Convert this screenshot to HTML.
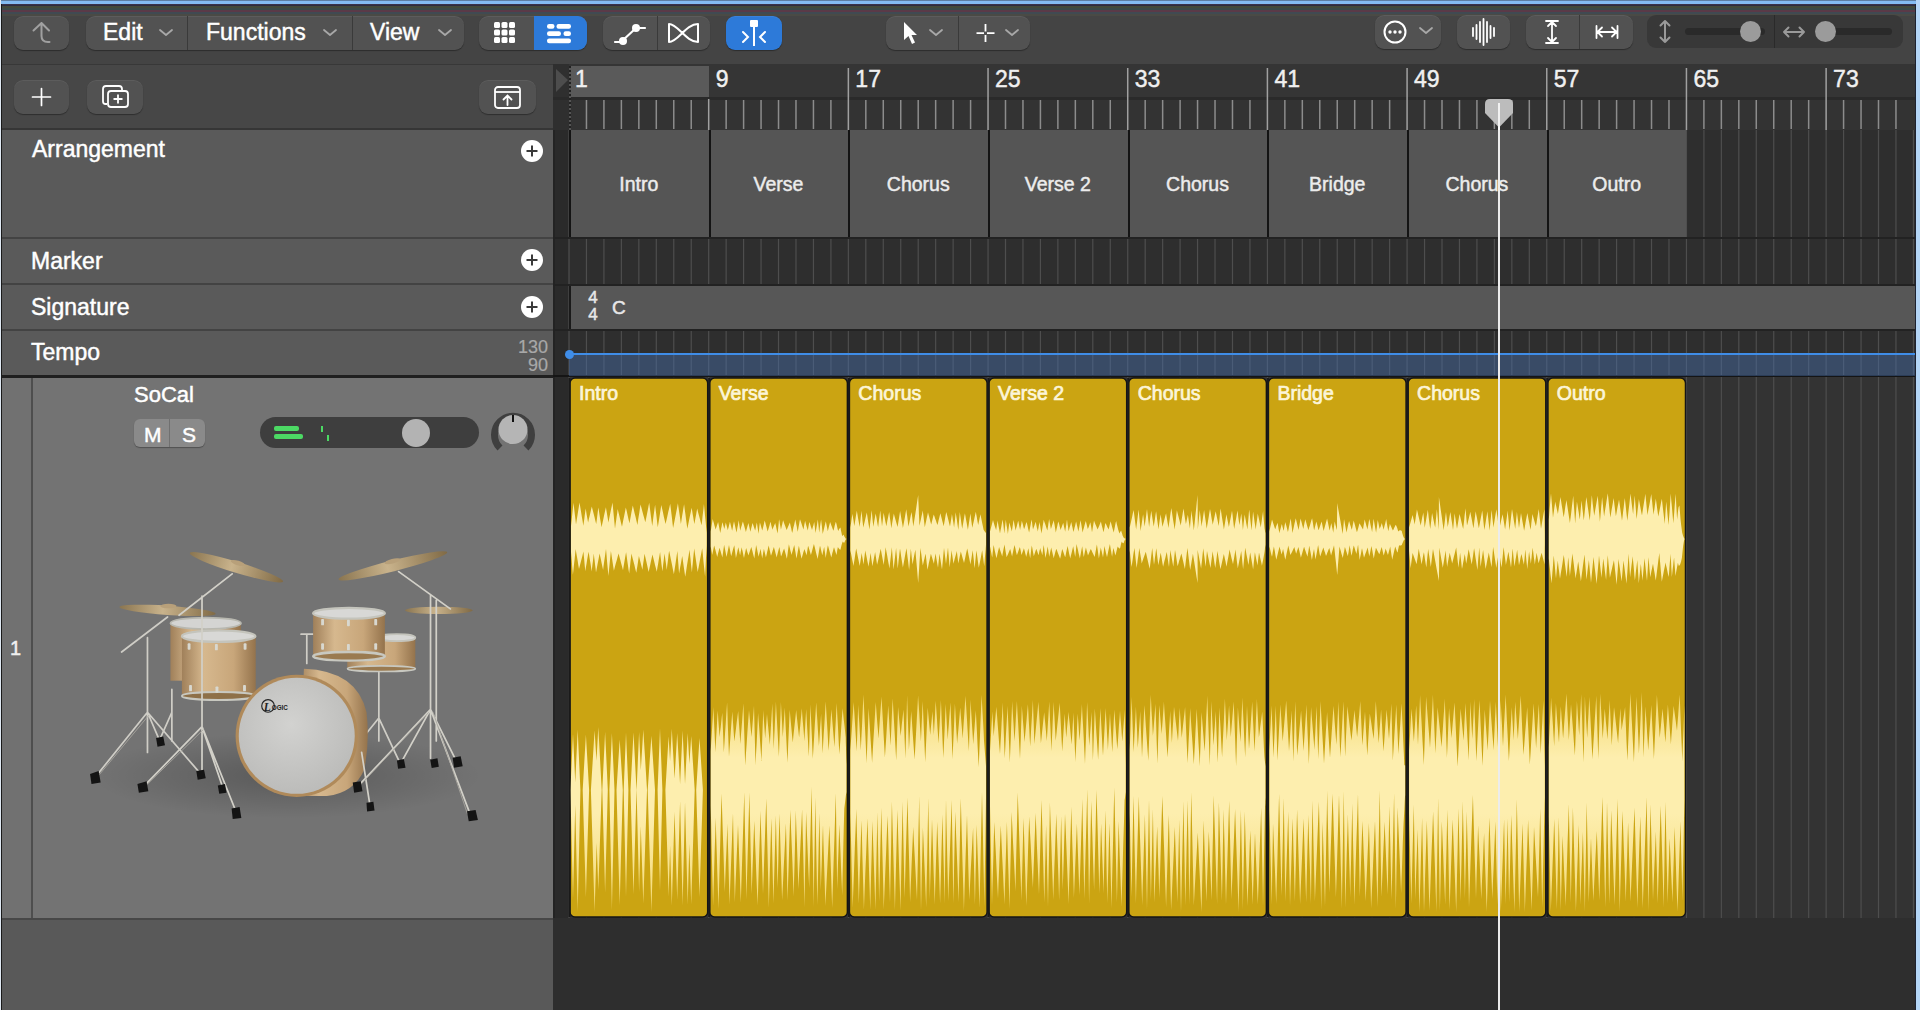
<!DOCTYPE html><html><head><meta charset="utf-8"><style>
*{margin:0;padding:0;box-sizing:border-box}
html,body{width:1920px;height:1010px;overflow:hidden;background:#2e2e2e;font-family:"Liberation Sans", sans-serif;}
.a{position:absolute}
.btn{position:absolute;background:#4d4d4d;border-radius:9px;box-shadow:0 1px 1px rgba(0,0,0,.35), inset 0 1px 0 rgba(255,255,255,.06)}
.t{position:absolute;white-space:pre;color:#fff;line-height:1;-webkit-text-stroke:0.45px currentColor}
</style></head><body><div class="a" style="left:0;top:0;width:1920px;height:4px;background:#84bcf2"></div>
<div class="a" style="left:0;top:0;width:1920px;height:1px;background:#5d7fa3"></div>
<div class="a" style="left:0;top:4px;width:1920px;height:60px;background:#444444"></div>
<div class="a" style="left:0;top:4px;width:1920px;height:1px;background:#3a3448"></div>
<div class="a" style="left:0;top:5px;width:1920px;height:1px;background:#2e2c40"></div>
<div class="a" style="left:0;top:6px;width:1920px;height:2px;background:#434a3a"></div>
<div class="a" style="left:0;top:8px;width:1920px;height:2px;background:#3a4a48"></div>
<div class="a" style="left:0;top:10px;width:1920px;height:2px;background:#5a3a48"></div>
<div class="a" style="left:0;top:12px;width:1920px;height:2px;background:#404a52"></div>
<div class="a" style="left:0;top:14px;width:1920px;height:2px;background:#4a4a45"></div>
<div class="a" style="left:0;top:64px;width:553px;height:66px;background:#474747"></div>
<div class="a" style="left:0;top:64px;width:553px;height:1px;background:#383838"></div>
<div class="a" style="left:0;top:128px;width:553px;height:2px;background:#363636"></div>
<div class="btn" style="left:14px;top:16px;width:55px;height:34px;background:#525252;border-radius:9px"></div>
<svg class="a" style="left:28px;top:18px" width="30" height="30"><path d="M5.5 12.5 L13.5 5 L21 12.5 M13.5 5 L13.5 18 Q13.5 24 20 24 L21.5 24" fill="none" stroke="#a0a0a0" stroke-width="2" stroke-linecap="round" stroke-linejoin="round"/></svg>
<div class="btn" style="left:86px;top:16px;width:378px;height:34px;background:#525252;border-radius:9px"></div>
<div class="a" style="left:187px;top:16px;width:1px;height:34px;background:#3a3a3a"></div>
<div class="a" style="left:352px;top:16px;width:1px;height:34px;background:#3a3a3a"></div>
<div class="t" style="left:103px;top:20.5px;font-size:23px;color:#fff;font-weight:normal;">Edit</div>
<svg class="a" style="left:159px;top:28px" width="14" height="10"><polyline points="1,2 7,7 13,2" fill="none" stroke="#a8a8a8" stroke-width="1.8" stroke-linecap="round" stroke-linejoin="round"/></svg>
<div class="t" style="left:206px;top:20.5px;font-size:23px;color:#fff;font-weight:normal;">Functions</div>
<svg class="a" style="left:323px;top:28px" width="14" height="10"><polyline points="1,2 7,7 13,2" fill="none" stroke="#a8a8a8" stroke-width="1.8" stroke-linecap="round" stroke-linejoin="round"/></svg>
<div class="t" style="left:370px;top:20.5px;font-size:23px;color:#fff;font-weight:normal;">View</div>
<svg class="a" style="left:438px;top:28px" width="14" height="10"><polyline points="1,2 7,7 13,2" fill="none" stroke="#a8a8a8" stroke-width="1.8" stroke-linecap="round" stroke-linejoin="round"/></svg>
<div class="btn" style="left:479px;top:16px;width:108px;height:34px;background:#525252;border-radius:9px"></div>
<div class="a" style="left:534px;top:16px;width:53px;height:34px;background:#2d7ad9;border-radius:0 9px 9px 0"></div>
<svg class="a" style="left:494px;top:22px" width="22" height="22"><rect x="0.0" y="0.0" width="6" height="6" rx="1.5" fill="#fff"/><rect x="7.5" y="0.0" width="6" height="6" rx="1.5" fill="#fff"/><rect x="15.0" y="0.0" width="6" height="6" rx="1.5" fill="#fff"/><rect x="0.0" y="7.5" width="6" height="6" rx="1.5" fill="#fff"/><rect x="7.5" y="7.5" width="6" height="6" rx="1.5" fill="#fff"/><rect x="15.0" y="7.5" width="6" height="6" rx="1.5" fill="#fff"/><rect x="0.0" y="15.0" width="6" height="6" rx="1.5" fill="#fff"/><rect x="7.5" y="15.0" width="6" height="6" rx="1.5" fill="#fff"/><rect x="15.0" y="15.0" width="6" height="6" rx="1.5" fill="#fff"/></svg>
<svg class="a" style="left:547px;top:24px" width="26" height="20"><rect x="0" y="0" width="7.5" height="4.8" rx="2.2" fill="#fff"/><rect x="9.5" y="0" width="14.5" height="4.8" rx="2.2" fill="#fff"/><rect x="0" y="7.2" width="14" height="4.8" rx="2.2" fill="#fff"/><rect x="16.5" y="7.2" width="7.5" height="4.8" rx="2.2" fill="#fff"/><rect x="0" y="14.4" width="24" height="4.8" rx="2.2" fill="#fff"/></svg>
<div class="btn" style="left:603px;top:16px;width:107px;height:34px;background:#525252;border-radius:9px"></div>
<div class="a" style="left:657px;top:16px;width:1px;height:34px;background:#3a3a3a"></div>
<svg class="a" style="left:612px;top:20px" width="36" height="28"><path d="M3 22 L9 22 L24 8 L33 8" fill="none" stroke="#fff" stroke-width="2.2" stroke-linecap="round"/><circle cx="11" cy="21" r="4" fill="#fff"/><circle cx="24" cy="8" r="4" fill="#fff"/></svg>
<svg class="a" style="left:666px;top:21px" width="36" height="26"><path d="M3 3 L3 21 C 12 21 20 3 32 3 L32 21 C 20 21 12 3 3 3 Z" fill="none" stroke="#fff" stroke-width="2" stroke-linejoin="round"/></svg>
<div class="btn" style="left:726px;top:16px;width:56px;height:34px;background:#2d7ad9;border-radius:9px"></div>
<svg class="a" style="left:738px;top:18px" width="32" height="30"><path d="M16 8 L16 28" stroke="#fff" stroke-width="2"/><rect x="12" y="2" width="8" height="7" rx="1" fill="#fff"/><path d="M5 14 L10 19 L5 24 M27 14 L22 19 L27 24" fill="none" stroke="#fff" stroke-width="2" stroke-linecap="round"/></svg>
<div class="btn" style="left:886px;top:16px;width:144px;height:34px;background:#525252;border-radius:9px"></div>
<div class="a" style="left:958px;top:16px;width:1px;height:34px;background:#3a3a3a"></div>
<svg class="a" style="left:900px;top:20px" width="22" height="26"><path d="M4 2 L4 20 L8.5 16 L12 24 L15 22.5 L11.5 15 L17 15 Z" fill="#fff"/></svg>
<svg class="a" style="left:929px;top:28px" width="14" height="10"><polyline points="1,2 7,7 13,2" fill="none" stroke="#a8a8a8" stroke-width="1.8" stroke-linecap="round" stroke-linejoin="round"/></svg>
<svg class="a" style="left:972px;top:20px" width="26" height="26"><path d="M13.5 4 L13.5 11.5 M13.5 15 L13.5 22 M4.5 13.2 L12 13.2 M15 13.2 L22.5 13.2" stroke="#fff" stroke-width="1.8"/></svg>
<svg class="a" style="left:1005px;top:28px" width="14" height="10"><polyline points="1,2 7,7 13,2" fill="none" stroke="#a8a8a8" stroke-width="1.8" stroke-linecap="round" stroke-linejoin="round"/></svg>
<div class="btn" style="left:1375px;top:14.5px;width:66px;height:34.0px;background:#525252;border-radius:9px"></div>
<svg class="a" style="left:1381px;top:17.5px" width="28" height="28"><circle cx="14" cy="14" r="10.5" fill="none" stroke="#fff" stroke-width="2"/><circle cx="9" cy="14" r="1.7" fill="#fff"/><circle cx="14" cy="14" r="1.7" fill="#fff"/><circle cx="19" cy="14" r="1.7" fill="#fff"/></svg>
<svg class="a" style="left:1419px;top:26px" width="14" height="10"><polyline points="1,2 7,7 13,2" fill="none" stroke="#a8a8a8" stroke-width="1.8" stroke-linecap="round" stroke-linejoin="round"/></svg>
<div class="btn" style="left:1457px;top:14.5px;width:53px;height:34.0px;background:#525252;border-radius:9px"></div>
<svg class="a" style="left:1471px;top:17.5px" width="28" height="28"><line x1="2" y1="10.0" x2="2" y2="18.0" stroke="#fff" stroke-width="1.8" stroke-linecap="round"/><line x1="5.5" y1="7.0" x2="5.5" y2="21.0" stroke="#fff" stroke-width="1.8" stroke-linecap="round"/><line x1="9" y1="4.0" x2="9" y2="24.0" stroke="#fff" stroke-width="1.8" stroke-linecap="round"/><line x1="12.5" y1="1.0" x2="12.5" y2="27.0" stroke="#fff" stroke-width="1.8" stroke-linecap="round"/><line x1="16" y1="4.0" x2="16" y2="24.0" stroke="#fff" stroke-width="1.8" stroke-linecap="round"/><line x1="19.5" y1="8.0" x2="19.5" y2="20.0" stroke="#fff" stroke-width="1.8" stroke-linecap="round"/><line x1="23" y1="10.0" x2="23" y2="18.0" stroke="#fff" stroke-width="1.8" stroke-linecap="round"/></svg>
<div class="btn" style="left:1526px;top:14.5px;width:107px;height:34.0px;background:#525252;border-radius:9px"></div>
<div class="a" style="left:1579px;top:14.5px;width:1px;height:34.0px;background:#3a3a3a"></div>
<svg class="a" style="left:1541px;top:18px" width="22" height="28"><path d="M5 3 L17 3 M5 25 L17 25 M11 4 L11 24 M7 8 L11 4 L15 8 M7 20 L11 24 L15 20" fill="none" stroke="#fff" stroke-width="1.8" stroke-linecap="round" stroke-linejoin="round"/></svg>
<svg class="a" style="left:1594px;top:20.5px" width="26" height="22"><path d="M2.5 5 L2.5 17 M23.5 5 L23.5 17 M3.5 11 L22.5 11 M8 6.5 L3.5 11 L8 15.5 M18 6.5 L22.5 11 L18 15.5" fill="none" stroke="#fff" stroke-width="1.8" stroke-linecap="round" stroke-linejoin="round"/></svg>
<div class="a" style="left:1647px;top:15px;width:256px;height:33px;background:#383838;border-radius:9px"></div>
<div class="a" style="left:1774px;top:15px;width:1px;height:33px;background:#2a2a2a"></div>
<svg class="a" style="left:1655px;top:18px" width="20" height="28"><path d="M10 3 L10 24 M5.5 7.5 L10 3 L14.5 7.5 M5.5 19.5 L10 24 L14.5 19.5" fill="none" stroke="#9a9a9a" stroke-width="2" stroke-linecap="round" stroke-linejoin="round"/></svg>
<div class="a" style="left:1685px;top:28px;width:80px;height:7px;background:#2a2a2a;border-radius:4px"></div>
<div class="a" style="left:1740px;top:21px;width:21px;height:21px;background:#9b9b9b;border-radius:50%"></div>
<svg class="a" style="left:1781px;top:20.5px" width="26" height="22"><path d="M3 11 L23 11 M7.5 6.5 L3 11 L7.5 15.5 M18.5 6.5 L23 11 L18.5 15.5" fill="none" stroke="#9a9a9a" stroke-width="2" stroke-linecap="round" stroke-linejoin="round"/></svg>
<div class="a" style="left:1816px;top:28px;width:76px;height:7px;background:#2a2a2a;border-radius:4px"></div>
<div class="a" style="left:1815px;top:21px;width:21px;height:21px;background:#9b9b9b;border-radius:50%"></div>
<div class="btn" style="left:14px;top:80px;width:55px;height:34px;background:#525252;border-radius:9px"></div>
<svg class="a" style="left:29px;top:84px" width="26" height="26"><path d="M12.5 4.5 L12.5 21.5 M3.5 13 L21.5 13" stroke="#fff" stroke-width="1.7" stroke-linecap="round"/></svg>
<div class="btn" style="left:87px;top:80px;width:56px;height:34px;background:#525252;border-radius:9px"></div>
<svg class="a" style="left:101px;top:84px" width="30" height="26"><path d="M6 20 L4.5 20 Q2 20 2 17.5 L2 5 Q2 2 5 2 L18 2 Q21 2 21 5 L21 6" fill="none" stroke="#fff" stroke-width="1.8"/><rect x="7" y="7" width="20" height="16" rx="3" fill="none" stroke="#fff" stroke-width="1.8"/><path d="M17 10.5 L17 19.5 M12.5 15 L21.5 15" stroke="#fff" stroke-width="1.8"/></svg>
<div class="btn" style="left:479px;top:80px;width:57px;height:34px;background:#525252;border-radius:9px"></div>
<svg class="a" style="left:493px;top:85px" width="30" height="26"><rect x="2" y="2" width="25" height="21" rx="3" fill="none" stroke="#fff" stroke-width="1.8"/><path d="M2 7 L27 7" stroke="#fff" stroke-width="1.8"/><path d="M14.5 20 L14.5 11 M10.5 14.5 L14.5 10.5 L18.5 14.5" fill="none" stroke="#fff" stroke-width="1.8" stroke-linecap="round"/></svg>
<div class="a" style="left:553px;top:64px;width:1362px;height:66px;background:#353535"></div>
<div class="a" style="left:553px;top:64px;width:16px;height:66px;background:#2f2f2f"></div>
<div class="a" style="left:569px;top:66px;width:139.7px;height:31px;background:#5a5a5a"></div>
<div class="a" style="left:553px;top:97px;width:1362px;height:3px;background:#2a2a2a"></div>
<div class="a" style="left:569px;top:100px;width:1346px;height:30px;background:#333333"></div>
<svg class="a" style="left:555px;top:66px" width="14" height="28"><path d="M1 3 L13 14 L1 26 Z" fill="#4d4d4d"/></svg>
<div class="a" style="left:569px;top:66px;width:2px;height:64px;background:repeating-linear-gradient(#222 0 2px,#555 2px 4px)"></div>
<svg class="a" style="left:0;top:0" width="1920" height="140"><rect x="585.71" y="100" width="1.5" height="29" fill="#8c8c8c"/><rect x="603.17" y="100" width="1.5" height="29" fill="#8c8c8c"/><rect x="620.63" y="100" width="1.5" height="29" fill="#8c8c8c"/><rect x="638.09" y="100" width="1.5" height="29" fill="#8c8c8c"/><rect x="655.55" y="100" width="1.5" height="29" fill="#8c8c8c"/><rect x="673.01" y="100" width="1.5" height="29" fill="#8c8c8c"/><rect x="690.47" y="100" width="1.5" height="29" fill="#8c8c8c"/><rect x="707.93" y="99" width="1.5" height="31" fill="#a0a0a0"/><rect x="725.39" y="100" width="1.5" height="29" fill="#8c8c8c"/><rect x="742.85" y="100" width="1.5" height="29" fill="#8c8c8c"/><rect x="760.31" y="100" width="1.5" height="29" fill="#8c8c8c"/><rect x="777.77" y="100" width="1.5" height="29" fill="#8c8c8c"/><rect x="795.23" y="100" width="1.5" height="29" fill="#8c8c8c"/><rect x="812.69" y="100" width="1.5" height="29" fill="#8c8c8c"/><rect x="830.15" y="100" width="1.5" height="29" fill="#8c8c8c"/><rect x="847.61" y="68" width="1.5" height="62" fill="#a0a0a0"/><rect x="865.07" y="100" width="1.5" height="29" fill="#8c8c8c"/><rect x="882.53" y="100" width="1.5" height="29" fill="#8c8c8c"/><rect x="899.99" y="100" width="1.5" height="29" fill="#8c8c8c"/><rect x="917.45" y="100" width="1.5" height="29" fill="#8c8c8c"/><rect x="934.91" y="100" width="1.5" height="29" fill="#8c8c8c"/><rect x="952.37" y="100" width="1.5" height="29" fill="#8c8c8c"/><rect x="969.83" y="100" width="1.5" height="29" fill="#8c8c8c"/><rect x="987.29" y="68" width="1.5" height="62" fill="#a0a0a0"/><rect x="1004.75" y="100" width="1.5" height="29" fill="#8c8c8c"/><rect x="1022.21" y="100" width="1.5" height="29" fill="#8c8c8c"/><rect x="1039.67" y="100" width="1.5" height="29" fill="#8c8c8c"/><rect x="1057.13" y="100" width="1.5" height="29" fill="#8c8c8c"/><rect x="1074.59" y="100" width="1.5" height="29" fill="#8c8c8c"/><rect x="1092.05" y="100" width="1.5" height="29" fill="#8c8c8c"/><rect x="1109.51" y="100" width="1.5" height="29" fill="#8c8c8c"/><rect x="1126.97" y="68" width="1.5" height="62" fill="#a0a0a0"/><rect x="1144.43" y="100" width="1.5" height="29" fill="#8c8c8c"/><rect x="1161.89" y="100" width="1.5" height="29" fill="#8c8c8c"/><rect x="1179.35" y="100" width="1.5" height="29" fill="#8c8c8c"/><rect x="1196.81" y="100" width="1.5" height="29" fill="#8c8c8c"/><rect x="1214.27" y="100" width="1.5" height="29" fill="#8c8c8c"/><rect x="1231.73" y="100" width="1.5" height="29" fill="#8c8c8c"/><rect x="1249.19" y="100" width="1.5" height="29" fill="#8c8c8c"/><rect x="1266.65" y="68" width="1.5" height="62" fill="#a0a0a0"/><rect x="1284.11" y="100" width="1.5" height="29" fill="#8c8c8c"/><rect x="1301.57" y="100" width="1.5" height="29" fill="#8c8c8c"/><rect x="1319.03" y="100" width="1.5" height="29" fill="#8c8c8c"/><rect x="1336.49" y="100" width="1.5" height="29" fill="#8c8c8c"/><rect x="1353.95" y="100" width="1.5" height="29" fill="#8c8c8c"/><rect x="1371.41" y="100" width="1.5" height="29" fill="#8c8c8c"/><rect x="1388.87" y="100" width="1.5" height="29" fill="#8c8c8c"/><rect x="1406.33" y="68" width="1.5" height="62" fill="#a0a0a0"/><rect x="1423.79" y="100" width="1.5" height="29" fill="#8c8c8c"/><rect x="1441.25" y="100" width="1.5" height="29" fill="#8c8c8c"/><rect x="1458.71" y="100" width="1.5" height="29" fill="#8c8c8c"/><rect x="1476.17" y="100" width="1.5" height="29" fill="#8c8c8c"/><rect x="1493.63" y="100" width="1.5" height="29" fill="#8c8c8c"/><rect x="1511.09" y="100" width="1.5" height="29" fill="#8c8c8c"/><rect x="1528.55" y="100" width="1.5" height="29" fill="#8c8c8c"/><rect x="1546.01" y="68" width="1.5" height="62" fill="#a0a0a0"/><rect x="1563.47" y="100" width="1.5" height="29" fill="#8c8c8c"/><rect x="1580.93" y="100" width="1.5" height="29" fill="#8c8c8c"/><rect x="1598.39" y="100" width="1.5" height="29" fill="#8c8c8c"/><rect x="1615.85" y="100" width="1.5" height="29" fill="#8c8c8c"/><rect x="1633.31" y="100" width="1.5" height="29" fill="#8c8c8c"/><rect x="1650.77" y="100" width="1.5" height="29" fill="#8c8c8c"/><rect x="1668.23" y="100" width="1.5" height="29" fill="#8c8c8c"/><rect x="1685.69" y="68" width="1.5" height="62" fill="#a0a0a0"/><rect x="1703.15" y="100" width="1.5" height="29" fill="#8c8c8c"/><rect x="1720.61" y="100" width="1.5" height="29" fill="#8c8c8c"/><rect x="1738.07" y="100" width="1.5" height="29" fill="#8c8c8c"/><rect x="1755.53" y="100" width="1.5" height="29" fill="#8c8c8c"/><rect x="1772.99" y="100" width="1.5" height="29" fill="#8c8c8c"/><rect x="1790.45" y="100" width="1.5" height="29" fill="#8c8c8c"/><rect x="1807.91" y="100" width="1.5" height="29" fill="#8c8c8c"/><rect x="1825.37" y="68" width="1.5" height="62" fill="#a0a0a0"/><rect x="1842.83" y="100" width="1.5" height="29" fill="#8c8c8c"/><rect x="1860.29" y="100" width="1.5" height="29" fill="#8c8c8c"/><rect x="1877.75" y="100" width="1.5" height="29" fill="#8c8c8c"/><rect x="1895.21" y="100" width="1.5" height="29" fill="#8c8c8c"/></svg>
<div class="t" style="left:575px;top:67.5px;font-size:23px;color:#f0f0f0;font-weight:normal;">1</div>
<div class="t" style="left:715.6800000000001px;top:67.5px;font-size:23px;color:#f0f0f0;font-weight:normal;">9</div>
<div class="t" style="left:855.36px;top:67.5px;font-size:23px;color:#f0f0f0;font-weight:normal;">17</div>
<div class="t" style="left:995.04px;top:67.5px;font-size:23px;color:#f0f0f0;font-weight:normal;">25</div>
<div class="t" style="left:1134.72px;top:67.5px;font-size:23px;color:#f0f0f0;font-weight:normal;">33</div>
<div class="t" style="left:1274.4px;top:67.5px;font-size:23px;color:#f0f0f0;font-weight:normal;">41</div>
<div class="t" style="left:1414.08px;top:67.5px;font-size:23px;color:#f0f0f0;font-weight:normal;">49</div>
<div class="t" style="left:1553.76px;top:67.5px;font-size:23px;color:#f0f0f0;font-weight:normal;">57</div>
<div class="t" style="left:1693.44px;top:67.5px;font-size:23px;color:#f0f0f0;font-weight:normal;">65</div>
<div class="t" style="left:1833.1200000000001px;top:67.5px;font-size:23px;color:#f0f0f0;font-weight:normal;">73</div>
<div class="a" style="left:0;top:130px;width:553px;height:247px;background:#5a5a5a"></div>
<div class="a" style="left:0;top:237px;width:553px;height:2px;background:#434343"></div>
<div class="a" style="left:0;top:283px;width:553px;height:2px;background:#434343"></div>
<div class="a" style="left:0;top:329px;width:553px;height:2px;background:#434343"></div>
<div class="a" style="left:0;top:375px;width:553px;height:3px;background:#1f1f1f"></div>
<div class="t" style="left:32px;top:138.0px;font-size:23px;color:#fff;font-weight:normal;">Arrangement</div>
<div class="t" style="left:31px;top:249.5px;font-size:23px;color:#fff;font-weight:normal;">Marker</div>
<div class="t" style="left:31px;top:295.5px;font-size:23px;color:#fff;font-weight:normal;">Signature</div>
<div class="t" style="left:31px;top:341.0px;font-size:23px;color:#fff;font-weight:normal;">Tempo</div>
<svg class="a" style="left:520px;top:139px" width="24" height="24"><circle cx="12" cy="12" r="11" fill="#fff"/><path d="M12 6.5 L12 17.5 M6.5 12 L17.5 12" stroke="#3a3a3a" stroke-width="2"/></svg>
<svg class="a" style="left:520px;top:248px" width="24" height="24"><circle cx="12" cy="12" r="11" fill="#fff"/><path d="M12 6.5 L12 17.5 M6.5 12 L17.5 12" stroke="#3a3a3a" stroke-width="2"/></svg>
<svg class="a" style="left:520px;top:295px" width="24" height="24"><circle cx="12" cy="12" r="11" fill="#fff"/><path d="M12 6.5 L12 17.5 M6.5 12 L17.5 12" stroke="#3a3a3a" stroke-width="2"/></svg>
<div class="t" style="left:500px;top:337.5px;width:48px;text-align:right;font-size:18px;color:#a8a8a8;line-height:18px;-webkit-text-stroke:0.2px #a8a8a8">130<br>90</div>
<div class="a" style="left:553px;top:130px;width:1362px;height:788px;background:#2e2e2e"></div>
<div class="a" style="left:569px;top:377px;width:1346px;height:541px;background:#333333"></div>
<div class="a" style="left:553px;top:130px;width:16px;height:788px;background:#2a2a2a"></div>
<div class="a" style="left:553px;top:130px;width:2px;height:880px;background:#232323"></div>
<svg class="a" style="left:0;top:0" width="1920" height="1010"><rect x="568.40" y="130" width="1.2" height="788" fill="#4e4e4e"/><rect x="585.86" y="130" width="1.2" height="788" fill="#4e4e4e"/><rect x="603.32" y="130" width="1.2" height="788" fill="#4e4e4e"/><rect x="620.78" y="130" width="1.2" height="788" fill="#4e4e4e"/><rect x="638.24" y="130" width="1.2" height="788" fill="#4e4e4e"/><rect x="655.70" y="130" width="1.2" height="788" fill="#4e4e4e"/><rect x="673.16" y="130" width="1.2" height="788" fill="#4e4e4e"/><rect x="690.62" y="130" width="1.2" height="788" fill="#4e4e4e"/><rect x="708.08" y="130" width="1.2" height="788" fill="#4e4e4e"/><rect x="725.54" y="130" width="1.2" height="788" fill="#4e4e4e"/><rect x="743.00" y="130" width="1.2" height="788" fill="#4e4e4e"/><rect x="760.46" y="130" width="1.2" height="788" fill="#4e4e4e"/><rect x="777.92" y="130" width="1.2" height="788" fill="#4e4e4e"/><rect x="795.38" y="130" width="1.2" height="788" fill="#4e4e4e"/><rect x="812.84" y="130" width="1.2" height="788" fill="#4e4e4e"/><rect x="830.30" y="130" width="1.2" height="788" fill="#4e4e4e"/><rect x="847.76" y="130" width="1.2" height="788" fill="#4e4e4e"/><rect x="865.22" y="130" width="1.2" height="788" fill="#4e4e4e"/><rect x="882.68" y="130" width="1.2" height="788" fill="#4e4e4e"/><rect x="900.14" y="130" width="1.2" height="788" fill="#4e4e4e"/><rect x="917.60" y="130" width="1.2" height="788" fill="#4e4e4e"/><rect x="935.06" y="130" width="1.2" height="788" fill="#4e4e4e"/><rect x="952.52" y="130" width="1.2" height="788" fill="#4e4e4e"/><rect x="969.98" y="130" width="1.2" height="788" fill="#4e4e4e"/><rect x="987.44" y="130" width="1.2" height="788" fill="#4e4e4e"/><rect x="1004.90" y="130" width="1.2" height="788" fill="#4e4e4e"/><rect x="1022.36" y="130" width="1.2" height="788" fill="#4e4e4e"/><rect x="1039.82" y="130" width="1.2" height="788" fill="#4e4e4e"/><rect x="1057.28" y="130" width="1.2" height="788" fill="#4e4e4e"/><rect x="1074.74" y="130" width="1.2" height="788" fill="#4e4e4e"/><rect x="1092.20" y="130" width="1.2" height="788" fill="#4e4e4e"/><rect x="1109.66" y="130" width="1.2" height="788" fill="#4e4e4e"/><rect x="1127.12" y="130" width="1.2" height="788" fill="#4e4e4e"/><rect x="1144.58" y="130" width="1.2" height="788" fill="#4e4e4e"/><rect x="1162.04" y="130" width="1.2" height="788" fill="#4e4e4e"/><rect x="1179.50" y="130" width="1.2" height="788" fill="#4e4e4e"/><rect x="1196.96" y="130" width="1.2" height="788" fill="#4e4e4e"/><rect x="1214.42" y="130" width="1.2" height="788" fill="#4e4e4e"/><rect x="1231.88" y="130" width="1.2" height="788" fill="#4e4e4e"/><rect x="1249.34" y="130" width="1.2" height="788" fill="#4e4e4e"/><rect x="1266.80" y="130" width="1.2" height="788" fill="#4e4e4e"/><rect x="1284.26" y="130" width="1.2" height="788" fill="#4e4e4e"/><rect x="1301.72" y="130" width="1.2" height="788" fill="#4e4e4e"/><rect x="1319.18" y="130" width="1.2" height="788" fill="#4e4e4e"/><rect x="1336.64" y="130" width="1.2" height="788" fill="#4e4e4e"/><rect x="1354.10" y="130" width="1.2" height="788" fill="#4e4e4e"/><rect x="1371.56" y="130" width="1.2" height="788" fill="#4e4e4e"/><rect x="1389.02" y="130" width="1.2" height="788" fill="#4e4e4e"/><rect x="1406.48" y="130" width="1.2" height="788" fill="#4e4e4e"/><rect x="1423.94" y="130" width="1.2" height="788" fill="#4e4e4e"/><rect x="1441.40" y="130" width="1.2" height="788" fill="#4e4e4e"/><rect x="1458.86" y="130" width="1.2" height="788" fill="#4e4e4e"/><rect x="1476.32" y="130" width="1.2" height="788" fill="#4e4e4e"/><rect x="1493.78" y="130" width="1.2" height="788" fill="#4e4e4e"/><rect x="1511.24" y="130" width="1.2" height="788" fill="#4e4e4e"/><rect x="1528.70" y="130" width="1.2" height="788" fill="#4e4e4e"/><rect x="1546.16" y="130" width="1.2" height="788" fill="#4e4e4e"/><rect x="1563.62" y="130" width="1.2" height="788" fill="#4e4e4e"/><rect x="1581.08" y="130" width="1.2" height="788" fill="#4e4e4e"/><rect x="1598.54" y="130" width="1.2" height="788" fill="#4e4e4e"/><rect x="1616.00" y="130" width="1.2" height="788" fill="#4e4e4e"/><rect x="1633.46" y="130" width="1.2" height="788" fill="#4e4e4e"/><rect x="1650.92" y="130" width="1.2" height="788" fill="#4e4e4e"/><rect x="1668.38" y="130" width="1.2" height="788" fill="#4e4e4e"/><rect x="1685.84" y="130" width="1.2" height="788" fill="#4e4e4e"/><rect x="1703.30" y="130" width="1.2" height="788" fill="#4e4e4e"/><rect x="1720.76" y="130" width="1.2" height="788" fill="#4e4e4e"/><rect x="1738.22" y="130" width="1.2" height="788" fill="#4e4e4e"/><rect x="1755.68" y="130" width="1.2" height="788" fill="#4e4e4e"/><rect x="1773.14" y="130" width="1.2" height="788" fill="#4e4e4e"/><rect x="1790.60" y="130" width="1.2" height="788" fill="#4e4e4e"/><rect x="1808.06" y="130" width="1.2" height="788" fill="#4e4e4e"/><rect x="1825.52" y="130" width="1.2" height="788" fill="#4e4e4e"/><rect x="1842.98" y="130" width="1.2" height="788" fill="#4e4e4e"/><rect x="1860.44" y="130" width="1.2" height="788" fill="#4e4e4e"/><rect x="1877.90" y="130" width="1.2" height="788" fill="#4e4e4e"/><rect x="1895.36" y="130" width="1.2" height="788" fill="#4e4e4e"/><rect x="1912.82" y="130" width="1.2" height="788" fill="#4e4e4e"/></svg>
<div class="a" style="left:569.0px;top:130px;width:139.7px;height:107px;background:#555555;border-left:2px solid #141414"></div>
<div class="t" style="left:569.0px;top:175.4px;width:139.7px;text-align:center;font-size:19.5px;color:#ececec">Intro</div>
<div class="a" style="left:708.7px;top:130px;width:139.7px;height:107px;background:#555555;border-left:2px solid #141414"></div>
<div class="t" style="left:708.7px;top:175.4px;width:139.7px;text-align:center;font-size:19.5px;color:#ececec">Verse</div>
<div class="a" style="left:848.4px;top:130px;width:139.7px;height:107px;background:#555555;border-left:2px solid #141414"></div>
<div class="t" style="left:848.4px;top:175.4px;width:139.7px;text-align:center;font-size:19.5px;color:#ececec">Chorus</div>
<div class="a" style="left:988.0px;top:130px;width:139.7px;height:107px;background:#555555;border-left:2px solid #141414"></div>
<div class="t" style="left:988.0px;top:175.4px;width:139.7px;text-align:center;font-size:19.5px;color:#ececec">Verse 2</div>
<div class="a" style="left:1127.7px;top:130px;width:139.7px;height:107px;background:#555555;border-left:2px solid #141414"></div>
<div class="t" style="left:1127.7px;top:175.4px;width:139.7px;text-align:center;font-size:19.5px;color:#ececec">Chorus</div>
<div class="a" style="left:1267.4px;top:130px;width:139.7px;height:107px;background:#555555;border-left:2px solid #141414"></div>
<div class="t" style="left:1267.4px;top:175.4px;width:139.7px;text-align:center;font-size:19.5px;color:#ececec">Bridge</div>
<div class="a" style="left:1407.1px;top:130px;width:139.7px;height:107px;background:#555555;border-left:2px solid #141414"></div>
<div class="t" style="left:1407.1px;top:175.4px;width:139.7px;text-align:center;font-size:19.5px;color:#ececec">Chorus</div>
<div class="a" style="left:1546.8px;top:130px;width:139.7px;height:107px;background:#555555;border-left:2px solid #141414"></div>
<div class="t" style="left:1546.8px;top:175.4px;width:139.7px;text-align:center;font-size:19.5px;color:#ececec">Outro</div>
<div class="a" style="left:569px;top:286px;width:1346px;height:44px;background:#575757;border-left:2px solid #1a1a1a"></div>
<div class="a" style="left:553px;top:237px;width:1362px;height:2px;background:#222"></div>
<div class="a" style="left:553px;top:284px;width:1362px;height:2px;background:#222"></div>
<div class="a" style="left:553px;top:329px;width:1362px;height:2px;background:#222"></div>
<div class="a" style="left:553px;top:375px;width:1362px;height:2px;background:#151515"></div>
<div class="t" style="left:586px;top:289px;font-size:17px;color:#e8e8e8;line-height:17px;width:14px;text-align:center">4<br>4</div>
<div class="t" style="left:612px;top:297.9px;font-size:19px;color:#e8e8e8;font-weight:normal;">C</div>
<div class="a" style="left:569px;top:355px;width:1346px;height:21px;background:rgba(70,110,170,.45)"></div>
<div class="a" style="left:569px;top:353px;width:1346px;height:2px;background:#3f8de8"></div>
<div class="a" style="left:565px;top:350px;width:9px;height:9px;border-radius:50%;background:#3f8de8"></div>
<div class="a" style="left:0;top:378px;width:553px;height:541px;background:#737373"></div>
<div class="a" style="left:0;top:378px;width:32px;height:541px;background:#717171"></div>
<div class="a" style="left:31px;top:378px;width:1.5px;height:541px;background:#4e4e4e"></div>
<div class="a" style="left:0;top:918px;width:553px;height:2px;background:#474747"></div>
<div class="a" style="left:0;top:920px;width:553px;height:90px;background:#595959"></div>
<div class="t" style="left:10px;top:638.1px;font-size:20px;color:#f0f0f0;font-weight:normal;">1</div>
<div class="t" style="left:134px;top:384.4px;font-size:22px;color:#fff;font-weight:normal;">SoCal</div>
<div class="a" style="left:134px;top:419px;width:71px;height:28px;background:#8a8a8a;border-radius:6px;box-shadow:0 1px 1px rgba(0,0,0,.3)"></div>
<div class="a" style="left:169px;top:419px;width:1px;height:28px;background:#707070"></div>
<div class="t" style="left:144px;top:424.2px;font-size:21px;color:#fff;font-weight:normal;">M</div>
<div class="t" style="left:182px;top:424.2px;font-size:21px;color:#fff;font-weight:normal;">S</div>
<div class="a" style="left:260px;top:417px;width:219px;height:31px;background:#3e3e3e;border-radius:16px"></div>
<div class="a" style="left:274px;top:426px;width:25px;height:5px;background:#4cd964;border-radius:2px"></div>
<div class="a" style="left:274px;top:434px;width:29px;height:5px;background:#4cd964;border-radius:2px"></div>
<div class="a" style="left:321px;top:426px;width:1.5px;height:6px;background:#4cd964"></div>
<div class="a" style="left:327px;top:435px;width:1.5px;height:6px;background:#4cd964"></div>
<div class="a" style="left:402px;top:418.5px;width:28px;height:28px;background:#b3b3b3;border-radius:50%"></div>
<svg class="a" style="left:487px;top:404px" width="52" height="52"><path d="M 13 44 A 18.5 18.5 0 1 1 39 44" fill="none" stroke="#3f3f3f" stroke-width="7"/><circle cx="26" cy="25.5" r="14.5" fill="#b5b5b5"/><rect x="25" y="11" width="2" height="7" fill="#111"/></svg>

<svg class="a" style="left:80px;top:540px" width="420" height="290" viewBox="0 0 1463 1010">
 <defs>
  <radialGradient id="shd" cx="50%" cy="50%" r="50%"><stop offset="0" stop-color="#000" stop-opacity=".22"/><stop offset=".6" stop-color="#000" stop-opacity=".09"/><stop offset="1" stop-color="#000" stop-opacity="0"/></radialGradient>
  <linearGradient id="wood" x1="0" x2="1"><stop offset="0" stop-color="#a0805a"/><stop offset=".3" stop-color="#d6b88e"/><stop offset=".7" stop-color="#c8a67a"/><stop offset="1" stop-color="#94734c"/></linearGradient>
  <linearGradient id="cym" x1="0" x2="1"><stop offset="0" stop-color="#8a7550"/><stop offset=".45" stop-color="#c9b38c"/><stop offset="1" stop-color="#806a45"/></linearGradient>
  <radialGradient id="head" cx="45%" cy="40%" r="60%"><stop offset="0" stop-color="#d2d2d0"/><stop offset="1" stop-color="#bcbcba"/></radialGradient>
 </defs>
 <ellipse cx="720" cy="820" rx="680" ry="150" fill="url(#shd)"/>
 <g stroke="#cfcdc6" stroke-width="6" fill="none" stroke-linecap="round">
  <path d="M235 340 L235 740 M235 600 L50 830 M235 600 L280 705 M235 600 L425 820 M145 390 L305 268"/>
  <path d="M1041 450 L1041 700 M1041 620 L960 720 M1041 620 L1116 780"/>
  <path d="M320 520 L320 700 M320 600 L280 690"/>
  <path d="M790 330 L790 430 M770 328 L812 328"/>
 </g>
 <ellipse cx="545" cy="95" rx="170" ry="19" fill="url(#cym)" transform="rotate(17 545 95)"/>
 <ellipse cx="550" cy="80" rx="26" ry="8" fill="#b8a07a" transform="rotate(17 550 80)"/>
 <ellipse cx="1090" cy="90" rx="195" ry="19" fill="url(#cym)" transform="rotate(-14 1090 90)"/>
 <ellipse cx="1088" cy="74" rx="28" ry="8" fill="#b8a07a" transform="rotate(-14 1088 74)"/>
 <ellipse cx="305" cy="245" rx="168" ry="16" fill="url(#cym)" transform="rotate(4 305 245)"/>
 <ellipse cx="308" cy="230" rx="28" ry="8" fill="#b8a07a"/>
 <ellipse cx="1250" cy="245" rx="118" ry="13" fill="url(#cym)"/>
 <rect x="315" y="290" width="245" height="200" fill="url(#wood)"/>
 <ellipse cx="438" cy="290" rx="123" ry="20" fill="#d4d4d2" stroke="#b8b8b0" stroke-width="6"/>
 <rect x="355" y="335" width="257" height="208" fill="url(#wood)"/>
 <ellipse cx="483" cy="335" rx="128" ry="20" fill="#d8d8d6" stroke="#c4c4bc" stroke-width="8"/>
 <ellipse cx="483" cy="543" rx="128" ry="14" fill="#8e7048" stroke="#c8c8c0" stroke-width="7"/>
 <g fill="#d8d8d0"><rect x="375" y="360" width="10" height="22" rx="3"/><rect x="470" y="362" width="10" height="22" rx="3"/><rect x="570" y="360" width="10" height="22" rx="3"/><rect x="380" y="505" width="10" height="22" rx="3"/><rect x="472" y="510" width="10" height="22" rx="3"/><rect x="568" y="505" width="10" height="22" rx="3"/></g>
 <rect x="931" y="340" width="237" height="108" fill="url(#wood)"/>
 <ellipse cx="1104" cy="340" rx="64" ry="12" fill="#d8d8d6" stroke="#c4c4bc" stroke-width="6"/>
 <ellipse cx="1050" cy="448" rx="118" ry="10" fill="#9a7a50" stroke="#c8c8c0" stroke-width="6"/>
 <rect x="812" y="255" width="250" height="150" fill="url(#wood)"/>
 <ellipse cx="937" cy="255" rx="125" ry="19" fill="#d8d8d6" stroke="#c4c4bc" stroke-width="8"/>
 <ellipse cx="937" cy="405" rx="125" ry="15" fill="#9a7a50" stroke="#c8c8c0" stroke-width="8"/>
 <g fill="#d8d8d0"><rect x="840" y="275" width="10" height="22" rx="3"/><rect x="930" y="278" width="10" height="22" rx="3"/><rect x="1025" y="275" width="10" height="22" rx="3"/><rect x="840" y="360" width="10" height="22" rx="3"/><rect x="930" y="362" width="10" height="22" rx="3"/><rect x="1025" y="360" width="10" height="22" rx="3"/></g>
 <path d="M780 448 Q965 455 998 600 Q1010 700 990 800 Q955 880 860 892 L760 892 Z" fill="url(#wood)"/>
 <circle cx="755" cy="682" r="213" fill="#b08a5a"/>
 <circle cx="755" cy="682" r="202" fill="url(#head)"/>
 <circle cx="655" cy="578" r="22" fill="none" stroke="#222" stroke-width="4"/>
 <text x="640" y="595" font-family="Liberation Serif" font-style="italic" font-weight="bold" font-size="40" fill="#222">L</text>
 <text x="668" y="592" font-family="Liberation Sans" font-weight="bold" font-size="22" fill="#222">OGIC</text>
 <g stroke="#d2d0c8" stroke-width="6" fill="none" stroke-linecap="round">
  <path d="M425 195 L425 800 M425 650 L215 865 M425 650 L545 950 M425 650 L500 870 M345 262 L530 118"/>
  <path d="M1221 190 L1221 760 M1241 210 L1241 700 M1221 590 L966 860 M1221 590 L1361 960 M1221 590 L1311 770 M1221 590 L1116 780 M1110 110 L1290 240"/>
  <path d="M981 740 L1011 930"/>
 </g>
 <g stroke="#a9a7a0" stroke-width="3" fill="none">
  <path d="M240 610 L60 826 M430 660 L225 860 M1215 600 L975 855 M1230 600 L1350 955"/>
 </g>
 <g fill="#141414">
  <path d="M35 815 L65 805 L72 845 L40 850 Z"/>
  <path d="M200 850 L232 840 L238 875 L205 880 Z"/>
  <path d="M265 690 L290 684 L296 715 L270 720 Z"/>
  <path d="M405 805 L432 800 L438 830 L410 835 Z"/>
  <path d="M528 935 L556 930 L562 968 L532 972 Z"/>
  <path d="M480 855 L505 850 L510 880 L485 884 Z"/>
  <path d="M950 845 L978 840 L984 875 L955 880 Z"/>
  <path d="M998 915 L1022 912 L1026 942 L1000 946 Z"/>
  <path d="M1104 768 L1128 763 L1134 793 L1108 797 Z"/>
  <path d="M1298 758 L1326 753 L1333 788 L1303 793 Z"/>
  <path d="M1348 945 L1378 940 L1386 975 L1354 980 Z"/>
  <path d="M1220 765 L1245 760 L1250 790 L1225 794 Z"/>
 </g>
</svg>

<svg class="a" style="left:0;top:0" width="1920" height="1010"><defs><linearGradient id="g2" gradientUnits="userSpaceOnUse" x1="0" y1="690" x2="0" y2="915"><stop offset="0" stop-color="#f2d66a"/><stop offset=".3" stop-color="#fdeeae"/><stop offset=".55" stop-color="#fdeeae"/><stop offset="1" stop-color="#f3d870"/></linearGradient></defs><rect x="570.0" y="378" width="137.7" height="539" rx="5" fill="#cba412" stroke="#151515" stroke-width="1.5"/><path d="M571.0 526.0 L571.5 521.4 L572.0 516.7 L572.5 512.1 L573.0 507.5 L573.5 502.8 L574.0 507.1 L574.5 511.4 L575.0 515.7 L575.5 520.1 L576.0 524.4 L576.7 520.0 L577.4 515.7 L578.1 511.3 L578.8 507.0 L579.5 502.6 L580.3 507.2 L581.1 511.9 L581.8 516.5 L582.6 521.1 L583.3 525.7 L583.8 522.3 L584.3 518.9 L584.7 515.5 L585.2 512.0 L585.7 508.6 L586.2 511.4 L586.6 514.2 L587.1 517.0 L587.6 519.8 L588.1 522.5 L588.8 519.3 L589.6 516.1 L590.3 512.9 L591.0 509.7 L591.8 506.5 L592.7 510.0 L593.6 513.5 L594.5 516.9 L595.3 520.4 L596.2 523.9 L596.7 520.6 L597.1 517.3 L597.5 514.0 L597.9 510.8 L598.4 507.5 L599.0 511.4 L599.6 515.4 L600.2 519.3 L600.9 523.3 L601.5 527.2 L602.4 523.2 L603.3 519.3 L604.1 515.3 L605.0 511.3 L605.9 507.3 L606.4 510.3 L606.9 513.3 L607.4 516.3 L607.9 519.3 L608.4 522.4 L609.2 518.4 L610.0 514.4 L610.8 510.4 L611.7 506.4 L612.5 502.5 L613.0 507.7 L613.5 513.0 L614.0 518.2 L614.5 523.5 L615.0 528.7 L615.5 524.8 L616.1 520.8 L616.6 516.9 L617.2 512.9 L617.7 509.0 L618.5 512.5 L619.4 516.1 L620.3 519.7 L621.1 523.3 L622.0 526.8 L622.7 523.0 L623.5 519.1 L624.3 515.2 L625.1 511.3 L625.8 507.5 L626.6 510.6 L627.3 513.8 L628.0 516.9 L628.7 520.1 L629.4 523.3 L630.1 519.7 L630.8 516.1 L631.4 512.6 L632.1 509.0 L632.8 505.4 L633.7 509.3 L634.6 513.2 L635.6 517.1 L636.5 521.0 L637.4 524.9 L638.0 520.8 L638.6 516.8 L639.3 512.7 L639.9 508.6 L640.5 504.6 L641.5 508.1 L642.4 511.6 L643.4 515.2 L644.4 518.7 L645.3 522.3 L646.1 518.4 L646.9 514.5 L647.7 510.6 L648.4 506.7 L649.2 502.8 L649.8 507.4 L650.4 512.1 L651.0 516.7 L651.6 521.3 L652.2 525.9 L652.8 521.7 L653.3 517.5 L653.9 513.2 L654.5 509.0 L655.1 504.8 L655.6 509.3 L656.2 513.8 L656.7 518.3 L657.2 522.8 L657.8 527.3 L658.5 522.8 L659.2 518.4 L659.9 514.0 L660.6 509.6 L661.3 505.1 L662.2 508.9 L663.0 512.6 L663.8 516.4 L664.7 520.2 L665.5 523.9 L666.5 519.9 L667.4 515.9 L668.3 511.8 L669.3 507.8 L670.2 503.8 L670.8 508.6 L671.4 513.5 L672.0 518.3 L672.5 523.1 L673.1 528.0 L674.1 523.0 L675.1 518.1 L676.0 513.2 L677.0 508.2 L677.9 503.3 L678.5 507.4 L679.1 511.5 L679.7 515.6 L680.3 519.7 L680.9 523.9 L681.5 520.0 L682.1 516.1 L682.8 512.1 L683.4 508.2 L684.1 504.3 L684.7 509.2 L685.4 514.1 L686.0 519.0 L686.7 523.9 L687.3 528.8 L688.2 524.6 L689.0 520.4 L689.9 516.1 L690.8 511.9 L691.6 507.7 L692.2 510.9 L692.7 514.2 L693.3 517.5 L693.8 520.7 L694.4 524.0 L694.9 520.9 L695.5 517.8 L696.1 514.7 L696.6 511.7 L697.2 508.6 L698.0 511.9 L698.9 515.3 L699.8 518.6 L700.7 521.9 L701.6 525.2 L702.1 521.0 L702.5 516.8 L703.0 512.5 L703.5 508.3 L703.9 504.0 L704.5 509.7 L705.0 515.4 L705.6 521.1 L706.1 526.8 L706.7 532.5 L706.7 545.5 L706.4 551.7 L706.0 558.0 L705.7 564.2 L705.4 570.5 L705.1 576.7 L704.5 571.0 L703.9 565.4 L703.3 559.7 L702.8 554.0 L702.2 548.3 L701.3 553.1 L700.4 557.8 L699.5 562.6 L698.6 567.4 L697.7 572.1 L697.0 567.4 L696.3 562.7 L695.6 558.0 L694.9 553.3 L694.2 548.5 L693.7 553.4 L693.2 558.2 L692.8 563.0 L692.3 567.8 L691.9 572.6 L691.4 568.0 L690.9 563.5 L690.5 558.9 L690.0 554.4 L689.5 549.8 L688.7 555.2 L687.8 560.6 L686.9 566.0 L686.1 571.4 L685.2 576.8 L684.6 572.6 L684.0 568.4 L683.4 564.2 L682.8 560.1 L682.2 555.9 L681.6 559.4 L681.0 562.9 L680.3 566.4 L679.7 569.9 L679.1 573.4 L678.7 568.9 L678.4 564.4 L678.0 559.9 L677.7 555.4 L677.4 550.9 L676.7 555.6 L676.0 560.2 L675.3 564.9 L674.6 569.5 L673.9 574.2 L672.9 569.5 L672.0 564.8 L671.0 560.1 L670.1 555.4 L669.1 550.8 L668.6 554.6 L668.2 558.4 L667.7 562.3 L667.2 566.1 L666.8 569.9 L666.3 566.6 L665.9 563.3 L665.4 560.0 L665.0 556.7 L664.6 553.4 L664.1 557.0 L663.7 560.6 L663.2 564.2 L662.8 567.9 L662.4 571.5 L661.9 567.6 L661.4 563.7 L661.0 559.9 L660.5 556.0 L660.1 552.1 L659.4 556.0 L658.7 560.0 L658.1 563.9 L657.4 567.8 L656.8 571.8 L655.9 568.3 L655.0 564.9 L654.2 561.5 L653.3 558.0 L652.5 554.6 L651.7 558.1 L650.9 561.5 L650.2 565.0 L649.4 568.4 L648.6 571.9 L647.8 568.3 L647.0 564.6 L646.2 561.0 L645.4 557.4 L644.5 553.7 L644.1 557.0 L643.7 560.2 L643.2 563.4 L642.8 566.6 L642.4 569.8 L641.7 567.1 L641.0 564.3 L640.3 561.5 L639.6 558.7 L638.9 556.0 L638.4 559.3 L637.9 562.7 L637.4 566.0 L636.8 569.4 L636.3 572.7 L635.3 568.9 L634.4 565.0 L633.4 561.2 L632.4 557.4 L631.5 553.5 L631.0 557.5 L630.5 561.6 L630.1 565.6 L629.6 569.6 L629.2 573.6 L628.5 569.4 L627.9 565.1 L627.3 560.9 L626.7 556.6 L626.1 552.3 L625.4 555.9 L624.8 559.5 L624.2 563.0 L623.6 566.6 L623.0 570.2 L622.1 566.8 L621.2 563.5 L620.3 560.1 L619.4 556.7 L618.6 553.4 L617.6 556.9 L616.7 560.4 L615.7 563.8 L614.8 567.3 L613.9 570.8 L613.3 566.9 L612.7 562.9 L612.1 559.0 L611.5 555.0 L610.9 551.1 L610.4 556.0 L609.9 561.0 L609.4 566.0 L608.9 570.9 L608.4 575.9 L607.9 570.5 L607.4 565.2 L606.9 559.8 L606.5 554.5 L606.0 549.1 L605.4 553.3 L604.8 557.5 L604.2 561.6 L603.6 565.8 L603.1 570.0 L602.4 566.7 L601.7 563.4 L601.0 560.1 L600.3 556.8 L599.6 553.5 L598.9 557.3 L598.2 561.1 L597.4 564.9 L596.7 568.7 L596.0 572.5 L595.6 568.7 L595.1 564.9 L594.7 561.2 L594.2 557.4 L593.8 553.6 L593.4 557.2 L593.0 560.7 L592.5 564.3 L592.1 567.8 L591.7 571.4 L591.1 567.5 L590.5 563.5 L589.8 559.6 L589.2 555.6 L588.6 551.7 L587.9 555.6 L587.2 559.5 L586.6 563.4 L585.9 567.3 L585.3 571.2 L584.9 567.3 L584.5 563.3 L584.2 559.4 L583.8 555.5 L583.4 551.5 L582.6 555.0 L581.7 558.5 L580.8 562.1 L579.9 565.6 L579.0 569.1 L578.3 565.1 L577.7 561.1 L577.0 557.1 L576.3 553.1 L575.7 549.1 L575.1 554.2 L574.6 559.4 L574.0 564.5 L573.5 569.6 L572.9 574.7 L572.5 570.1 L572.1 565.6 L571.8 561.1 L571.4 556.5 L571.0 552.0 Z" fill="#fdeeae"/><path d="M570.4 790 L573.0 733.8 L575.6 790 L573.0 899.2 Z M574.9 790 L577.7 729.5 L580.4 790 L577.7 912.0 Z M582.7 790 L585.9 734.5 L589.1 790 L585.9 897.2 Z M590.9 790 L594.6 730.3 L598.3 790 L594.6 912.0 Z M594.9 790 L598.3 726.9 L601.7 790 L598.3 890.0 Z M602.3 790 L605.1 731.8 L607.8 790 L605.1 892.7 Z M609.4 790 L611.9 733.0 L614.5 790 L611.9 910.4 Z M616.5 790 L619.7 739.5 L622.8 790 L619.7 905.2 Z M623.7 790 L626.0 732.4 L628.4 790 L626.0 896.9 Z M630.5 790 L633.5 732.3 L636.5 790 L633.5 894.2 Z M636.6 790 L639.1 732.1 L641.7 790 L639.1 892.2 Z M639.6 790 L643.3 729.6 L647.0 790 L643.3 903.4 Z M647.7 790 L651.4 735.7 L655.0 790 L651.4 912.0 Z M657.6 790 L660.0 728.3 L662.4 790 L660.0 890.8 Z M665.4 790 L668.6 736.3 L671.7 790 L668.6 896.7 Z M668.5 790 L671.8 728.8 L675.2 790 L671.8 906.1 Z M673.9 790 L677.2 733.0 L680.4 790 L677.2 900.1 Z M679.8 790 L682.6 730.5 L685.3 790 L682.6 905.7 Z M684.7 790 L687.7 732.9 L690.8 790 L687.7 905.3 Z M687.7 790 L691.2 736.0 L694.7 790 L691.2 904.5 Z M696.2 790 L699.5 737.9 L702.9 790 L699.5 897.2 Z" fill="url(#g2)"/><rect x="568.5" y="378" width="2" height="539" fill="#1a1a1a"/><rect x="709.7" y="378" width="137.7" height="539" rx="5" fill="#cba412" stroke="#151515" stroke-width="1.5"/><path d="M710.7 531.5 L711.1 529.0 L711.5 526.6 L711.9 524.1 L712.3 521.6 L712.7 519.1 L713.3 521.2 L713.9 523.2 L714.4 525.3 L715.0 527.3 L715.6 529.4 L716.1 527.9 L716.6 526.5 L717.1 525.0 L717.6 523.6 L718.1 522.1 L718.6 524.3 L719.0 526.4 L719.4 528.6 L719.8 530.7 L720.2 532.9 L720.7 530.7 L721.1 528.6 L721.6 526.4 L722.0 524.3 L722.5 522.2 L722.9 523.5 L723.2 524.9 L723.6 526.3 L724.0 527.7 L724.3 529.1 L724.6 527.8 L724.9 526.5 L725.2 525.2 L725.5 523.9 L725.7 522.6 L726.2 524.1 L726.6 525.6 L727.0 527.1 L727.4 528.6 L727.8 530.2 L728.2 528.5 L728.7 526.8 L729.1 525.1 L729.5 523.4 L729.9 521.7 L730.4 523.5 L730.8 525.3 L731.3 527.2 L731.7 529.0 L732.1 530.8 L732.5 528.9 L732.9 527.0 L733.2 525.1 L733.6 523.2 L734.0 521.3 L734.5 523.5 L735.0 525.8 L735.5 528.0 L736.0 530.2 L736.6 532.5 L737.0 530.0 L737.4 527.6 L737.9 525.2 L738.3 522.7 L738.7 520.3 L739.0 522.4 L739.3 524.4 L739.6 526.5 L739.9 528.6 L740.2 530.7 L740.7 528.8 L741.2 527.0 L741.8 525.2 L742.3 523.3 L742.9 521.5 L743.5 523.6 L744.1 525.6 L744.7 527.7 L745.3 529.8 L745.9 531.9 L746.4 530.1 L746.9 528.3 L747.4 526.5 L747.9 524.8 L748.4 523.0 L748.8 524.7 L749.2 526.5 L749.6 528.2 L750.0 529.9 L750.4 531.7 L750.8 529.9 L751.2 528.2 L751.7 526.4 L752.1 524.7 L752.5 522.9 L753.1 524.4 L753.6 525.9 L754.1 527.5 L754.6 529.0 L755.2 530.5 L755.5 528.9 L755.9 527.2 L756.2 525.6 L756.5 524.0 L756.9 522.4 L757.2 524.7 L757.5 527.0 L757.9 529.3 L758.2 531.5 L758.5 533.8 L758.8 531.5 L759.1 529.3 L759.3 527.0 L759.6 524.7 L759.9 522.4 L760.4 524.0 L760.9 525.7 L761.3 527.3 L761.8 528.9 L762.3 530.6 L762.8 528.5 L763.3 526.5 L763.8 524.5 L764.2 522.4 L764.7 520.4 L765.3 522.6 L765.9 524.9 L766.5 527.1 L767.1 529.4 L767.6 531.6 L768.2 529.7 L768.8 527.7 L769.4 525.7 L769.9 523.7 L770.5 521.8 L770.9 523.3 L771.2 524.9 L771.6 526.5 L772.0 528.1 L772.3 529.7 L772.9 528.3 L773.5 527.0 L774.1 525.6 L774.7 524.3 L775.2 523.0 L775.7 525.1 L776.2 527.2 L776.6 529.3 L777.1 531.5 L777.6 533.6 L777.9 530.7 L778.2 527.8 L778.5 525.0 L778.8 522.1 L779.1 519.2 L779.5 521.3 L779.8 523.4 L780.2 525.5 L780.6 527.5 L780.9 529.6 L781.4 527.7 L781.8 525.8 L782.3 524.0 L782.7 522.1 L783.1 520.2 L783.8 522.2 L784.5 524.2 L785.2 526.1 L785.9 528.1 L786.6 530.1 L787.3 528.6 L787.9 527.1 L788.6 525.5 L789.2 524.0 L789.9 522.4 L790.3 524.6 L790.8 526.7 L791.3 528.8 L791.7 531.0 L792.2 533.1 L792.8 530.4 L793.4 527.6 L794.1 524.9 L794.7 522.2 L795.3 519.4 L795.8 521.9 L796.3 524.4 L796.8 526.8 L797.2 529.3 L797.7 531.8 L798.2 529.2 L798.6 526.7 L799.1 524.2 L799.5 521.7 L800.0 519.2 L800.7 521.3 L801.4 523.3 L802.1 525.4 L802.8 527.5 L803.5 529.6 L803.8 527.8 L804.1 526.1 L804.4 524.3 L804.8 522.6 L805.1 520.8 L805.6 522.8 L806.1 524.7 L806.7 526.7 L807.2 528.6 L807.7 530.6 L808.1 528.8 L808.4 527.1 L808.7 525.4 L809.0 523.6 L809.3 521.9 L809.9 523.5 L810.4 525.1 L810.9 526.7 L811.5 528.3 L812.0 529.9 L812.5 528.3 L812.9 526.7 L813.4 525.2 L813.8 523.6 L814.3 522.0 L814.5 524.2 L814.8 526.4 L815.0 528.6 L815.3 530.8 L815.6 533.0 L816.0 530.3 L816.5 527.5 L817.0 524.8 L817.4 522.1 L817.9 519.4 L818.1 522.0 L818.4 524.6 L818.7 527.2 L818.9 529.8 L819.2 532.4 L819.6 529.8 L819.9 527.2 L820.3 524.6 L820.7 522.0 L821.1 519.4 L821.4 522.3 L821.8 525.2 L822.1 528.1 L822.4 531.0 L822.7 533.9 L823.3 531.4 L824.0 528.8 L824.6 526.3 L825.2 523.7 L825.8 521.2 L826.2 523.2 L826.6 525.2 L827.0 527.2 L827.4 529.2 L827.8 531.2 L828.3 529.3 L828.7 527.5 L829.2 525.6 L829.7 523.8 L830.1 521.9 L830.8 523.7 L831.4 525.4 L832.1 527.2 L832.7 528.9 L833.4 530.7 L833.9 528.9 L834.4 527.1 L834.8 525.3 L835.3 523.5 L835.8 521.7 L836.3 523.2 L836.8 525.3 L837.3 527.4 L837.7 529.3 L838.2 531.1 L838.7 530.0 L839.1 529.1 L839.6 528.4 L840.0 527.9 L840.5 527.5 L840.8 529.6 L841.2 531.5 L841.6 533.2 L841.9 534.8 L842.3 536.2 L842.6 535.7 L842.9 535.3 L843.2 535.0 L843.5 534.8 L843.7 534.7 L844.1 535.9 L844.5 536.8 L845.0 537.6 L845.4 538.2 L845.8 538.7 L845.9 538.7 L846.0 538.8 L846.1 538.8 L846.2 538.8 L846.4 538.8 L846.4 539.2 L846.0 539.3 L845.6 539.7 L845.2 540.5 L844.8 541.4 L844.4 542.6 L844.1 542.7 L843.7 542.6 L843.4 542.4 L843.1 542.1 L842.7 541.5 L842.3 542.8 L841.8 544.2 L841.4 545.8 L840.9 547.7 L840.5 549.7 L840.0 549.5 L839.4 549.2 L838.9 548.6 L838.4 547.9 L837.9 547.1 L837.6 548.5 L837.3 550.0 L837.1 551.6 L836.8 553.2 L836.5 555.0 L836.0 553.6 L835.5 552.0 L835.0 550.4 L834.5 548.8 L834.0 547.2 L833.4 549.3 L832.9 551.3 L832.3 553.3 L831.8 555.4 L831.2 557.4 L830.6 555.0 L829.9 552.5 L829.2 550.1 L828.5 547.6 L827.9 545.2 L827.4 547.8 L827.0 550.3 L826.5 552.9 L826.1 555.5 L825.7 558.0 L825.4 555.8 L825.1 553.6 L824.8 551.4 L824.5 549.2 L824.2 547.0 L823.8 548.6 L823.4 550.3 L823.0 551.9 L822.7 553.6 L822.3 555.2 L821.8 553.3 L821.4 551.4 L820.9 549.5 L820.5 547.6 L820.0 545.7 L819.5 548.3 L819.0 551.0 L818.6 553.6 L818.1 556.2 L817.6 558.9 L816.9 555.9 L816.1 552.9 L815.4 550.0 L814.7 547.0 L813.9 544.0 L813.3 546.2 L812.7 548.4 L812.1 550.7 L811.5 552.9 L810.9 555.1 L810.4 553.2 L809.8 551.3 L809.3 549.4 L808.7 547.6 L808.1 545.7 L807.8 547.6 L807.5 549.6 L807.2 551.5 L806.9 553.5 L806.6 555.5 L806.2 554.1 L805.7 552.8 L805.3 551.5 L804.8 550.2 L804.4 548.9 L803.8 550.9 L803.2 552.8 L802.7 554.8 L802.1 556.8 L801.5 558.8 L801.0 556.2 L800.4 553.6 L799.9 551.0 L799.4 548.4 L798.9 545.8 L798.4 548.3 L797.9 550.9 L797.4 553.4 L797.0 555.9 L796.5 558.5 L796.0 555.8 L795.6 553.1 L795.1 550.4 L794.7 547.8 L794.2 545.1 L793.7 547.1 L793.1 549.1 L792.6 551.0 L792.0 553.0 L791.5 555.0 L791.0 552.8 L790.4 550.7 L789.9 548.5 L789.4 546.4 L788.9 544.2 L788.5 547.1 L788.1 550.0 L787.7 553.0 L787.3 555.9 L786.9 558.8 L786.3 556.7 L785.8 554.6 L785.2 552.5 L784.7 550.5 L784.1 548.4 L783.5 550.0 L782.9 551.6 L782.3 553.2 L781.7 554.9 L781.0 556.5 L780.7 554.6 L780.4 552.6 L780.0 550.7 L779.7 548.8 L779.4 546.9 L778.8 549.0 L778.3 551.1 L777.7 553.2 L777.2 555.3 L776.6 557.4 L776.1 555.3 L775.5 553.2 L775.0 551.1 L774.4 549.0 L773.9 546.9 L773.3 548.7 L772.7 550.5 L772.2 552.2 L771.6 554.0 L771.0 555.8 L770.5 553.7 L770.1 551.7 L769.6 549.7 L769.1 547.6 L768.6 545.6 L768.1 547.9 L767.6 550.3 L767.0 552.7 L766.5 555.0 L765.9 557.4 L765.5 555.6 L765.1 553.9 L764.7 552.2 L764.3 550.5 L763.9 548.7 L763.6 550.7 L763.2 552.6 L762.9 554.5 L762.5 556.4 L762.2 558.4 L761.9 556.5 L761.5 554.6 L761.2 552.6 L760.9 550.7 L760.6 548.8 L760.2 550.4 L759.8 552.0 L759.4 553.5 L759.0 555.1 L758.6 556.7 L758.1 554.3 L757.6 552.0 L757.1 549.6 L756.6 547.3 L756.1 544.9 L755.8 547.7 L755.4 550.4 L755.0 553.1 L754.7 555.8 L754.3 558.5 L753.7 556.2 L753.1 553.9 L752.5 551.6 L751.9 549.2 L751.3 546.9 L750.8 548.6 L750.2 550.3 L749.6 552.0 L749.0 553.7 L748.4 555.4 L748.0 553.9 L747.5 552.4 L747.0 550.9 L746.6 549.4 L746.1 547.9 L745.7 549.9 L745.3 552.0 L744.8 554.0 L744.4 556.0 L744.0 558.0 L743.5 555.9 L743.1 553.7 L742.6 551.5 L742.1 549.4 L741.7 547.2 L741.4 548.8 L741.0 550.5 L740.7 552.1 L740.4 553.7 L740.1 555.3 L739.7 553.7 L739.4 552.1 L739.0 550.5 L738.7 548.9 L738.3 547.3 L737.8 549.5 L737.4 551.6 L736.9 553.7 L736.4 555.9 L735.9 558.0 L735.6 555.4 L735.3 552.9 L734.9 550.3 L734.6 547.8 L734.3 545.2 L733.6 547.4 L733.0 549.6 L732.4 551.8 L731.8 554.0 L731.2 556.2 L730.7 554.0 L730.3 551.7 L729.9 549.5 L729.4 547.3 L729.0 545.1 L728.5 547.5 L728.0 549.9 L727.5 552.3 L727.0 554.7 L726.5 557.1 L726.1 554.7 L725.6 552.2 L725.1 549.7 L724.6 547.2 L724.1 544.7 L723.8 547.2 L723.4 549.8 L723.1 552.3 L722.7 554.9 L722.4 557.4 L721.8 555.5 L721.2 553.6 L720.7 551.6 L720.1 549.7 L719.6 547.8 L719.1 549.6 L718.6 551.4 L718.1 553.2 L717.7 555.1 L717.2 556.9 L716.6 554.6 L716.0 552.3 L715.4 550.0 L714.8 547.7 L714.2 545.4 L713.8 547.3 L713.4 549.3 L713.0 551.2 L712.6 553.1 L712.2 555.0 L711.9 553.3 L711.6 551.6 L711.3 549.9 L711.0 548.2 L710.7 546.5 Z" fill="#fdeeae"/><path d="M710.7 751.0 L711.2 742.2 L711.8 733.4 L712.3 724.7 L712.9 715.9 L713.4 707.1 L713.8 716.1 L714.2 725.1 L714.6 734.2 L715.0 743.2 L715.4 752.2 L715.8 743.9 L716.3 735.5 L716.8 727.2 L717.2 718.8 L717.7 710.4 L718.1 715.7 L718.4 721.0 L718.8 726.3 L719.2 731.6 L719.6 736.9 L720.1 732.0 L720.7 727.2 L721.2 722.3 L721.7 717.5 L722.3 712.7 L722.6 720.7 L722.9 728.6 L723.2 736.6 L723.5 744.6 L723.8 752.6 L724.5 742.5 L725.1 732.4 L725.8 722.4 L726.4 712.3 L727.1 702.2 L727.5 713.1 L727.8 724.0 L728.2 734.9 L728.6 745.8 L729.0 756.7 L729.6 747.7 L730.3 738.6 L730.9 729.6 L731.6 720.6 L732.3 711.6 L732.7 717.5 L733.1 723.5 L733.5 729.5 L733.9 735.5 L734.4 741.5 L735.1 735.4 L735.9 729.3 L736.6 723.1 L737.4 717.0 L738.2 710.9 L738.6 717.5 L739.0 724.1 L739.5 730.7 L739.9 737.3 L740.3 743.9 L740.9 735.7 L741.6 727.6 L742.2 719.5 L742.8 711.3 L743.4 703.2 L743.8 715.7 L744.1 728.1 L744.5 740.6 L744.8 753.0 L745.2 765.5 L745.9 754.4 L746.7 743.3 L747.4 732.2 L748.2 721.1 L749.0 710.0 L749.5 715.4 L750.0 720.8 L750.5 726.2 L751.0 731.7 L751.5 737.1 L752.0 730.8 L752.5 724.5 L753.0 718.2 L753.5 711.9 L754.0 705.7 L754.3 717.6 L754.6 729.5 L754.9 741.4 L755.2 753.4 L755.5 765.3 L756.0 754.8 L756.6 744.4 L757.1 733.9 L757.6 723.4 L758.1 713.0 L758.8 722.6 L759.5 732.2 L760.1 741.8 L760.8 751.4 L761.4 761.1 L761.8 750.8 L762.2 740.6 L762.5 730.4 L762.9 720.2 L763.3 710.0 L763.6 715.7 L764.0 721.4 L764.4 727.1 L764.8 732.7 L765.2 738.4 L765.5 733.5 L765.9 728.6 L766.3 723.7 L766.6 718.8 L767.0 713.9 L767.5 720.1 L768.1 726.3 L768.7 732.5 L769.3 738.6 L769.8 744.8 L770.3 736.5 L770.8 728.3 L771.3 720.0 L771.8 711.8 L772.3 703.5 L772.6 712.6 L772.8 721.7 L773.1 730.8 L773.4 739.9 L773.7 748.9 L774.1 739.4 L774.6 729.9 L775.0 720.4 L775.5 710.9 L775.9 701.4 L776.5 712.4 L777.1 723.5 L777.7 734.6 L778.3 745.6 L778.9 756.7 L779.3 745.7 L779.7 734.8 L780.1 723.8 L780.5 712.9 L780.9 701.9 L781.3 708.9 L781.7 715.9 L782.1 722.9 L782.4 729.9 L782.8 736.9 L783.2 731.0 L783.6 725.2 L784.0 719.3 L784.4 713.4 L784.8 707.5 L785.3 718.6 L785.8 729.6 L786.4 740.7 L786.9 751.7 L787.5 762.8 L787.9 752.2 L788.3 741.6 L788.8 731.0 L789.2 720.4 L789.7 709.8 L790.3 716.3 L790.9 722.8 L791.5 729.4 L792.1 735.9 L792.8 742.4 L793.4 735.9 L794.1 729.4 L794.8 723.0 L795.5 716.5 L796.2 710.1 L796.7 715.6 L797.3 721.1 L797.9 726.6 L798.5 732.1 L799.1 737.6 L799.6 731.7 L800.2 725.9 L800.7 720.0 L801.3 714.2 L801.8 708.3 L802.3 714.9 L802.8 721.5 L803.4 728.1 L803.9 734.6 L804.4 741.2 L804.7 734.8 L805.1 728.3 L805.4 721.9 L805.8 715.4 L806.2 709.0 L806.7 718.5 L807.2 728.0 L807.8 737.5 L808.3 747.0 L808.8 756.5 L809.2 746.0 L809.5 735.6 L809.8 725.1 L810.1 714.7 L810.4 704.2 L810.9 715.1 L811.4 726.0 L811.9 736.9 L812.3 747.8 L812.8 758.7 L813.5 747.4 L814.2 736.1 L814.8 724.8 L815.5 713.5 L816.2 702.2 L816.7 711.0 L817.3 719.7 L817.8 728.4 L818.4 737.2 L818.9 745.9 L819.4 739.5 L819.8 733.0 L820.2 726.5 L820.7 720.1 L821.1 713.6 L821.4 721.6 L821.7 729.6 L822.0 737.6 L822.3 745.6 L822.6 753.6 L823.2 743.1 L823.8 732.7 L824.5 722.2 L825.1 711.7 L825.7 701.3 L826.3 711.2 L826.9 721.0 L827.5 730.9 L828.0 740.8 L828.6 750.7 L829.2 742.4 L829.7 734.1 L830.3 725.8 L830.8 717.5 L831.4 709.2 L832.0 716.7 L832.6 724.3 L833.2 731.8 L833.8 739.3 L834.4 746.9 L834.9 738.1 L835.3 729.3 L835.8 720.5 L836.2 711.7 L836.7 702.9 L837.2 713.2 L837.8 723.4 L838.3 733.7 L838.8 743.9 L839.4 754.2 L840.0 745.0 L840.7 735.8 L841.3 726.6 L841.9 717.4 L842.6 708.2 L843.2 714.0 L843.8 719.9 L844.5 725.7 L845.1 731.6 L845.7 737.4 L845.8 742.8 L846.0 748.2 L846.1 753.7 L846.2 759.1 L846.4 764.5 L846.4 792.0 L845.9 795.3 L845.5 798.6 L845.1 801.9 L844.7 805.2 L844.3 808.6 L843.8 825.9 L843.4 843.3 L843.0 860.6 L842.6 878.0 L842.2 895.4 L841.6 881.2 L841.0 867.0 L840.5 852.7 L839.9 838.5 L839.3 824.3 L838.9 837.3 L838.5 850.2 L838.0 863.1 L837.6 876.0 L837.1 889.0 L836.9 869.8 L836.6 850.7 L836.3 831.6 L836.1 812.4 L835.8 793.3 L835.1 816.3 L834.4 839.2 L833.6 862.2 L832.9 885.2 L832.2 908.1 L831.6 891.6 L831.1 875.1 L830.5 858.5 L830.0 842.0 L829.4 825.5 L828.6 841.5 L827.8 857.6 L827.0 873.7 L826.2 889.8 L825.3 905.9 L824.9 889.7 L824.4 873.5 L823.9 857.3 L823.4 841.1 L823.0 824.9 L822.5 838.0 L822.1 851.1 L821.7 864.2 L821.2 877.3 L820.8 890.4 L820.5 874.9 L820.2 859.4 L820.0 844.0 L819.7 828.5 L819.4 813.1 L819.0 831.5 L818.6 849.9 L818.2 868.3 L817.8 886.7 L817.3 905.1 L816.9 883.6 L816.5 862.1 L816.1 840.5 L815.7 819.0 L815.3 797.4 L815.0 819.4 L814.7 841.3 L814.3 863.3 L814.0 885.2 L813.7 907.1 L813.3 883.1 L812.9 859.1 L812.4 835.0 L812.0 811.0 L811.6 787.0 L811.1 807.2 L810.6 827.5 L810.1 847.7 L809.6 867.9 L809.2 888.1 L808.5 872.9 L807.9 857.7 L807.3 842.5 L806.7 827.3 L806.1 812.1 L805.8 831.1 L805.5 850.2 L805.1 869.3 L804.8 888.4 L804.5 907.5 L804.0 887.9 L803.6 868.2 L803.1 848.6 L802.6 828.9 L802.1 809.3 L801.4 825.3 L800.6 841.3 L799.9 857.3 L799.1 873.2 L798.4 889.2 L797.9 873.5 L797.4 857.8 L796.9 842.1 L796.3 826.3 L795.8 810.6 L795.4 827.8 L795.0 844.9 L794.6 862.1 L794.1 879.2 L793.7 896.4 L793.0 879.1 L792.4 861.8 L791.7 844.5 L791.0 827.2 L790.4 809.9 L789.8 828.0 L789.2 846.2 L788.7 864.4 L788.1 882.6 L787.5 900.8 L787.2 885.4 L786.9 869.9 L786.6 854.5 L786.3 839.1 L785.9 823.6 L785.2 839.0 L784.4 854.4 L783.6 869.8 L782.9 885.2 L782.1 900.6 L781.6 883.2 L781.1 865.9 L780.5 848.5 L780.0 831.1 L779.5 813.7 L779.1 828.6 L778.7 843.5 L778.4 858.4 L778.0 873.3 L777.6 888.2 L777.2 873.6 L776.9 859.1 L776.5 844.6 L776.2 830.1 L775.8 815.5 L775.4 833.1 L774.9 850.7 L774.4 868.3 L773.9 885.9 L773.4 903.4 L773.0 886.4 L772.6 869.4 L772.2 852.3 L771.8 835.3 L771.3 818.3 L770.8 836.2 L770.3 854.2 L769.8 872.2 L769.3 890.1 L768.8 908.1 L768.3 886.1 L767.8 864.2 L767.3 842.3 L766.8 820.3 L766.3 798.4 L765.6 817.5 L765.0 836.6 L764.3 855.7 L763.7 874.9 L763.0 894.0 L762.5 877.3 L762.0 860.7 L761.5 844.0 L761.0 827.4 L760.5 810.7 L760.0 829.7 L759.4 848.6 L758.8 867.5 L758.2 886.4 L757.6 905.4 L756.9 888.5 L756.2 871.6 L755.6 854.8 L754.9 837.9 L754.3 821.0 L753.7 835.6 L753.2 850.2 L752.7 864.7 L752.2 879.3 L751.6 893.9 L751.2 873.6 L750.7 853.4 L750.3 833.1 L749.8 812.9 L749.4 792.6 L748.8 814.0 L748.2 835.4 L747.6 856.8 L747.0 878.2 L746.4 899.5 L746.0 878.1 L745.6 856.7 L745.1 835.2 L744.7 813.8 L744.3 792.3 L743.6 814.4 L742.9 836.5 L742.2 858.5 L741.5 880.6 L740.8 902.7 L740.2 887.1 L739.7 871.5 L739.1 856.0 L738.6 840.4 L738.0 824.8 L737.4 840.4 L736.7 855.9 L736.1 871.4 L735.4 887.0 L734.8 902.5 L734.4 884.6 L734.0 866.7 L733.7 848.8 L733.3 831.0 L733.0 813.1 L732.3 831.4 L731.6 849.7 L730.9 868.0 L730.2 886.3 L729.5 904.6 L729.1 888.4 L728.7 872.3 L728.3 856.1 L727.8 839.9 L727.4 823.7 L726.9 837.4 L726.4 851.1 L725.8 864.8 L725.3 878.4 L724.8 892.1 L724.1 872.4 L723.5 852.7 L722.8 832.9 L722.2 813.2 L721.6 793.5 L720.9 816.6 L720.3 839.7 L719.7 862.8 L719.1 885.9 L718.4 909.0 L717.9 890.7 L717.3 872.5 L716.8 854.3 L716.2 836.0 L715.7 817.8 L715.2 835.5 L714.6 853.1 L714.1 870.8 L713.6 888.5 L713.1 906.1 L712.6 886.1 L712.1 866.1 L711.6 846.0 L711.2 826.0 L710.7 806.0 Z" fill="url(#g2)"/><rect x="708.2" y="378" width="2" height="539" fill="#1a1a1a"/><rect x="849.4" y="378" width="137.7" height="539" rx="5" fill="#cba412" stroke="#151515" stroke-width="1.5"/><path d="M850.4 527.5 L850.8 524.8 L851.2 522.0 L851.6 519.3 L852.0 516.5 L852.5 513.8 L852.8 516.3 L853.2 518.7 L853.6 521.1 L853.9 523.6 L854.3 526.0 L854.8 522.9 L855.3 519.9 L855.8 516.8 L856.3 513.7 L856.8 510.7 L857.4 513.9 L857.9 517.2 L858.5 520.5 L859.1 523.8 L859.6 527.0 L860.0 523.8 L860.4 520.5 L860.7 517.2 L861.1 513.9 L861.5 510.7 L861.8 514.0 L862.2 517.3 L862.5 520.7 L862.9 524.0 L863.3 527.4 L864.0 524.4 L864.7 521.4 L865.4 518.4 L866.1 515.4 L866.8 512.4 L867.3 515.8 L867.8 519.2 L868.3 522.6 L868.9 526.0 L869.4 529.4 L869.9 525.6 L870.3 521.7 L870.8 517.9 L871.2 514.0 L871.7 510.2 L872.0 513.5 L872.3 516.8 L872.6 520.1 L873.0 523.4 L873.3 526.7 L873.8 524.1 L874.2 521.4 L874.7 518.8 L875.2 516.1 L875.7 513.4 L876.2 516.2 L876.7 519.0 L877.1 521.8 L877.6 524.5 L878.1 527.3 L878.5 523.9 L878.9 520.6 L879.4 517.3 L879.8 513.9 L880.2 510.6 L880.6 513.7 L880.9 516.9 L881.3 520.0 L881.7 523.2 L882.0 526.3 L882.4 523.6 L882.7 520.9 L883.0 518.1 L883.3 515.4 L883.6 512.7 L884.2 515.4 L884.7 518.1 L885.2 520.8 L885.8 523.5 L886.3 526.2 L886.9 523.3 L887.4 520.5 L888.0 517.7 L888.6 514.8 L889.2 512.0 L889.6 515.2 L890.0 518.5 L890.5 521.7 L890.9 525.0 L891.3 528.2 L891.8 525.3 L892.3 522.3 L892.8 519.4 L893.3 516.5 L893.8 513.5 L894.5 516.2 L895.3 518.9 L896.0 521.5 L896.8 524.2 L897.5 526.9 L898.1 523.7 L898.6 520.6 L899.1 517.4 L899.6 514.3 L900.1 511.1 L900.7 514.5 L901.2 517.8 L901.8 521.2 L902.4 524.6 L902.9 527.9 L903.6 524.2 L904.3 520.4 L905.0 516.7 L905.6 513.0 L906.3 509.2 L906.7 512.7 L907.2 516.1 L907.6 519.6 L908.0 523.1 L908.4 526.5 L909.1 523.6 L909.7 520.7 L910.3 517.7 L910.9 514.8 L911.5 511.9 L911.9 514.8 L912.3 517.8 L912.6 520.7 L913.0 523.7 L913.3 526.6 L914.3 520.3 L915.3 514.0 L916.3 507.6 L917.2 501.3 L918.2 495.0 L918.4 501.2 L918.7 507.3 L918.9 513.5 L919.2 519.6 L919.4 525.8 L920.1 522.8 L920.8 519.7 L921.4 516.7 L922.1 513.7 L922.8 510.6 L923.2 514.0 L923.6 517.3 L924.0 520.6 L924.4 523.9 L924.8 527.3 L925.4 524.3 L926.1 521.2 L926.7 518.2 L927.4 515.2 L928.0 512.2 L928.6 514.7 L929.3 517.1 L929.9 519.5 L930.5 522.0 L931.2 524.4 L931.7 522.4 L932.2 520.5 L932.7 518.5 L933.2 516.5 L933.7 514.5 L934.5 516.6 L935.2 518.7 L936.0 520.8 L936.7 522.9 L937.5 525.0 L938.1 522.6 L938.6 520.3 L939.2 517.9 L939.8 515.6 L940.4 513.2 L941.0 515.8 L941.7 518.4 L942.3 521.0 L943.0 523.6 L943.7 526.2 L944.2 523.3 L944.7 520.5 L945.2 517.6 L945.7 514.7 L946.3 511.9 L947.0 514.8 L947.8 517.7 L948.5 520.6 L949.2 523.5 L950.0 526.4 L950.4 523.9 L950.8 521.4 L951.2 518.9 L951.6 516.5 L951.9 514.0 L952.4 516.7 L952.8 519.5 L953.3 522.2 L953.7 524.9 L954.1 527.6 L954.4 524.6 L954.8 521.5 L955.1 518.4 L955.4 515.3 L955.7 512.3 L956.2 515.8 L956.8 519.3 L957.3 522.9 L957.8 526.4 L958.3 529.9 L958.6 526.4 L958.9 522.8 L959.2 519.2 L959.5 515.7 L959.8 512.1 L960.3 515.4 L960.8 518.8 L961.2 522.1 L961.7 525.4 L962.2 528.8 L962.7 525.7 L963.3 522.6 L963.8 519.5 L964.3 516.4 L964.9 513.3 L965.5 516.6 L966.1 519.9 L966.7 523.1 L967.3 526.4 L967.9 529.7 L968.4 526.5 L968.9 523.2 L969.4 520.0 L969.9 516.8 L970.4 513.6 L970.8 516.4 L971.1 519.3 L971.5 522.1 L971.9 524.9 L972.3 527.7 L973.0 524.5 L973.7 521.4 L974.4 518.2 L975.1 515.0 L975.8 511.8 L976.3 514.4 L976.8 517.1 L977.2 519.8 L977.7 522.4 L978.2 525.1 L978.6 523.0 L979.1 520.8 L979.5 518.7 L980.0 516.5 L980.4 514.3 L981.1 517.4 L981.7 520.5 L982.3 523.6 L983.0 526.7 L983.6 529.8 L984.1 530.5 L984.6 531.2 L985.1 531.9 L985.6 532.6 L986.0 533.2 L986.0 544.8 L985.7 549.0 L985.3 553.3 L984.9 557.6 L984.6 561.9 L984.2 566.2 L983.8 563.0 L983.4 559.8 L983.0 556.6 L982.6 553.5 L982.2 550.3 L981.5 553.8 L980.9 557.2 L980.2 560.7 L979.5 564.2 L978.8 567.7 L978.3 564.2 L977.8 560.8 L977.4 557.4 L976.9 553.9 L976.4 550.5 L976.0 554.1 L975.7 557.6 L975.3 561.2 L975.0 564.7 L974.6 568.3 L974.2 564.7 L973.9 561.1 L973.5 557.5 L973.1 553.9 L972.8 550.3 L972.3 553.1 L971.8 555.9 L971.4 558.8 L970.9 561.6 L970.5 564.4 L969.8 561.2 L969.2 558.0 L968.5 554.8 L967.9 551.6 L967.2 548.4 L966.6 551.3 L965.9 554.2 L965.3 557.2 L964.7 560.1 L964.0 563.0 L963.4 560.7 L962.7 558.5 L962.1 556.2 L961.5 553.9 L960.8 551.6 L960.3 553.9 L959.8 556.3 L959.3 558.7 L958.8 561.1 L958.3 563.4 L958.0 560.9 L957.7 558.4 L957.4 555.9 L957.1 553.5 L956.9 551.0 L956.2 553.5 L955.5 556.1 L954.8 558.6 L954.1 561.2 L953.5 563.7 L953.1 561.0 L952.7 558.3 L952.3 555.6 L951.9 553.0 L951.6 550.3 L951.2 553.7 L950.8 557.2 L950.4 560.6 L950.0 564.1 L949.6 567.5 L949.3 563.5 L949.0 559.5 L948.7 555.4 L948.3 551.4 L948.0 547.4 L947.6 550.7 L947.2 554.0 L946.8 557.3 L946.4 560.6 L946.0 563.9 L945.6 560.7 L945.2 557.5 L944.8 554.3 L944.4 551.1 L944.0 547.9 L943.6 552.2 L943.2 556.6 L942.8 560.9 L942.4 565.2 L942.0 569.6 L941.5 566.4 L941.0 563.2 L940.5 560.1 L940.0 556.9 L939.5 553.7 L939.2 556.5 L938.9 559.3 L938.6 562.1 L938.3 564.9 L938.0 567.7 L937.5 564.9 L937.0 562.0 L936.5 559.2 L936.0 556.3 L935.5 553.4 L935.2 555.5 L934.9 557.6 L934.5 559.6 L934.2 561.7 L933.9 563.7 L933.3 561.7 L932.7 559.8 L932.1 557.8 L931.5 555.8 L930.9 553.8 L930.2 557.0 L929.5 560.2 L928.8 563.3 L928.2 566.5 L927.5 569.7 L927.1 566.5 L926.7 563.3 L926.4 560.2 L926.0 557.0 L925.6 553.8 L925.0 556.1 L924.5 558.5 L923.9 560.8 L923.4 563.1 L922.8 565.4 L922.3 562.0 L921.8 558.5 L921.4 555.0 L920.9 551.6 L920.4 548.1 L920.0 555.1 L919.5 562.1 L919.1 569.0 L918.6 576.0 L918.2 583.0 L917.6 576.3 L917.1 569.7 L916.5 563.0 L915.9 556.4 L915.4 549.7 L914.8 552.6 L914.2 555.6 L913.6 558.5 L913.1 561.4 L912.5 564.4 L912.2 561.2 L911.8 558.1 L911.5 555.0 L911.2 551.8 L910.8 548.7 L910.5 553.0 L910.1 557.2 L909.8 561.5 L909.5 565.7 L909.1 570.0 L908.6 565.7 L908.1 561.3 L907.5 557.0 L907.0 552.7 L906.5 548.3 L905.7 552.2 L905.0 556.0 L904.3 559.9 L903.6 563.7 L902.9 567.6 L902.3 563.7 L901.7 559.9 L901.1 556.1 L900.6 552.2 L900.0 548.4 L899.5 552.4 L899.1 556.4 L898.6 560.5 L898.2 564.5 L897.7 568.5 L897.4 564.4 L897.1 560.3 L896.8 556.1 L896.4 552.0 L896.1 547.9 L895.6 552.2 L895.1 556.5 L894.6 560.8 L894.1 565.1 L893.6 569.4 L893.2 565.0 L892.9 560.6 L892.5 556.1 L892.2 551.7 L891.8 547.3 L891.4 551.5 L890.9 555.7 L890.4 559.9 L889.9 564.2 L889.4 568.4 L888.7 564.2 L887.9 560.0 L887.2 555.8 L886.4 551.5 L885.6 547.3 L885.3 550.8 L884.9 554.4 L884.5 557.9 L884.1 561.4 L883.7 564.9 L883.1 561.7 L882.5 558.4 L881.9 555.2 L881.3 552.0 L880.7 548.8 L880.0 552.0 L879.3 555.2 L878.6 558.4 L877.9 561.5 L877.1 564.7 L876.7 562.2 L876.3 559.6 L875.9 557.1 L875.5 554.6 L875.1 552.0 L874.6 554.9 L874.0 557.7 L873.5 560.6 L872.9 563.4 L872.4 566.3 L872.0 563.6 L871.7 561.0 L871.3 558.4 L871.0 555.7 L870.6 553.1 L870.2 555.8 L869.8 558.5 L869.4 561.2 L868.9 563.9 L868.5 566.7 L867.9 563.4 L867.2 560.2 L866.6 556.9 L865.9 553.7 L865.3 550.5 L864.9 553.3 L864.6 556.0 L864.2 558.8 L863.9 561.6 L863.5 564.4 L863.1 562.1 L862.8 559.8 L862.4 557.5 L862.0 555.2 L861.7 553.0 L861.3 555.6 L860.9 558.2 L860.5 560.8 L860.1 563.4 L859.7 566.0 L859.0 562.5 L858.3 559.0 L857.6 555.4 L856.9 551.9 L856.2 548.4 L855.6 551.9 L855.1 555.4 L854.6 558.9 L854.0 562.4 L853.5 565.9 L852.9 562.8 L852.2 559.7 L851.6 556.6 L851.0 553.6 L850.4 550.5 Z" fill="#fdeeae"/><path d="M850.4 750.5 L851.0 740.8 L851.7 731.1 L852.3 721.4 L853.0 711.7 L853.6 702.0 L854.3 711.9 L854.9 721.8 L855.5 731.6 L856.1 741.5 L856.8 751.3 L857.0 742.0 L857.3 732.7 L857.6 723.4 L857.9 714.1 L858.2 704.8 L858.7 713.9 L859.3 723.1 L859.8 732.2 L860.3 741.3 L860.8 750.4 L861.3 739.2 L861.9 728.0 L862.4 716.9 L862.9 705.7 L863.5 694.5 L864.1 708.3 L864.7 722.0 L865.4 735.8 L866.0 749.5 L866.6 763.3 L867.0 752.2 L867.4 741.2 L867.8 730.1 L868.2 719.1 L868.6 708.0 L869.3 719.0 L870.0 729.9 L870.7 740.9 L871.4 751.8 L872.1 762.8 L872.8 750.6 L873.5 738.5 L874.3 726.3 L875.0 714.2 L875.7 702.0 L876.3 709.3 L876.8 716.6 L877.4 723.9 L878.0 731.2 L878.6 738.5 L879.1 730.1 L879.7 721.7 L880.3 713.3 L880.9 704.9 L881.5 696.5 L882.2 708.7 L882.9 720.9 L883.5 733.1 L884.2 745.2 L884.9 757.4 L885.6 747.0 L886.3 736.5 L886.9 726.1 L887.6 715.6 L888.3 705.2 L888.7 713.2 L889.2 721.3 L889.6 729.3 L890.1 737.3 L890.5 745.4 L891.0 735.9 L891.4 726.5 L891.8 717.1 L892.2 707.7 L892.7 698.3 L893.4 710.7 L894.1 723.2 L894.8 735.6 L895.5 748.1 L896.2 760.5 L896.6 749.8 L897.0 739.1 L897.3 728.3 L897.7 717.6 L898.1 706.9 L898.6 712.7 L899.1 718.5 L899.6 724.3 L900.1 730.1 L900.6 735.9 L901.2 730.6 L901.7 725.3 L902.3 720.1 L902.9 714.8 L903.5 709.5 L903.9 719.4 L904.2 729.2 L904.6 739.1 L905.0 749.0 L905.4 758.8 L905.7 746.0 L906.1 733.2 L906.4 720.5 L906.8 707.7 L907.1 694.9 L907.5 705.9 L907.8 716.9 L908.2 727.9 L908.6 738.8 L908.9 749.8 L909.4 742.1 L909.8 734.3 L910.3 726.5 L910.7 718.7 L911.2 710.9 L911.9 720.7 L912.5 730.4 L913.2 740.2 L913.9 749.9 L914.6 759.6 L915.3 746.8 L916.0 733.9 L916.7 721.0 L917.4 708.1 L918.1 695.3 L918.7 704.5 L919.3 713.7 L919.8 723.0 L920.4 732.2 L920.9 741.4 L921.3 733.3 L921.6 725.2 L922.0 717.2 L922.3 709.1 L922.7 701.0 L923.2 713.2 L923.7 725.5 L924.2 737.8 L924.7 750.1 L925.2 762.3 L925.7 751.4 L926.2 740.4 L926.7 729.4 L927.2 718.4 L927.7 707.5 L928.2 713.0 L928.7 718.5 L929.2 724.0 L929.7 729.5 L930.2 735.0 L930.6 730.2 L931.1 725.5 L931.6 720.7 L932.0 716.0 L932.5 711.3 L932.7 716.0 L933.0 720.8 L933.3 725.5 L933.6 730.3 L933.8 735.1 L934.2 728.2 L934.6 721.3 L935.0 714.5 L935.3 707.6 L935.7 700.8 L936.3 709.3 L936.9 717.9 L937.4 726.5 L938.0 735.1 L938.6 743.6 L939.0 734.9 L939.5 726.2 L940.0 717.4 L940.4 708.7 L940.9 700.0 L941.4 711.6 L941.8 723.2 L942.3 734.8 L942.8 746.4 L943.3 758.0 L943.8 747.1 L944.3 736.3 L944.8 725.5 L945.2 714.6 L945.7 703.8 L946.1 710.9 L946.5 718.1 L946.9 725.2 L947.3 732.3 L947.7 739.5 L948.2 732.0 L948.8 724.5 L949.3 717.1 L949.9 709.6 L950.4 702.2 L950.9 713.6 L951.3 725.0 L951.7 736.3 L952.1 747.7 L952.5 759.1 L953.0 748.0 L953.5 736.9 L954.0 725.7 L954.4 714.6 L954.9 703.5 L955.4 711.5 L955.8 719.6 L956.2 727.7 L956.7 735.7 L957.1 743.8 L957.7 736.5 L958.4 729.3 L959.0 722.1 L959.6 714.8 L960.2 707.6 L960.7 713.8 L961.2 719.9 L961.7 726.1 L962.2 732.2 L962.7 738.4 L963.2 729.9 L963.8 721.3 L964.4 712.8 L964.9 704.3 L965.5 695.8 L966.2 706.9 L966.9 718.0 L967.5 729.1 L968.2 740.2 L968.9 751.3 L969.2 741.0 L969.5 730.6 L969.9 720.3 L970.2 710.0 L970.5 699.6 L971.0 708.6 L971.6 717.5 L972.1 726.4 L972.7 735.4 L973.2 744.3 L973.7 737.5 L974.3 730.7 L974.8 723.9 L975.3 717.1 L975.8 710.3 L976.4 721.6 L977.0 732.9 L977.5 744.2 L978.1 755.6 L978.7 766.9 L979.3 752.5 L979.9 738.1 L980.4 723.7 L981.0 709.3 L981.6 694.8 L982.1 704.0 L982.6 713.1 L983.1 722.2 L983.6 731.3 L984.0 740.4 L984.4 745.6 L984.8 750.7 L985.2 755.9 L985.6 761.1 L986.0 766.2 L986.0 797.5 L985.7 819.4 L985.4 841.3 L985.0 863.2 L984.7 885.1 L984.3 907.0 L983.9 884.0 L983.4 861.0 L983.0 838.1 L982.5 815.1 L982.0 792.1 L981.5 815.3 L981.0 838.4 L980.5 861.6 L980.0 884.8 L979.5 907.9 L978.9 891.3 L978.4 874.6 L977.8 858.0 L977.2 841.3 L976.7 824.7 L976.3 840.7 L976.0 856.7 L975.6 872.7 L975.3 888.7 L974.9 904.7 L974.5 889.3 L974.2 873.9 L973.8 858.5 L973.4 843.1 L973.1 827.7 L972.3 842.2 L971.5 856.6 L970.7 871.1 L970.0 885.5 L969.2 899.9 L968.8 882.9 L968.3 865.9 L967.9 848.8 L967.4 831.8 L967.0 814.8 L966.4 834.1 L965.7 853.4 L965.1 872.7 L964.5 892.0 L963.9 911.3 L963.3 888.7 L962.6 866.1 L962.0 843.4 L961.4 820.8 L960.8 798.2 L960.3 819.0 L959.9 839.8 L959.5 860.6 L959.0 881.4 L958.6 902.2 L957.9 884.1 L957.3 865.9 L956.6 847.8 L955.9 829.6 L955.3 811.4 L954.9 829.9 L954.5 848.3 L954.1 866.8 L953.8 885.2 L953.4 903.6 L953.0 882.9 L952.7 862.2 L952.4 841.5 L952.0 820.8 L951.7 800.1 L951.0 820.3 L950.3 840.5 L949.6 860.7 L948.9 881.0 L948.2 901.2 L947.8 880.8 L947.3 860.5 L946.9 840.2 L946.4 819.9 L946.0 799.5 L945.7 820.4 L945.5 841.3 L945.2 862.2 L944.9 883.1 L944.7 904.0 L944.2 886.1 L943.8 868.2 L943.3 850.3 L942.9 832.4 L942.5 814.5 L942.0 832.3 L941.5 850.1 L941.1 867.9 L940.6 885.7 L940.1 903.5 L939.5 887.2 L939.0 870.8 L938.4 854.5 L937.8 838.1 L937.2 821.8 L936.7 838.4 L936.2 855.0 L935.7 871.5 L935.2 888.1 L934.7 904.7 L934.2 887.6 L933.6 870.5 L933.1 853.5 L932.6 836.4 L932.0 819.3 L931.6 835.3 L931.1 851.3 L930.7 867.4 L930.2 883.4 L929.8 899.4 L929.5 879.1 L929.2 858.8 L928.9 838.5 L928.6 818.2 L928.3 797.9 L927.9 819.8 L927.5 841.6 L927.1 863.5 L926.6 885.4 L926.2 907.2 L925.5 891.3 L924.9 875.4 L924.2 859.6 L923.6 843.7 L922.9 827.8 L922.5 844.3 L922.1 860.9 L921.7 877.4 L921.4 893.9 L921.0 910.5 L920.6 887.6 L920.3 864.7 L919.9 841.9 L919.5 819.0 L919.2 796.1 L918.8 816.9 L918.3 837.7 L917.9 858.6 L917.4 879.4 L917.0 900.2 L916.2 885.6 L915.5 870.9 L914.7 856.3 L913.9 841.7 L913.2 827.1 L912.6 842.2 L911.9 857.3 L911.3 872.4 L910.7 887.5 L910.1 902.6 L909.6 881.6 L909.1 860.6 L908.5 839.6 L908.0 818.6 L907.5 797.6 L906.9 817.7 L906.3 837.7 L905.7 857.8 L905.2 877.8 L904.6 897.9 L904.2 878.7 L903.8 859.4 L903.4 840.2 L903.0 821.0 L902.6 801.7 L902.2 823.6 L901.7 845.4 L901.3 867.3 L900.9 889.1 L900.5 910.9 L899.9 890.7 L899.2 870.5 L898.6 850.2 L898.0 830.0 L897.4 809.8 L896.9 829.9 L896.4 850.0 L895.9 870.0 L895.4 890.1 L894.9 910.2 L894.3 888.5 L893.7 866.7 L893.1 845.0 L892.5 823.3 L891.9 801.5 L891.5 821.9 L891.2 842.2 L890.8 862.5 L890.4 882.9 L890.0 903.2 L889.5 885.7 L889.0 868.2 L888.6 850.7 L888.1 833.2 L887.6 815.7 L886.8 834.5 L886.1 853.3 L885.3 872.1 L884.5 890.9 L883.7 909.7 L883.3 889.3 L882.8 868.9 L882.3 848.5 L881.8 828.1 L881.3 807.7 L880.9 826.5 L880.4 845.2 L880.0 864.0 L879.6 882.7 L879.1 901.5 L878.8 883.6 L878.4 865.7 L878.1 847.8 L877.7 829.9 L877.4 812.1 L877.0 831.7 L876.6 851.3 L876.2 870.9 L875.8 890.5 L875.4 910.1 L874.8 892.3 L874.2 874.5 L873.6 856.7 L873.0 838.8 L872.4 821.0 L872.0 838.8 L871.6 856.6 L871.1 874.3 L870.7 892.1 L870.2 909.9 L869.7 891.5 L869.1 873.2 L868.6 854.9 L868.0 836.5 L867.5 818.2 L866.8 836.5 L866.1 854.9 L865.3 873.3 L864.6 891.7 L863.9 910.1 L863.4 892.2 L862.9 874.3 L862.4 856.4 L862.0 838.5 L861.5 820.6 L860.9 837.3 L860.4 853.9 L859.8 870.6 L859.3 887.2 L858.8 903.9 L858.3 884.9 L857.8 865.9 L857.3 847.0 L856.8 828.0 L856.3 809.0 L855.6 828.8 L854.8 848.6 L854.1 868.4 L853.4 888.1 L852.6 907.9 L852.2 888.9 L851.7 870.0 L851.3 851.0 L850.8 832.0 L850.4 813.0 Z" fill="url(#g2)"/><rect x="847.9" y="378" width="2" height="539" fill="#1a1a1a"/><rect x="989.0" y="378" width="137.7" height="539" rx="5" fill="#cba412" stroke="#151515" stroke-width="1.5"/><path d="M990.0 531.5 L990.6 529.2 L991.2 526.9 L991.8 524.7 L992.4 522.4 L993.0 520.1 L993.6 522.2 L994.2 524.2 L994.8 526.2 L995.5 528.3 L996.1 530.3 L996.4 528.4 L996.7 526.4 L997.0 524.5 L997.3 522.5 L997.5 520.6 L998.0 523.1 L998.5 525.7 L999.0 528.3 L999.5 530.8 L1000.0 533.4 L1000.5 530.6 L1001.1 527.8 L1001.6 525.1 L1002.1 522.3 L1002.7 519.5 L1003.0 522.3 L1003.4 525.1 L1003.7 527.8 L1004.0 530.6 L1004.4 533.4 L1004.6 530.7 L1004.9 527.9 L1005.2 525.2 L1005.5 522.4 L1005.8 519.7 L1006.2 522.5 L1006.6 525.4 L1007.1 528.2 L1007.5 531.0 L1007.9 533.9 L1008.2 531.6 L1008.5 529.3 L1008.8 527.0 L1009.1 524.8 L1009.4 522.5 L1009.9 524.3 L1010.3 526.0 L1010.8 527.8 L1011.3 529.6 L1011.8 531.4 L1012.2 529.1 L1012.5 526.9 L1012.9 524.6 L1013.2 522.3 L1013.6 520.1 L1014.0 522.1 L1014.4 524.2 L1014.8 526.3 L1015.2 528.3 L1015.6 530.4 L1016.1 528.5 L1016.7 526.5 L1017.2 524.6 L1017.7 522.6 L1018.2 520.7 L1018.6 522.5 L1019.0 524.4 L1019.3 526.2 L1019.7 528.0 L1020.1 529.9 L1020.4 528.0 L1020.8 526.2 L1021.2 524.4 L1021.5 522.5 L1021.9 520.7 L1022.3 522.4 L1022.8 524.1 L1023.2 525.8 L1023.6 527.6 L1024.1 529.3 L1024.6 527.8 L1025.1 526.4 L1025.5 524.9 L1026.0 523.5 L1026.5 522.0 L1027.1 524.1 L1027.6 526.2 L1028.1 528.4 L1028.6 530.5 L1029.1 532.6 L1029.6 530.0 L1030.1 527.3 L1030.6 524.7 L1031.1 522.1 L1031.6 519.5 L1031.9 521.5 L1032.2 523.5 L1032.4 525.5 L1032.7 527.5 L1033.0 529.5 L1033.5 528.0 L1034.1 526.4 L1034.6 524.9 L1035.1 523.4 L1035.7 521.8 L1036.1 523.8 L1036.5 525.7 L1036.9 527.7 L1037.4 529.6 L1037.8 531.6 L1038.1 529.7 L1038.5 527.8 L1038.8 525.8 L1039.2 523.9 L1039.5 522.0 L1039.9 524.3 L1040.3 526.6 L1040.7 528.9 L1041.1 531.2 L1041.5 533.5 L1041.9 530.7 L1042.4 528.0 L1042.8 525.2 L1043.3 522.5 L1043.7 519.7 L1044.4 521.9 L1045.2 524.0 L1045.9 526.2 L1046.6 528.4 L1047.4 530.5 L1047.7 528.2 L1048.1 525.9 L1048.4 523.6 L1048.8 521.3 L1049.1 519.0 L1049.5 521.0 L1049.8 523.0 L1050.2 525.0 L1050.5 527.1 L1050.9 529.1 L1051.5 527.3 L1052.0 525.5 L1052.6 523.7 L1053.2 521.9 L1053.7 520.2 L1054.1 522.6 L1054.6 525.1 L1055.0 527.6 L1055.4 530.1 L1055.8 532.5 L1056.3 530.3 L1056.8 528.1 L1057.3 525.9 L1057.8 523.6 L1058.3 521.4 L1058.8 523.1 L1059.3 524.8 L1059.7 526.5 L1060.2 528.2 L1060.6 529.9 L1061.1 528.5 L1061.7 527.0 L1062.2 525.6 L1062.7 524.2 L1063.2 522.7 L1063.6 524.5 L1064.0 526.4 L1064.4 528.2 L1064.8 530.0 L1065.2 531.8 L1065.5 529.3 L1065.9 526.9 L1066.3 524.4 L1066.6 522.0 L1067.0 519.5 L1067.3 521.9 L1067.6 524.2 L1068.0 526.6 L1068.3 528.9 L1068.6 531.3 L1069.1 529.4 L1069.6 527.6 L1070.2 525.8 L1070.7 523.9 L1071.2 522.1 L1071.7 524.1 L1072.1 526.1 L1072.6 528.1 L1073.0 530.1 L1073.5 532.1 L1074.0 530.0 L1074.5 527.8 L1075.1 525.7 L1075.6 523.6 L1076.1 521.5 L1076.6 523.5 L1077.0 525.5 L1077.5 527.6 L1077.9 529.6 L1078.4 531.6 L1078.8 529.3 L1079.3 527.1 L1079.7 524.8 L1080.1 522.6 L1080.6 520.3 L1081.0 522.7 L1081.4 525.1 L1081.8 527.5 L1082.2 529.9 L1082.6 532.4 L1083.2 530.1 L1083.9 527.8 L1084.5 525.5 L1085.1 523.2 L1085.8 520.9 L1086.2 522.5 L1086.6 524.2 L1087.0 525.8 L1087.4 527.4 L1087.8 529.1 L1088.4 527.7 L1088.9 526.4 L1089.4 525.0 L1089.9 523.6 L1090.4 522.3 L1090.7 524.3 L1091.1 526.2 L1091.4 528.2 L1091.7 530.2 L1092.0 532.2 L1092.4 529.9 L1092.8 527.5 L1093.2 525.2 L1093.6 522.9 L1094.0 520.5 L1094.7 522.4 L1095.4 524.2 L1096.2 526.0 L1096.9 527.8 L1097.6 529.6 L1098.2 528.0 L1098.9 526.4 L1099.6 524.8 L1100.2 523.2 L1100.9 521.6 L1101.4 523.8 L1101.9 525.9 L1102.5 528.1 L1103.0 530.2 L1103.5 532.3 L1103.9 530.4 L1104.3 528.6 L1104.7 526.7 L1105.0 524.8 L1105.4 522.9 L1106.1 524.2 L1106.7 525.6 L1107.3 526.9 L1108.0 528.3 L1108.6 529.6 L1109.0 527.9 L1109.4 526.3 L1109.8 524.6 L1110.2 522.9 L1110.6 521.3 L1111.2 523.5 L1111.8 525.8 L1112.4 528.0 L1113.1 530.3 L1113.7 532.6 L1114.2 530.1 L1114.7 527.6 L1115.2 525.1 L1115.7 522.6 L1116.2 520.9 L1116.8 524.0 L1117.5 526.8 L1118.1 529.3 L1118.8 531.5 L1119.4 533.5 L1119.8 532.7 L1120.1 532.0 L1120.5 531.5 L1120.8 531.1 L1121.2 530.8 L1121.7 532.6 L1122.2 534.1 L1122.6 535.5 L1123.1 536.6 L1123.6 537.5 L1124.0 537.9 L1124.4 538.3 L1124.9 538.6 L1125.3 538.8 L1125.7 538.8 L1125.7 539.2 L1125.6 539.2 L1125.5 539.3 L1125.4 539.3 L1125.3 539.4 L1125.2 539.4 L1124.9 539.8 L1124.6 540.4 L1124.3 541.1 L1124.0 542.0 L1123.7 543.0 L1123.3 543.2 L1122.9 543.1 L1122.5 542.8 L1122.1 542.3 L1121.7 541.6 L1121.4 542.7 L1121.0 544.0 L1120.7 545.4 L1120.4 546.9 L1120.0 548.5 L1119.6 548.4 L1119.1 548.2 L1118.6 547.8 L1118.2 547.3 L1117.7 546.6 L1117.2 548.2 L1116.8 550.0 L1116.3 551.9 L1115.8 553.9 L1115.4 555.4 L1115.0 553.9 L1114.6 552.4 L1114.2 551.0 L1113.8 549.5 L1113.4 548.0 L1113.1 549.7 L1112.8 551.4 L1112.6 553.2 L1112.3 554.9 L1112.1 556.7 L1111.6 554.2 L1111.2 551.7 L1110.7 549.2 L1110.3 546.6 L1109.9 544.1 L1109.3 546.7 L1108.7 549.3 L1108.1 551.9 L1107.6 554.6 L1107.0 557.2 L1106.5 555.0 L1105.9 552.8 L1105.4 550.6 L1104.9 548.4 L1104.4 546.1 L1104.1 548.4 L1103.9 550.7 L1103.6 553.0 L1103.3 555.3 L1103.0 557.6 L1102.6 555.5 L1102.1 553.5 L1101.7 551.5 L1101.2 549.5 L1100.8 547.5 L1100.4 549.7 L1100.0 551.9 L1099.7 554.1 L1099.3 556.3 L1098.9 558.5 L1098.5 555.7 L1098.1 552.8 L1097.7 550.0 L1097.3 547.2 L1096.9 544.4 L1096.4 546.9 L1096.0 549.5 L1095.5 552.0 L1095.1 554.5 L1094.6 557.1 L1093.9 555.4 L1093.1 553.8 L1092.3 552.2 L1091.6 550.5 L1090.8 548.9 L1090.2 550.2 L1089.7 551.6 L1089.1 552.9 L1088.5 554.2 L1088.0 555.6 L1087.6 553.9 L1087.2 552.3 L1086.7 550.7 L1086.3 549.0 L1085.9 547.4 L1085.5 549.3 L1085.0 551.3 L1084.6 553.2 L1084.2 555.2 L1083.7 557.1 L1083.4 555.0 L1083.1 552.8 L1082.8 550.7 L1082.5 548.5 L1082.2 546.3 L1081.7 548.8 L1081.2 551.2 L1080.8 553.6 L1080.3 556.1 L1079.9 558.5 L1079.2 555.6 L1078.5 552.7 L1077.9 549.8 L1077.2 546.9 L1076.6 544.0 L1076.3 546.6 L1076.0 549.2 L1075.8 551.8 L1075.5 554.4 L1075.2 556.9 L1074.8 554.8 L1074.4 552.6 L1074.0 550.5 L1073.6 548.4 L1073.2 546.2 L1072.6 548.7 L1072.0 551.2 L1071.4 553.7 L1070.8 556.1 L1070.2 558.6 L1069.7 556.1 L1069.1 553.6 L1068.6 551.0 L1068.1 548.5 L1067.6 546.0 L1067.1 548.2 L1066.6 550.5 L1066.1 552.8 L1065.7 555.1 L1065.2 557.3 L1064.6 555.7 L1064.0 554.0 L1063.4 552.3 L1062.8 550.6 L1062.2 548.9 L1061.8 550.9 L1061.4 552.8 L1061.0 554.8 L1060.6 556.7 L1060.1 558.7 L1059.4 556.7 L1058.6 554.7 L1057.8 552.7 L1057.1 550.7 L1056.3 548.7 L1055.8 550.6 L1055.2 552.5 L1054.7 554.4 L1054.2 556.3 L1053.7 558.2 L1053.2 556.1 L1052.7 554.0 L1052.2 551.8 L1051.7 549.7 L1051.2 547.6 L1050.8 549.4 L1050.4 551.2 L1050.0 553.0 L1049.6 554.9 L1049.1 556.7 L1048.9 554.6 L1048.6 552.6 L1048.3 550.6 L1048.0 548.6 L1047.8 546.5 L1047.3 548.8 L1046.9 551.2 L1046.4 553.5 L1045.9 555.8 L1045.5 558.1 L1045.1 555.5 L1044.8 552.9 L1044.4 550.3 L1044.1 547.7 L1043.7 545.1 L1043.4 547.1 L1043.1 549.2 L1042.9 551.2 L1042.6 553.2 L1042.3 555.3 L1041.9 553.8 L1041.5 552.3 L1041.0 550.8 L1040.6 549.4 L1040.2 547.9 L1039.9 549.4 L1039.5 550.8 L1039.2 552.3 L1038.9 553.7 L1038.5 555.2 L1038.1 553.9 L1037.6 552.6 L1037.2 551.3 L1036.7 550.0 L1036.3 548.7 L1035.8 550.2 L1035.3 551.8 L1034.8 553.3 L1034.3 554.8 L1033.8 556.3 L1033.4 554.1 L1033.0 551.9 L1032.6 549.8 L1032.2 547.6 L1031.8 545.4 L1031.4 548.0 L1031.1 550.6 L1030.8 553.2 L1030.5 555.7 L1030.2 558.3 L1029.8 556.3 L1029.4 554.3 L1029.0 552.3 L1028.7 550.3 L1028.3 548.3 L1027.9 550.1 L1027.5 551.8 L1027.1 553.5 L1026.6 555.2 L1026.2 556.9 L1025.8 555.2 L1025.3 553.4 L1024.9 551.7 L1024.4 549.9 L1023.9 548.2 L1023.5 549.6 L1023.0 550.9 L1022.5 552.3 L1022.0 553.7 L1021.5 555.1 L1021.2 553.4 L1020.9 551.8 L1020.6 550.2 L1020.2 548.6 L1019.9 547.0 L1019.3 548.6 L1018.7 550.3 L1018.1 552.0 L1017.5 553.6 L1016.9 555.3 L1016.4 553.2 L1015.9 551.2 L1015.5 549.1 L1015.0 547.1 L1014.5 545.0 L1014.0 547.3 L1013.5 549.6 L1013.0 551.9 L1012.5 554.2 L1012.1 556.5 L1011.7 555.0 L1011.3 553.5 L1011.0 552.0 L1010.6 550.5 L1010.2 549.0 L1009.5 550.6 L1008.8 552.3 L1008.1 553.9 L1007.4 555.6 L1006.6 557.2 L1006.2 554.7 L1005.7 552.1 L1005.3 549.6 L1004.9 547.0 L1004.4 544.5 L1004.0 546.9 L1003.5 549.2 L1003.1 551.6 L1002.6 554.0 L1002.2 556.4 L1001.6 554.5 L1000.9 552.6 L1000.3 550.8 L999.7 548.9 L999.1 547.1 L998.6 549.3 L998.0 551.6 L997.5 553.8 L997.0 556.1 L996.5 558.3 L995.9 555.7 L995.3 553.0 L994.7 550.4 L994.2 547.7 L993.6 545.1 L993.3 547.5 L993.0 550.0 L992.7 552.5 L992.5 554.9 L992.2 557.4 L991.7 555.2 L991.3 553.0 L990.9 550.9 L990.5 548.7 L990.0 546.5 Z" fill="#fdeeae"/><path d="M990.0 751.0 L990.5 743.1 L991.0 735.1 L991.4 727.2 L991.9 719.2 L992.3 711.3 L992.6 716.3 L992.9 721.2 L993.1 726.2 L993.4 731.2 L993.6 736.2 L994.2 730.3 L994.7 724.4 L995.3 718.5 L995.8 712.7 L996.3 706.8 L997.1 716.2 L997.8 725.7 L998.5 735.1 L999.2 744.6 L1000.0 754.1 L1000.5 743.7 L1001.1 733.4 L1001.6 723.1 L1002.2 712.7 L1002.8 702.4 L1003.1 713.6 L1003.5 724.8 L1003.9 735.9 L1004.3 747.1 L1004.7 758.3 L1005.3 747.8 L1005.8 737.3 L1006.4 726.7 L1007.0 716.2 L1007.6 705.7 L1008.0 717.0 L1008.5 728.4 L1008.9 739.7 L1009.4 751.0 L1009.8 762.4 L1010.3 750.1 L1010.8 737.8 L1011.2 725.6 L1011.7 713.3 L1012.2 701.1 L1012.6 709.1 L1013.1 717.2 L1013.6 725.2 L1014.0 733.3 L1014.5 741.3 L1015.0 733.2 L1015.5 725.1 L1015.9 717.0 L1016.4 709.0 L1016.9 700.9 L1017.5 712.5 L1018.2 724.2 L1018.8 735.8 L1019.4 747.5 L1020.0 759.1 L1020.4 748.4 L1020.8 737.8 L1021.1 727.1 L1021.5 716.4 L1021.8 705.8 L1022.4 713.0 L1022.9 720.3 L1023.5 727.6 L1024.0 734.9 L1024.5 742.1 L1025.2 734.5 L1025.9 726.9 L1026.6 719.4 L1027.2 711.8 L1027.9 704.2 L1028.4 712.6 L1028.8 721.1 L1029.3 729.5 L1029.7 738.0 L1030.2 746.4 L1030.7 737.2 L1031.2 727.9 L1031.8 718.6 L1032.3 709.4 L1032.9 700.1 L1033.2 708.9 L1033.5 717.7 L1033.8 726.5 L1034.1 735.2 L1034.4 744.0 L1035.2 735.6 L1036.0 727.1 L1036.8 718.6 L1037.6 710.2 L1038.4 701.7 L1038.9 710.0 L1039.4 718.3 L1039.9 726.7 L1040.4 735.0 L1040.9 743.3 L1041.6 737.1 L1042.2 730.9 L1042.9 724.6 L1043.5 718.4 L1044.2 712.2 L1044.7 717.9 L1045.3 723.7 L1045.8 729.4 L1046.3 735.1 L1046.8 740.9 L1047.3 733.0 L1047.8 725.1 L1048.3 717.2 L1048.8 709.3 L1049.3 701.4 L1049.7 711.4 L1050.1 721.3 L1050.6 731.3 L1051.0 741.2 L1051.4 751.2 L1051.8 741.3 L1052.3 731.4 L1052.7 721.5 L1053.2 711.6 L1053.6 701.7 L1054.0 709.5 L1054.5 717.4 L1054.9 725.2 L1055.3 733.0 L1055.7 740.8 L1056.5 733.2 L1057.3 725.6 L1058.1 717.9 L1058.9 710.3 L1059.7 702.7 L1060.2 712.5 L1060.7 722.2 L1061.2 732.0 L1061.7 741.7 L1062.2 751.5 L1062.7 743.9 L1063.2 736.3 L1063.7 728.7 L1064.2 721.1 L1064.7 713.5 L1065.0 718.3 L1065.3 723.1 L1065.6 727.9 L1065.9 732.8 L1066.2 737.6 L1066.7 732.4 L1067.1 727.2 L1067.6 722.0 L1068.1 716.9 L1068.5 711.7 L1069.1 718.2 L1069.8 724.8 L1070.4 731.4 L1071.0 737.9 L1071.6 744.5 L1072.0 738.1 L1072.4 731.7 L1072.7 725.3 L1073.1 718.9 L1073.4 712.5 L1073.8 722.4 L1074.2 732.3 L1074.6 742.2 L1075.0 752.1 L1075.4 762.0 L1075.8 752.3 L1076.3 742.6 L1076.8 733.0 L1077.2 723.3 L1077.7 713.6 L1078.1 719.0 L1078.5 724.3 L1078.8 729.7 L1079.2 735.0 L1079.6 740.4 L1080.1 733.1 L1080.5 725.8 L1081.0 718.6 L1081.5 711.3 L1081.9 704.0 L1082.5 716.0 L1083.2 728.0 L1083.8 740.1 L1084.4 752.1 L1085.0 764.1 L1085.4 751.7 L1085.9 739.3 L1086.3 726.9 L1086.7 714.5 L1087.1 702.0 L1087.6 710.8 L1088.0 719.5 L1088.4 728.3 L1088.8 737.0 L1089.3 745.7 L1089.7 739.0 L1090.2 732.2 L1090.7 725.4 L1091.1 718.6 L1091.6 711.8 L1091.8 721.6 L1092.1 731.3 L1092.4 741.0 L1092.6 750.7 L1092.9 760.5 L1093.3 750.0 L1093.7 739.6 L1094.1 729.1 L1094.4 718.7 L1094.8 708.2 L1095.5 718.5 L1096.1 728.8 L1096.8 739.1 L1097.5 749.4 L1098.1 759.7 L1098.6 749.3 L1099.0 739.0 L1099.4 728.7 L1099.9 718.4 L1100.3 708.1 L1100.9 717.6 L1101.4 727.2 L1101.9 736.7 L1102.4 746.3 L1103.0 755.8 L1103.5 746.3 L1104.1 736.7 L1104.6 727.2 L1105.1 717.7 L1105.7 708.1 L1106.1 716.5 L1106.6 724.9 L1107.0 733.3 L1107.5 741.7 L1107.9 750.1 L1108.3 742.7 L1108.7 735.2 L1109.2 727.8 L1109.6 720.4 L1110.0 712.9 L1110.4 720.8 L1110.9 728.7 L1111.4 736.5 L1111.8 744.4 L1112.3 752.3 L1112.7 743.7 L1113.1 735.2 L1113.5 726.6 L1113.9 718.1 L1114.3 709.6 L1114.9 717.5 L1115.5 725.5 L1116.1 733.4 L1116.7 741.4 L1117.3 749.3 L1117.9 741.5 L1118.4 733.8 L1118.9 726.0 L1119.5 718.2 L1120.0 710.4 L1120.4 716.6 L1120.9 722.8 L1121.4 729.0 L1121.8 735.2 L1122.3 741.4 L1122.8 735.0 L1123.3 728.5 L1123.8 722.1 L1124.3 715.7 L1124.7 709.2 L1124.9 720.3 L1125.1 731.3 L1125.3 742.4 L1125.5 753.4 L1125.7 764.5 L1125.7 792.0 L1125.5 793.6 L1125.3 795.2 L1125.1 796.9 L1124.9 798.5 L1124.6 800.1 L1124.0 821.5 L1123.3 842.8 L1122.7 864.2 L1122.1 885.6 L1121.4 906.9 L1120.9 889.8 L1120.3 872.6 L1119.7 855.5 L1119.2 838.3 L1118.6 821.2 L1118.3 837.4 L1117.9 853.7 L1117.6 870.0 L1117.3 886.3 L1116.9 902.5 L1116.4 879.6 L1115.9 856.6 L1115.3 833.6 L1114.8 810.6 L1114.3 787.7 L1113.7 811.8 L1113.2 835.9 L1112.6 860.1 L1112.0 884.2 L1111.5 908.3 L1111.1 891.3 L1110.7 874.2 L1110.3 857.1 L1109.9 840.1 L1109.5 823.0 L1109.0 839.1 L1108.6 855.1 L1108.2 871.2 L1107.7 887.2 L1107.3 903.3 L1106.9 884.6 L1106.5 866.0 L1106.2 847.4 L1105.8 828.8 L1105.4 810.2 L1105.0 826.8 L1104.7 843.4 L1104.3 860.1 L1103.9 876.7 L1103.5 893.4 L1103.1 879.4 L1102.6 865.4 L1102.1 851.4 L1101.6 837.4 L1101.1 823.4 L1100.7 837.5 L1100.4 851.5 L1100.0 865.6 L1099.7 879.6 L1099.3 893.7 L1098.8 873.0 L1098.2 852.2 L1097.7 831.5 L1097.1 810.7 L1096.5 790.0 L1096.0 810.1 L1095.6 830.1 L1095.1 850.2 L1094.6 870.2 L1094.1 890.3 L1093.5 872.4 L1092.9 854.5 L1092.4 836.7 L1091.8 818.8 L1091.2 800.9 L1090.8 821.6 L1090.4 842.2 L1090.0 862.9 L1089.5 883.5 L1089.1 904.1 L1088.7 881.1 L1088.4 858.0 L1088.0 835.0 L1087.6 811.9 L1087.3 788.9 L1086.7 810.9 L1086.1 833.0 L1085.5 855.0 L1084.9 877.1 L1084.3 899.1 L1083.9 879.1 L1083.5 859.1 L1083.1 839.0 L1082.7 819.0 L1082.3 799.0 L1081.8 818.3 L1081.2 837.5 L1080.6 856.8 L1080.0 876.1 L1079.4 895.3 L1078.9 881.0 L1078.4 866.6 L1077.9 852.3 L1077.4 837.9 L1076.9 823.6 L1076.3 838.5 L1075.7 853.4 L1075.1 868.3 L1074.5 883.2 L1073.9 898.1 L1073.4 879.8 L1072.9 861.5 L1072.3 843.2 L1071.8 824.9 L1071.3 806.7 L1070.8 826.1 L1070.2 845.5 L1069.7 865.0 L1069.1 884.4 L1068.6 903.9 L1067.9 885.9 L1067.2 867.8 L1066.5 849.8 L1065.8 831.8 L1065.0 813.8 L1064.6 829.0 L1064.1 844.2 L1063.7 859.3 L1063.2 874.5 L1062.7 889.7 L1062.4 874.9 L1062.1 860.2 L1061.8 845.4 L1061.5 830.6 L1061.2 815.9 L1060.8 832.8 L1060.4 849.7 L1060.0 866.6 L1059.6 883.5 L1059.1 900.4 L1058.6 883.1 L1058.0 865.7 L1057.4 848.4 L1056.8 831.1 L1056.3 813.7 L1055.7 831.0 L1055.1 848.2 L1054.4 865.4 L1053.8 882.7 L1053.2 899.9 L1052.6 880.5 L1051.9 861.0 L1051.3 841.5 L1050.6 822.0 L1049.9 802.6 L1049.6 823.4 L1049.2 844.3 L1048.8 865.1 L1048.4 886.0 L1048.0 906.8 L1047.6 890.4 L1047.2 874.1 L1046.9 857.7 L1046.5 841.3 L1046.1 824.9 L1045.7 840.4 L1045.4 855.9 L1045.0 871.5 L1044.7 887.0 L1044.3 902.5 L1043.7 882.0 L1043.2 861.5 L1042.6 841.0 L1042.1 820.5 L1041.5 800.0 L1041.0 818.9 L1040.5 837.8 L1040.0 856.7 L1039.5 875.5 L1039.0 894.4 L1038.3 878.1 L1037.6 861.9 L1036.9 845.6 L1036.3 829.4 L1035.6 813.1 L1035.1 828.1 L1034.5 843.1 L1034.0 858.1 L1033.4 873.1 L1032.9 888.1 L1032.1 873.7 L1031.4 859.4 L1030.7 845.0 L1029.9 830.7 L1029.2 816.4 L1028.6 834.3 L1028.0 852.2 L1027.5 870.1 L1026.9 888.0 L1026.3 905.9 L1025.7 888.3 L1025.2 870.7 L1024.6 853.1 L1024.1 835.5 L1023.5 817.9 L1023.1 834.5 L1022.7 851.1 L1022.3 867.7 L1021.8 884.3 L1021.4 900.8 L1020.7 879.1 L1019.9 857.4 L1019.2 835.7 L1018.5 814.0 L1017.7 792.4 L1017.3 812.1 L1016.8 831.9 L1016.3 851.7 L1015.9 871.5 L1015.4 891.3 L1014.7 875.5 L1013.9 859.6 L1013.1 843.8 L1012.4 828.0 L1011.6 812.1 L1011.2 831.5 L1010.8 851.0 L1010.3 870.4 L1009.9 889.8 L1009.5 909.2 L1009.0 891.7 L1008.5 874.2 L1007.9 856.8 L1007.4 839.3 L1006.9 821.8 L1006.4 838.3 L1005.9 854.8 L1005.4 871.3 L1004.9 887.9 L1004.5 904.4 L1003.7 888.6 L1003.0 872.8 L1002.2 857.1 L1001.5 841.3 L1000.8 825.5 L1000.2 840.1 L999.6 854.7 L999.1 869.3 L998.5 883.9 L998.0 898.5 L997.2 883.2 L996.5 867.9 L995.8 852.6 L995.0 837.2 L994.3 821.9 L993.8 838.6 L993.4 855.3 L992.9 871.9 L992.4 888.6 L992.0 905.3 L991.6 885.4 L991.2 865.6 L990.8 845.7 L990.4 825.9 L990.0 806.0 Z" fill="url(#g2)"/><rect x="987.5" y="378" width="2" height="539" fill="#1a1a1a"/><rect x="1128.7" y="378" width="137.7" height="539" rx="5" fill="#cba412" stroke="#151515" stroke-width="1.5"/><path d="M1129.7 527.5 L1130.5 524.0 L1131.3 520.5 L1132.1 516.9 L1132.8 513.4 L1133.6 509.9 L1134.1 513.8 L1134.6 517.7 L1135.1 521.6 L1135.6 525.5 L1136.1 529.4 L1136.6 525.4 L1137.1 521.4 L1137.6 517.4 L1138.1 513.4 L1138.6 509.4 L1139.0 513.7 L1139.4 518.0 L1139.8 522.3 L1140.2 526.6 L1140.6 530.9 L1141.1 527.5 L1141.6 524.2 L1142.1 520.9 L1142.6 517.5 L1143.1 514.2 L1143.4 516.6 L1143.7 519.1 L1144.0 521.5 L1144.3 524.0 L1144.6 526.4 L1145.1 522.9 L1145.6 519.4 L1146.1 515.9 L1146.5 512.5 L1147.0 509.0 L1147.4 512.6 L1147.9 516.2 L1148.3 519.7 L1148.7 523.3 L1149.1 526.9 L1149.5 523.7 L1149.9 520.4 L1150.3 517.2 L1150.8 513.9 L1151.2 510.7 L1151.7 513.8 L1152.2 517.0 L1152.7 520.2 L1153.2 523.4 L1153.8 526.6 L1154.2 523.5 L1154.7 520.5 L1155.1 517.4 L1155.6 514.3 L1156.1 511.2 L1156.6 514.8 L1157.0 518.4 L1157.5 522.0 L1158.0 525.6 L1158.5 529.2 L1158.9 526.2 L1159.3 523.2 L1159.7 520.3 L1160.2 517.3 L1160.6 514.3 L1161.0 516.8 L1161.4 519.3 L1161.7 521.8 L1162.1 524.3 L1162.5 526.8 L1163.2 524.1 L1163.9 521.4 L1164.6 518.7 L1165.3 516.0 L1166.1 513.2 L1166.5 516.2 L1167.0 519.2 L1167.5 522.2 L1168.0 525.1 L1168.4 528.1 L1169.0 524.1 L1169.6 520.1 L1170.1 516.1 L1170.7 512.1 L1171.3 508.1 L1172.0 512.4 L1172.6 516.7 L1173.3 521.0 L1174.0 525.3 L1174.7 529.6 L1175.1 525.7 L1175.6 521.9 L1176.0 518.0 L1176.4 514.2 L1176.9 510.3 L1177.6 513.3 L1178.4 516.3 L1179.2 519.3 L1180.0 522.4 L1180.7 525.4 L1181.3 522.0 L1181.8 518.7 L1182.4 515.3 L1182.9 512.0 L1183.5 508.6 L1184.0 511.7 L1184.4 514.8 L1184.9 517.9 L1185.4 520.9 L1185.9 524.0 L1186.3 522.2 L1186.7 520.3 L1187.1 518.4 L1187.5 516.6 L1187.9 514.7 L1188.3 517.4 L1188.7 520.2 L1189.1 522.9 L1189.5 525.6 L1189.9 528.4 L1190.2 524.8 L1190.5 521.3 L1190.8 517.7 L1191.2 514.2 L1191.5 510.6 L1191.9 514.6 L1192.4 518.5 L1192.9 522.5 L1193.4 526.5 L1193.8 530.4 L1194.6 523.3 L1195.3 516.2 L1196.1 509.2 L1196.8 502.1 L1197.6 495.0 L1197.6 501.9 L1197.7 508.7 L1197.7 515.6 L1197.8 522.4 L1197.8 529.3 L1198.2 525.4 L1198.6 521.6 L1199.0 517.7 L1199.4 513.8 L1199.8 510.0 L1200.1 513.3 L1200.5 516.6 L1200.8 519.9 L1201.2 523.3 L1201.5 526.6 L1202.0 523.3 L1202.6 519.9 L1203.1 516.6 L1203.6 513.3 L1204.1 510.0 L1204.6 513.7 L1205.1 517.5 L1205.7 521.3 L1206.2 525.1 L1206.7 528.8 L1207.3 524.9 L1208.0 520.9 L1208.7 516.9 L1209.3 513.0 L1210.0 509.0 L1210.6 512.1 L1211.1 515.3 L1211.6 518.5 L1212.2 521.6 L1212.7 524.8 L1213.3 522.1 L1213.9 519.4 L1214.5 516.7 L1215.1 514.0 L1215.7 511.3 L1216.3 514.2 L1216.9 517.2 L1217.5 520.1 L1218.1 523.0 L1218.7 525.9 L1219.1 522.4 L1219.5 519.0 L1219.8 515.5 L1220.2 512.0 L1220.6 508.6 L1221.3 512.8 L1221.9 517.0 L1222.6 521.2 L1223.3 525.4 L1223.9 529.6 L1224.4 526.6 L1224.9 523.5 L1225.4 520.5 L1225.9 517.4 L1226.3 514.3 L1226.9 516.9 L1227.4 519.4 L1227.9 521.9 L1228.4 524.4 L1228.9 527.0 L1229.5 523.7 L1230.1 520.5 L1230.8 517.2 L1231.4 514.0 L1232.0 510.7 L1232.5 514.3 L1232.9 518.0 L1233.3 521.6 L1233.7 525.2 L1234.2 528.9 L1234.8 525.2 L1235.5 521.5 L1236.2 517.9 L1236.8 514.2 L1237.5 510.5 L1237.9 513.5 L1238.2 516.4 L1238.6 519.3 L1239.0 522.2 L1239.4 525.1 L1239.8 522.8 L1240.1 520.5 L1240.5 518.2 L1240.9 515.8 L1241.3 513.5 L1241.6 516.8 L1242.0 520.1 L1242.3 523.3 L1242.6 526.6 L1242.9 529.9 L1243.3 526.8 L1243.6 523.7 L1244.0 520.6 L1244.3 517.5 L1244.7 514.4 L1245.2 517.4 L1245.8 520.4 L1246.3 523.5 L1246.9 526.5 L1247.4 529.5 L1247.7 525.5 L1248.1 521.5 L1248.5 517.5 L1248.8 513.4 L1249.2 509.4 L1249.7 513.6 L1250.1 517.8 L1250.6 522.0 L1251.1 526.2 L1251.6 530.4 L1251.9 526.6 L1252.2 522.8 L1252.5 519.0 L1252.8 515.2 L1253.1 511.5 L1253.6 515.0 L1254.1 518.6 L1254.6 522.2 L1255.2 525.8 L1255.7 529.4 L1256.1 526.2 L1256.5 523.1 L1257.0 519.9 L1257.4 516.8 L1257.8 513.6 L1258.4 516.4 L1259.0 519.2 L1259.6 522.0 L1260.2 524.8 L1260.8 527.6 L1261.2 524.3 L1261.7 521.0 L1262.1 517.7 L1262.6 514.4 L1263.1 511.1 L1263.3 514.5 L1263.6 517.9 L1263.9 521.4 L1264.2 524.8 L1264.5 528.2 L1264.7 529.2 L1264.9 530.2 L1265.0 531.2 L1265.2 532.2 L1265.4 533.2 L1265.4 544.8 L1265.2 546.3 L1265.0 547.8 L1264.9 549.3 L1264.7 550.8 L1264.5 552.3 L1264.0 555.0 L1263.5 557.7 L1263.0 560.4 L1262.5 563.1 L1261.9 565.7 L1261.4 563.1 L1260.8 560.5 L1260.2 557.9 L1259.6 555.3 L1259.0 552.6 L1258.7 555.2 L1258.4 557.7 L1258.1 560.3 L1257.8 562.9 L1257.5 565.4 L1257.0 562.8 L1256.4 560.1 L1255.9 557.5 L1255.4 554.9 L1254.9 552.2 L1254.5 555.7 L1254.2 559.2 L1253.8 562.6 L1253.5 566.1 L1253.1 569.6 L1252.6 566.2 L1252.0 562.7 L1251.4 559.3 L1250.8 555.9 L1250.2 552.5 L1249.8 555.0 L1249.5 557.5 L1249.1 560.0 L1248.8 562.5 L1248.4 565.0 L1247.8 561.6 L1247.2 558.1 L1246.5 554.7 L1245.9 551.2 L1245.2 547.8 L1244.8 552.1 L1244.4 556.4 L1243.9 560.7 L1243.5 565.0 L1243.1 569.3 L1242.7 565.6 L1242.3 561.9 L1242.0 558.3 L1241.6 554.6 L1241.2 550.9 L1240.6 554.4 L1239.9 557.8 L1239.2 561.3 L1238.5 564.8 L1237.8 568.3 L1237.3 564.5 L1236.8 560.8 L1236.4 557.1 L1235.9 553.4 L1235.5 549.6 L1235.0 552.6 L1234.5 555.5 L1234.0 558.4 L1233.5 561.3 L1233.0 564.3 L1232.3 561.3 L1231.6 558.4 L1230.9 555.5 L1230.2 552.5 L1229.6 549.6 L1229.0 553.0 L1228.4 556.4 L1227.7 559.9 L1227.1 563.3 L1226.5 566.7 L1226.0 564.2 L1225.5 561.6 L1224.9 559.1 L1224.4 556.5 L1223.8 554.0 L1223.2 557.0 L1222.5 560.1 L1221.8 563.2 L1221.1 566.2 L1220.4 569.3 L1219.8 565.6 L1219.2 561.9 L1218.6 558.3 L1218.0 554.6 L1217.4 551.0 L1217.0 554.4 L1216.6 557.8 L1216.2 561.3 L1215.7 564.7 L1215.3 568.1 L1214.7 564.8 L1214.2 561.4 L1213.7 558.0 L1213.1 554.7 L1212.6 551.3 L1212.2 554.7 L1211.8 558.0 L1211.3 561.4 L1210.9 564.7 L1210.5 568.1 L1209.8 564.7 L1209.1 561.3 L1208.4 557.9 L1207.7 554.5 L1207.0 551.0 L1206.7 554.2 L1206.4 557.3 L1206.2 560.5 L1205.9 563.6 L1205.6 566.8 L1205.1 563.1 L1204.7 559.4 L1204.2 555.7 L1203.7 552.0 L1203.3 548.3 L1202.8 552.4 L1202.4 556.4 L1202.0 560.4 L1201.5 564.5 L1201.1 568.5 L1200.4 564.8 L1199.7 561.0 L1199.0 557.3 L1198.3 553.6 L1197.6 549.9 L1197.6 556.5 L1197.6 563.1 L1197.6 569.7 L1197.6 576.4 L1197.6 583.0 L1196.6 577.2 L1195.7 571.3 L1194.8 565.5 L1193.9 559.7 L1192.9 553.8 L1192.4 557.1 L1191.8 560.3 L1191.3 563.5 L1190.7 566.8 L1190.2 570.0 L1189.6 565.6 L1189.1 561.2 L1188.5 556.8 L1188.0 552.4 L1187.4 548.0 L1186.9 552.2 L1186.4 556.4 L1185.9 560.6 L1185.4 564.8 L1184.9 569.0 L1184.2 565.9 L1183.5 562.8 L1182.8 559.7 L1182.1 556.6 L1181.4 553.5 L1180.6 556.0 L1179.9 558.6 L1179.1 561.1 L1178.4 563.7 L1177.6 566.3 L1177.1 563.0 L1176.6 559.8 L1176.1 556.5 L1175.6 553.3 L1175.0 550.1 L1174.7 553.4 L1174.3 556.7 L1174.0 560.1 L1173.6 563.4 L1173.3 566.7 L1172.7 563.4 L1172.1 560.1 L1171.5 556.8 L1170.9 553.5 L1170.3 550.1 L1170.1 553.5 L1169.8 556.9 L1169.5 560.2 L1169.3 563.6 L1169.0 567.0 L1168.5 564.0 L1168.1 561.0 L1167.6 558.1 L1167.2 555.1 L1166.7 552.1 L1166.0 555.0 L1165.3 557.9 L1164.5 560.8 L1163.8 563.7 L1163.1 566.7 L1162.6 563.9 L1162.1 561.1 L1161.7 558.3 L1161.2 555.5 L1160.7 552.7 L1160.2 555.2 L1159.8 557.7 L1159.3 560.2 L1158.8 562.7 L1158.3 565.3 L1157.9 561.8 L1157.5 558.4 L1157.1 555.0 L1156.7 551.6 L1156.3 548.2 L1155.8 551.5 L1155.4 554.8 L1154.9 558.1 L1154.5 561.4 L1154.0 564.7 L1153.6 561.3 L1153.3 558.0 L1152.9 554.7 L1152.6 551.4 L1152.2 548.1 L1151.7 552.2 L1151.2 556.3 L1150.7 560.5 L1150.2 564.6 L1149.7 568.8 L1148.9 565.4 L1148.1 562.0 L1147.3 558.5 L1146.5 555.1 L1145.8 551.7 L1145.0 554.1 L1144.1 556.4 L1143.3 558.8 L1142.5 561.1 L1141.7 563.5 L1141.3 560.4 L1140.8 557.3 L1140.3 554.3 L1139.8 551.2 L1139.4 548.1 L1138.8 552.1 L1138.3 556.0 L1137.7 560.0 L1137.2 563.9 L1136.6 567.9 L1136.2 563.9 L1135.7 559.9 L1135.3 555.9 L1134.9 551.9 L1134.4 547.9 L1133.8 551.8 L1133.2 555.6 L1132.7 559.4 L1132.1 563.3 L1131.5 567.1 L1131.1 563.8 L1130.8 560.5 L1130.4 557.1 L1130.1 553.8 L1129.7 550.5 Z" fill="#fdeeae"/><path d="M1129.7 750.5 L1130.1 739.7 L1130.5 729.0 L1130.8 718.2 L1131.2 707.4 L1131.6 696.7 L1132.0 707.8 L1132.4 718.8 L1132.8 729.9 L1133.2 741.0 L1133.6 752.1 L1134.1 743.0 L1134.5 733.9 L1135.0 724.7 L1135.5 715.6 L1135.9 706.5 L1136.3 714.7 L1136.7 723.0 L1137.1 731.2 L1137.4 739.5 L1137.8 747.7 L1138.3 740.4 L1138.8 733.1 L1139.3 725.7 L1139.8 718.4 L1140.2 711.1 L1140.6 720.4 L1140.9 729.6 L1141.3 738.9 L1141.7 748.2 L1142.0 757.5 L1142.5 747.0 L1143.0 736.5 L1143.4 726.0 L1143.9 715.5 L1144.4 705.0 L1145.2 716.1 L1145.9 727.3 L1146.7 738.5 L1147.5 749.7 L1148.3 760.8 L1148.8 747.6 L1149.3 734.4 L1149.7 721.2 L1150.2 708.0 L1150.7 694.8 L1151.2 703.0 L1151.6 711.2 L1152.1 719.4 L1152.5 727.5 L1152.9 735.7 L1153.5 729.3 L1154.0 722.9 L1154.5 716.5 L1155.0 710.1 L1155.5 703.7 L1155.9 715.7 L1156.3 727.7 L1156.6 739.7 L1157.0 751.7 L1157.4 763.7 L1157.8 751.9 L1158.1 740.1 L1158.5 728.4 L1158.9 716.6 L1159.3 704.9 L1159.8 710.7 L1160.2 716.5 L1160.7 722.4 L1161.2 728.2 L1161.7 734.1 L1162.1 727.6 L1162.6 721.1 L1163.0 714.6 L1163.5 708.1 L1163.9 701.6 L1164.6 712.7 L1165.4 723.9 L1166.1 735.0 L1166.8 746.2 L1167.6 757.4 L1168.1 748.1 L1168.6 738.7 L1169.1 729.4 L1169.7 720.1 L1170.2 710.8 L1170.5 717.2 L1170.9 723.6 L1171.2 730.0 L1171.5 736.4 L1171.9 742.8 L1172.3 735.5 L1172.7 728.3 L1173.2 721.1 L1173.6 713.9 L1174.0 706.7 L1174.8 713.6 L1175.6 720.4 L1176.4 727.2 L1177.2 734.1 L1178.0 740.9 L1178.4 734.3 L1178.7 727.7 L1179.0 721.0 L1179.4 714.4 L1179.7 707.8 L1180.1 713.8 L1180.5 719.8 L1180.9 725.8 L1181.3 731.8 L1181.7 737.8 L1182.4 731.6 L1183.0 725.5 L1183.7 719.3 L1184.4 713.2 L1185.1 707.0 L1185.6 718.3 L1186.1 729.5 L1186.6 740.8 L1187.1 752.0 L1187.6 763.3 L1188.1 752.3 L1188.6 741.2 L1189.2 730.2 L1189.7 719.1 L1190.2 708.1 L1190.9 719.4 L1191.6 730.6 L1192.4 741.8 L1193.1 753.1 L1193.8 764.3 L1194.4 753.2 L1195.0 742.1 L1195.5 731.0 L1196.1 719.9 L1196.7 708.8 L1197.3 720.3 L1197.9 731.8 L1198.5 743.3 L1199.2 754.8 L1199.8 766.3 L1200.1 755.4 L1200.5 744.6 L1200.8 733.7 L1201.2 722.8 L1201.5 712.0 L1202.2 719.8 L1202.8 727.7 L1203.4 735.6 L1204.0 743.4 L1204.7 751.3 L1205.2 740.1 L1205.7 729.0 L1206.2 717.8 L1206.8 706.6 L1207.3 695.5 L1207.8 709.5 L1208.3 723.5 L1208.8 737.5 L1209.3 751.5 L1209.8 765.5 L1210.1 752.6 L1210.4 739.7 L1210.7 726.8 L1211.0 713.9 L1211.2 701.0 L1211.7 709.8 L1212.2 718.7 L1212.6 727.6 L1213.1 736.4 L1213.5 745.3 L1214.0 738.4 L1214.4 731.6 L1214.9 724.7 L1215.3 717.9 L1215.7 711.0 L1216.1 721.4 L1216.5 731.7 L1216.9 742.1 L1217.3 752.4 L1217.7 762.8 L1218.1 751.6 L1218.4 740.5 L1218.7 729.4 L1219.1 718.3 L1219.4 707.2 L1219.9 717.2 L1220.5 727.2 L1221.0 737.2 L1221.5 747.2 L1222.1 757.2 L1222.6 745.5 L1223.2 733.7 L1223.8 721.9 L1224.3 710.1 L1224.9 698.4 L1225.3 706.8 L1225.7 715.2 L1226.0 723.5 L1226.4 731.9 L1226.8 740.3 L1227.2 733.3 L1227.7 726.3 L1228.2 719.2 L1228.6 712.2 L1229.1 705.2 L1229.4 711.5 L1229.8 717.9 L1230.1 724.3 L1230.4 730.6 L1230.8 737.0 L1231.3 729.9 L1231.9 722.8 L1232.5 715.7 L1233.1 708.6 L1233.7 701.5 L1234.2 714.4 L1234.7 727.4 L1235.2 740.3 L1235.6 753.3 L1236.1 766.3 L1236.5 754.5 L1236.8 742.7 L1237.2 730.9 L1237.5 719.0 L1237.9 707.2 L1238.4 714.2 L1238.9 721.1 L1239.4 728.1 L1240.0 735.0 L1240.5 741.9 L1240.9 733.1 L1241.2 724.2 L1241.6 715.4 L1242.0 706.5 L1242.3 697.6 L1242.9 709.6 L1243.5 721.6 L1244.0 733.6 L1244.6 745.6 L1245.2 757.6 L1245.5 747.2 L1245.9 736.8 L1246.3 726.4 L1246.6 716.0 L1247.0 705.6 L1247.4 714.3 L1247.8 723.0 L1248.2 731.7 L1248.6 740.4 L1249.0 749.1 L1249.7 739.6 L1250.3 730.1 L1250.9 720.5 L1251.6 711.0 L1252.2 701.4 L1252.7 711.4 L1253.1 721.4 L1253.6 731.4 L1254.0 741.3 L1254.5 751.3 L1255.0 740.8 L1255.5 730.4 L1255.9 719.9 L1256.4 709.4 L1256.9 698.9 L1257.3 706.6 L1257.7 714.3 L1258.1 722.0 L1258.5 729.7 L1258.9 737.4 L1259.6 732.2 L1260.2 727.0 L1260.9 721.9 L1261.6 716.7 L1262.2 711.6 L1262.7 720.5 L1263.1 729.5 L1263.5 738.5 L1263.9 747.5 L1264.4 756.5 L1264.6 758.4 L1264.8 760.4 L1265.0 762.3 L1265.2 764.3 L1265.4 766.2 L1265.4 797.5 L1265.3 799.4 L1265.2 801.4 L1265.2 803.3 L1265.1 805.3 L1265.0 807.2 L1264.6 827.2 L1264.2 847.2 L1263.8 867.1 L1263.4 887.1 L1263.0 907.1 L1262.7 887.1 L1262.3 867.2 L1261.9 847.3 L1261.6 827.4 L1261.2 807.5 L1260.5 826.9 L1259.8 846.3 L1259.2 865.7 L1258.5 885.2 L1257.8 904.6 L1257.2 890.3 L1256.7 875.9 L1256.1 861.6 L1255.5 847.3 L1255.0 833.0 L1254.5 847.4 L1254.0 861.9 L1253.6 876.3 L1253.1 890.8 L1252.7 905.2 L1252.2 890.2 L1251.7 875.3 L1251.2 860.3 L1250.8 845.3 L1250.3 830.4 L1249.7 845.5 L1249.2 860.6 L1248.6 875.7 L1248.0 890.8 L1247.5 905.9 L1246.9 887.1 L1246.4 868.2 L1245.8 849.3 L1245.3 830.5 L1244.7 811.6 L1244.4 831.2 L1244.0 850.8 L1243.6 870.5 L1243.2 890.1 L1242.9 909.7 L1242.5 889.8 L1242.1 869.9 L1241.7 849.9 L1241.3 830.0 L1240.9 810.1 L1240.4 830.6 L1240.0 851.2 L1239.5 871.7 L1239.0 892.3 L1238.5 912.0 L1237.9 892.1 L1237.2 871.3 L1236.5 850.6 L1235.8 829.9 L1235.1 809.1 L1234.4 827.2 L1233.7 845.2 L1232.9 863.2 L1232.2 881.3 L1231.4 899.3 L1231.0 879.6 L1230.5 859.9 L1230.1 840.2 L1229.6 820.5 L1229.2 800.8 L1228.5 821.6 L1227.9 842.5 L1227.3 863.3 L1226.6 884.2 L1226.0 905.0 L1225.5 885.9 L1225.0 866.7 L1224.6 847.5 L1224.1 828.4 L1223.6 809.2 L1223.3 827.6 L1222.9 845.9 L1222.6 864.2 L1222.3 882.5 L1221.9 900.9 L1221.3 881.2 L1220.7 861.6 L1220.1 841.9 L1219.5 822.3 L1218.9 802.6 L1218.5 823.0 L1218.2 843.3 L1217.8 863.6 L1217.4 884.0 L1217.1 904.3 L1216.4 882.6 L1215.7 860.8 L1215.1 839.1 L1214.4 817.3 L1213.7 795.6 L1213.3 816.5 L1212.9 837.4 L1212.4 858.3 L1212.0 879.3 L1211.6 900.2 L1211.0 886.4 L1210.5 872.7 L1209.9 858.9 L1209.4 845.2 L1208.8 831.4 L1208.3 845.5 L1207.8 859.6 L1207.3 873.7 L1206.8 887.7 L1206.4 901.8 L1205.8 885.5 L1205.3 869.2 L1204.7 852.9 L1204.2 836.7 L1203.7 820.4 L1203.2 838.9 L1202.8 857.5 L1202.3 876.0 L1201.9 894.5 L1201.4 912.0 L1200.7 897.0 L1200.0 880.9 L1199.2 864.8 L1198.5 848.7 L1197.8 832.6 L1197.0 847.2 L1196.2 861.8 L1195.4 876.5 L1194.6 891.1 L1193.8 905.7 L1193.3 883.1 L1192.8 860.4 L1192.3 837.8 L1191.8 815.1 L1191.3 792.5 L1190.9 814.9 L1190.5 837.4 L1190.2 859.9 L1189.8 882.3 L1189.4 904.8 L1189.0 883.9 L1188.7 863.0 L1188.4 842.1 L1188.0 821.2 L1187.7 800.3 L1187.2 821.3 L1186.7 842.4 L1186.3 863.5 L1185.8 884.5 L1185.3 905.6 L1184.9 884.7 L1184.6 863.7 L1184.2 842.8 L1183.8 821.8 L1183.5 800.9 L1183.0 823.5 L1182.5 846.0 L1182.0 868.6 L1181.5 891.2 L1181.0 912.0 L1180.6 895.0 L1180.3 876.2 L1179.9 857.4 L1179.6 838.6 L1179.2 819.8 L1178.9 836.4 L1178.5 852.9 L1178.1 869.4 L1177.7 885.9 L1177.3 902.4 L1176.8 887.3 L1176.3 872.2 L1175.8 857.1 L1175.3 842.0 L1174.8 826.9 L1174.1 843.5 L1173.4 860.2 L1172.6 876.9 L1171.9 893.6 L1171.1 910.2 L1170.6 891.2 L1170.2 872.1 L1169.7 853.1 L1169.3 834.0 L1168.8 815.0 L1168.2 833.4 L1167.7 851.9 L1167.2 870.3 L1166.6 888.8 L1166.1 907.2 L1165.3 885.0 L1164.6 862.7 L1163.8 840.5 L1163.1 818.2 L1162.3 796.0 L1161.7 816.3 L1161.1 836.7 L1160.5 857.1 L1159.9 877.5 L1159.3 897.9 L1158.9 883.6 L1158.5 869.2 L1158.0 854.9 L1157.6 840.6 L1157.2 826.3 L1156.6 841.6 L1156.1 856.9 L1155.5 872.2 L1155.0 887.5 L1154.4 902.8 L1154.1 884.0 L1153.8 865.3 L1153.5 846.6 L1153.2 827.9 L1152.9 809.2 L1152.5 827.2 L1152.1 845.2 L1151.7 863.2 L1151.3 881.2 L1150.9 899.3 L1150.5 879.3 L1150.1 859.4 L1149.7 839.5 L1149.4 819.6 L1149.0 799.7 L1148.6 821.7 L1148.2 843.7 L1147.8 865.7 L1147.4 887.7 L1147.0 909.7 L1146.6 890.7 L1146.2 871.6 L1145.8 852.5 L1145.3 833.4 L1144.9 814.3 L1144.4 832.5 L1143.8 850.7 L1143.3 868.8 L1142.7 887.0 L1142.2 905.2 L1141.5 883.4 L1140.8 861.6 L1140.1 839.8 L1139.4 818.0 L1138.8 796.2 L1138.2 817.7 L1137.6 839.2 L1137.0 860.7 L1136.4 882.2 L1135.9 903.7 L1135.4 882.2 L1134.9 860.6 L1134.4 839.0 L1134.0 817.5 L1133.5 795.9 L1133.1 816.2 L1132.7 836.4 L1132.3 856.6 L1131.9 876.8 L1131.5 897.1 L1131.1 880.2 L1130.8 863.4 L1130.4 846.6 L1130.1 829.8 L1129.7 813.0 Z" fill="url(#g2)"/><rect x="1127.2" y="378" width="2" height="539" fill="#1a1a1a"/><rect x="1268.4" y="378" width="137.7" height="539" rx="5" fill="#cba412" stroke="#151515" stroke-width="1.5"/><path d="M1269.4 531.5 L1269.9 529.1 L1270.4 526.7 L1271.0 524.3 L1271.5 521.9 L1272.0 519.5 L1272.7 521.4 L1273.3 523.4 L1273.9 525.3 L1274.5 527.3 L1275.2 529.2 L1275.7 527.9 L1276.1 526.6 L1276.6 525.3 L1277.1 524.0 L1277.6 522.7 L1277.9 524.8 L1278.3 526.9 L1278.6 529.0 L1279.0 531.1 L1279.3 533.2 L1279.8 531.3 L1280.3 529.5 L1280.8 527.7 L1281.3 525.8 L1281.8 524.0 L1282.2 525.3 L1282.5 526.7 L1282.9 528.0 L1283.2 529.4 L1283.6 530.7 L1284.0 529.0 L1284.3 527.2 L1284.6 525.5 L1285.0 523.7 L1285.3 522.0 L1285.8 524.0 L1286.4 526.0 L1286.9 528.0 L1287.4 530.1 L1287.9 532.1 L1288.5 529.4 L1289.0 526.7 L1289.6 524.0 L1290.1 521.3 L1290.7 518.6 L1291.1 521.4 L1291.4 524.3 L1291.8 527.1 L1292.1 530.0 L1292.5 532.9 L1293.1 529.9 L1293.8 527.0 L1294.4 524.1 L1295.1 521.2 L1295.7 518.3 L1296.3 520.6 L1296.9 522.9 L1297.4 525.3 L1298.0 527.6 L1298.6 529.9 L1299.0 527.6 L1299.4 525.3 L1299.8 523.1 L1300.2 520.8 L1300.6 518.5 L1301.1 520.6 L1301.7 522.7 L1302.2 524.8 L1302.8 526.9 L1303.3 529.0 L1303.7 527.1 L1304.1 525.1 L1304.5 523.1 L1304.9 521.2 L1305.3 519.2 L1305.9 521.4 L1306.5 523.6 L1307.1 525.8 L1307.8 528.0 L1308.4 530.2 L1309.1 527.8 L1309.9 525.4 L1310.6 523.0 L1311.3 520.6 L1312.1 518.2 L1312.5 520.6 L1312.9 523.0 L1313.3 525.5 L1313.7 527.9 L1314.1 530.3 L1314.6 528.5 L1315.0 526.8 L1315.5 525.0 L1315.9 523.2 L1316.4 521.5 L1316.8 523.2 L1317.3 525.0 L1317.7 526.7 L1318.1 528.5 L1318.5 530.2 L1319.2 528.4 L1319.8 526.7 L1320.4 524.9 L1321.0 523.2 L1321.6 521.4 L1322.0 523.3 L1322.4 525.3 L1322.8 527.2 L1323.2 529.1 L1323.6 531.0 L1324.3 528.5 L1325.0 526.0 L1325.7 523.5 L1326.4 521.0 L1327.1 518.5 L1327.6 520.9 L1328.1 523.3 L1328.6 525.7 L1329.1 528.1 L1329.6 530.5 L1330.0 529.0 L1330.3 527.5 L1330.6 526.0 L1331.0 524.5 L1331.3 523.0 L1331.7 524.9 L1332.1 526.9 L1332.5 528.8 L1332.9 530.7 L1333.2 532.7 L1333.5 530.5 L1333.8 528.3 L1334.1 526.1 L1334.4 523.8 L1334.6 521.6 L1335.1 523.3 L1335.5 525.0 L1336.0 526.7 L1336.4 528.4 L1336.9 530.1 L1337.0 524.7 L1337.0 519.3 L1337.1 513.8 L1337.2 508.4 L1337.2 503.0 L1338.3 509.2 L1339.4 515.4 L1340.5 521.6 L1341.6 527.7 L1342.6 533.9 L1342.9 530.9 L1343.2 527.9 L1343.5 524.9 L1343.8 521.9 L1344.0 518.9 L1344.5 521.6 L1345.0 524.3 L1345.5 527.0 L1346.0 529.7 L1346.5 532.4 L1347.0 530.1 L1347.5 527.8 L1348.0 525.5 L1348.5 523.2 L1349.1 520.9 L1349.6 522.7 L1350.1 524.4 L1350.7 526.2 L1351.2 528.0 L1351.8 529.7 L1352.2 527.9 L1352.6 526.1 L1352.9 524.2 L1353.3 522.4 L1353.7 520.6 L1354.4 522.9 L1355.0 525.2 L1355.6 527.6 L1356.3 529.9 L1356.9 532.2 L1357.5 530.4 L1358.0 528.7 L1358.5 526.9 L1359.0 525.1 L1359.5 523.3 L1360.2 524.5 L1360.9 525.7 L1361.6 527.0 L1362.3 528.2 L1363.0 529.4 L1363.3 527.4 L1363.6 525.4 L1364.0 523.4 L1364.3 521.4 L1364.7 519.4 L1365.2 521.4 L1365.8 523.4 L1366.3 525.4 L1366.9 527.4 L1367.4 529.4 L1367.8 527.3 L1368.2 525.2 L1368.6 523.1 L1368.9 521.0 L1369.3 518.9 L1369.9 521.6 L1370.4 524.3 L1371.0 527.0 L1371.6 529.6 L1372.1 532.3 L1372.4 529.6 L1372.7 526.9 L1373.0 524.2 L1373.3 521.5 L1373.6 518.8 L1374.1 521.6 L1374.6 524.4 L1375.1 527.2 L1375.6 530.0 L1376.1 532.8 L1376.4 530.3 L1376.8 527.7 L1377.1 525.2 L1377.4 522.6 L1377.8 520.1 L1378.2 521.9 L1378.6 523.7 L1378.9 525.4 L1379.3 527.2 L1379.7 529.0 L1380.1 527.8 L1380.6 526.7 L1381.0 525.5 L1381.4 524.3 L1381.8 523.1 L1382.2 524.4 L1382.5 525.7 L1382.9 527.1 L1383.3 528.4 L1383.6 529.7 L1384.1 527.6 L1384.6 525.5 L1385.2 523.4 L1385.7 521.2 L1386.2 519.1 L1386.6 521.6 L1387.0 524.0 L1387.4 526.4 L1387.9 528.9 L1388.3 531.3 L1388.6 529.8 L1388.9 528.3 L1389.3 526.8 L1389.6 525.3 L1389.9 523.8 L1390.5 525.2 L1391.1 526.5 L1391.7 527.9 L1392.3 529.2 L1392.9 530.5 L1393.5 529.4 L1394.0 528.2 L1394.6 527.0 L1395.2 525.8 L1395.7 524.7 L1396.3 525.8 L1396.8 526.9 L1397.3 528.3 L1397.8 530.0 L1398.3 531.6 L1399.0 530.8 L1399.7 530.3 L1400.4 530.2 L1401.1 530.4 L1401.8 531.1 L1402.2 532.9 L1402.7 534.5 L1403.1 535.9 L1403.6 537.0 L1404.0 537.9 L1404.2 538.2 L1404.4 538.5 L1404.7 538.7 L1404.9 538.8 L1405.1 538.8 L1405.1 539.2 L1404.8 539.2 L1404.5 539.5 L1404.1 539.8 L1403.8 540.3 L1403.5 540.9 L1403.2 541.5 L1402.9 542.2 L1402.6 543.0 L1402.2 543.8 L1401.9 544.7 L1401.4 545.2 L1400.8 545.5 L1400.3 545.6 L1399.7 545.5 L1399.2 545.3 L1398.8 546.6 L1398.5 547.9 L1398.2 549.3 L1397.9 550.8 L1397.6 552.5 L1397.1 551.9 L1396.6 550.6 L1396.2 549.3 L1395.7 547.9 L1395.2 546.6 L1394.6 549.2 L1394.0 551.8 L1393.4 554.4 L1392.8 557.1 L1392.2 559.7 L1391.8 557.1 L1391.4 554.4 L1391.0 551.8 L1390.6 549.2 L1390.2 546.6 L1389.8 548.3 L1389.3 550.0 L1388.8 551.7 L1388.4 553.4 L1387.9 555.1 L1387.5 553.8 L1387.0 552.5 L1386.6 551.2 L1386.1 549.9 L1385.6 548.6 L1385.3 550.0 L1384.9 551.4 L1384.5 552.8 L1384.1 554.2 L1383.7 555.6 L1383.3 553.9 L1382.9 552.2 L1382.5 550.5 L1382.1 548.8 L1381.7 547.1 L1381.2 548.6 L1380.7 550.0 L1380.3 551.4 L1379.8 552.9 L1379.3 554.3 L1378.6 553.0 L1378.0 551.7 L1377.3 550.4 L1376.6 549.1 L1375.9 547.8 L1375.5 550.0 L1375.0 552.1 L1374.6 554.2 L1374.2 556.4 L1373.7 558.5 L1373.3 556.0 L1372.8 553.5 L1372.4 551.0 L1371.9 548.5 L1371.5 546.0 L1371.0 548.1 L1370.6 550.2 L1370.2 552.3 L1369.7 554.5 L1369.3 556.6 L1369.0 554.8 L1368.6 553.0 L1368.3 551.2 L1368.0 549.4 L1367.6 547.6 L1366.9 549.7 L1366.2 551.7 L1365.4 553.7 L1364.7 555.7 L1364.0 557.7 L1363.6 555.8 L1363.2 553.9 L1362.8 552.0 L1362.4 550.1 L1362.0 548.2 L1361.5 550.5 L1361.1 552.9 L1360.6 555.2 L1360.1 557.5 L1359.7 559.9 L1359.3 556.8 L1359.0 553.8 L1358.7 550.7 L1358.4 547.7 L1358.1 544.7 L1357.7 546.5 L1357.4 548.4 L1357.1 550.3 L1356.7 552.2 L1356.4 554.1 L1355.9 552.3 L1355.3 550.6 L1354.8 548.8 L1354.3 547.1 L1353.7 545.4 L1353.3 547.5 L1352.8 549.6 L1352.4 551.7 L1352.0 553.7 L1351.5 555.8 L1351.1 553.7 L1350.7 551.6 L1350.4 549.5 L1350.0 547.4 L1349.6 545.3 L1349.3 547.5 L1348.9 549.7 L1348.6 551.9 L1348.2 554.1 L1347.9 556.3 L1347.3 554.4 L1346.7 552.5 L1346.1 550.7 L1345.5 548.8 L1344.9 546.9 L1344.5 549.1 L1344.1 551.4 L1343.6 553.6 L1343.2 555.8 L1342.8 558.1 L1342.1 555.8 L1341.4 553.4 L1340.8 551.1 L1340.1 548.8 L1339.5 546.5 L1339.0 552.2 L1338.6 557.9 L1338.1 563.6 L1337.7 569.3 L1337.2 575.0 L1336.6 569.0 L1336.0 563.1 L1335.3 557.1 L1334.7 551.2 L1334.0 545.2 L1333.5 547.2 L1332.9 549.3 L1332.3 551.3 L1331.7 553.3 L1331.1 555.4 L1330.7 553.9 L1330.4 552.4 L1330.0 551.0 L1329.7 549.5 L1329.3 548.0 L1328.6 549.6 L1328.0 551.2 L1327.3 552.8 L1326.7 554.4 L1326.0 556.0 L1325.5 554.3 L1325.0 552.6 L1324.4 551.0 L1323.9 549.3 L1323.3 547.6 L1322.7 549.4 L1322.0 551.2 L1321.4 553.0 L1320.8 554.7 L1320.2 556.5 L1319.7 554.2 L1319.3 551.9 L1318.9 549.6 L1318.5 547.3 L1318.1 545.0 L1317.6 547.9 L1317.1 550.9 L1316.6 553.8 L1316.0 556.7 L1315.5 559.6 L1315.2 557.5 L1314.9 555.3 L1314.6 553.2 L1314.3 551.1 L1314.0 548.9 L1313.6 551.1 L1313.1 553.3 L1312.7 555.6 L1312.3 557.8 L1311.9 560.0 L1311.4 557.2 L1310.9 554.3 L1310.4 551.5 L1309.8 548.7 L1309.3 545.8 L1308.9 548.0 L1308.6 550.2 L1308.2 552.4 L1307.8 554.6 L1307.5 556.8 L1306.8 554.7 L1306.1 552.7 L1305.4 550.7 L1304.7 548.7 L1304.1 546.7 L1303.4 548.9 L1302.8 551.1 L1302.2 553.3 L1301.5 555.5 L1300.9 557.7 L1300.4 555.6 L1299.9 553.4 L1299.4 551.3 L1298.9 549.2 L1298.4 547.0 L1297.9 548.4 L1297.5 549.7 L1297.0 551.0 L1296.6 552.4 L1296.1 553.7 L1295.8 552.4 L1295.4 551.1 L1295.0 549.8 L1294.7 548.5 L1294.3 547.1 L1293.5 548.7 L1292.8 550.3 L1292.0 551.9 L1291.2 553.5 L1290.4 555.1 L1290.0 553.2 L1289.6 551.3 L1289.2 549.4 L1288.7 547.5 L1288.3 545.6 L1287.7 548.4 L1287.1 551.3 L1286.5 554.1 L1285.9 556.9 L1285.3 559.7 L1284.8 557.6 L1284.4 555.4 L1284.0 553.2 L1283.5 551.0 L1283.1 548.9 L1282.8 550.0 L1282.5 551.2 L1282.2 552.3 L1281.9 553.5 L1281.6 554.6 L1281.2 553.0 L1280.8 551.4 L1280.4 549.8 L1279.9 548.2 L1279.5 546.6 L1278.9 549.2 L1278.2 551.9 L1277.6 554.5 L1276.9 557.2 L1276.3 559.8 L1275.8 557.2 L1275.3 554.5 L1274.9 551.8 L1274.4 549.2 L1273.9 546.5 L1273.5 548.5 L1273.1 550.6 L1272.7 552.6 L1272.4 554.7 L1272.0 556.8 L1271.4 554.7 L1270.9 552.7 L1270.4 550.6 L1269.9 548.6 L1269.4 546.5 Z" fill="#fdeeae"/><path d="M1269.4 751.0 L1269.8 741.8 L1270.2 732.7 L1270.7 723.5 L1271.1 714.3 L1271.5 705.2 L1271.9 715.6 L1272.3 726.1 L1272.7 736.6 L1273.1 747.0 L1273.4 757.5 L1273.9 747.1 L1274.4 736.6 L1274.9 726.2 L1275.3 715.8 L1275.8 705.4 L1276.1 716.4 L1276.5 727.4 L1276.8 738.4 L1277.1 749.4 L1277.5 760.5 L1278.0 749.2 L1278.6 737.9 L1279.2 726.7 L1279.8 715.4 L1280.4 704.2 L1280.8 711.6 L1281.3 719.0 L1281.7 726.5 L1282.2 733.9 L1282.7 741.3 L1283.4 733.1 L1284.1 724.9 L1284.8 716.7 L1285.5 708.5 L1286.2 700.4 L1286.8 710.5 L1287.3 720.7 L1287.9 730.9 L1288.5 741.0 L1289.0 751.2 L1289.6 743.0 L1290.1 734.8 L1290.6 726.6 L1291.2 718.4 L1291.7 710.3 L1292.0 720.5 L1292.3 730.8 L1292.7 741.0 L1293.0 751.3 L1293.3 761.6 L1293.7 749.5 L1294.1 737.5 L1294.5 725.4 L1294.9 713.3 L1295.3 701.3 L1295.7 712.1 L1296.1 722.9 L1296.4 733.7 L1296.8 744.6 L1297.2 755.4 L1298.0 746.4 L1298.8 737.4 L1299.5 728.5 L1300.3 719.5 L1301.1 710.5 L1301.6 718.6 L1302.1 726.7 L1302.6 734.9 L1303.1 743.0 L1303.6 751.1 L1304.1 741.8 L1304.7 732.4 L1305.3 723.1 L1305.9 713.7 L1306.4 704.4 L1306.9 716.3 L1307.4 728.3 L1307.9 740.2 L1308.4 752.1 L1308.8 764.0 L1309.3 752.6 L1309.7 741.3 L1310.2 729.9 L1310.6 718.5 L1311.1 707.1 L1311.7 715.7 L1312.4 724.3 L1313.1 732.9 L1313.8 741.5 L1314.4 750.1 L1314.8 741.3 L1315.3 732.5 L1315.7 723.7 L1316.1 714.8 L1316.5 706.0 L1316.9 716.6 L1317.2 727.2 L1317.6 737.7 L1317.9 748.3 L1318.3 758.9 L1318.7 747.3 L1319.2 735.8 L1319.6 724.2 L1320.1 712.6 L1320.5 701.1 L1321.2 713.6 L1321.9 726.1 L1322.6 738.6 L1323.3 751.1 L1324.0 763.7 L1324.6 753.3 L1325.2 743.0 L1325.8 732.7 L1326.5 722.3 L1327.1 712.0 L1327.6 721.1 L1328.2 730.3 L1328.8 739.4 L1329.4 748.6 L1330.0 757.8 L1330.7 747.3 L1331.4 736.9 L1332.1 726.5 L1332.8 716.1 L1333.5 705.7 L1334.1 713.5 L1334.6 721.3 L1335.2 729.1 L1335.8 736.9 L1336.4 744.8 L1336.8 736.1 L1337.2 727.5 L1337.6 718.9 L1338.0 710.3 L1338.4 701.6 L1338.8 712.7 L1339.2 723.8 L1339.5 734.9 L1339.9 745.9 L1340.3 757.0 L1341.0 745.9 L1341.6 734.7 L1342.2 723.6 L1342.8 712.4 L1343.5 701.2 L1343.8 712.4 L1344.1 723.5 L1344.5 734.6 L1344.8 745.7 L1345.2 756.8 L1345.6 746.7 L1346.0 736.6 L1346.5 726.5 L1346.9 716.4 L1347.4 706.3 L1348.2 713.2 L1349.0 720.0 L1349.8 726.9 L1350.6 733.7 L1351.5 740.6 L1352.1 734.5 L1352.7 728.4 L1353.3 722.3 L1353.9 716.2 L1354.5 710.1 L1355.0 715.5 L1355.5 720.9 L1356.1 726.3 L1356.6 731.7 L1357.1 737.1 L1357.8 729.9 L1358.4 722.7 L1359.1 715.5 L1359.7 708.3 L1360.3 701.1 L1360.7 709.9 L1361.1 718.7 L1361.5 727.5 L1361.9 736.4 L1362.3 745.2 L1362.9 738.5 L1363.4 731.8 L1363.9 725.0 L1364.5 718.3 L1365.0 711.6 L1365.5 720.4 L1365.9 729.2 L1366.4 737.9 L1366.8 746.7 L1367.3 755.5 L1367.8 747.1 L1368.3 738.7 L1368.8 730.3 L1369.3 721.9 L1369.8 713.5 L1370.6 718.6 L1371.4 723.8 L1372.1 728.9 L1372.9 734.0 L1373.7 739.1 L1374.1 731.5 L1374.5 723.9 L1375.0 716.3 L1375.4 708.6 L1375.8 701.0 L1376.4 709.4 L1377.0 717.8 L1377.5 726.2 L1378.1 734.6 L1378.7 743.0 L1379.2 736.3 L1379.6 729.6 L1380.1 722.9 L1380.6 716.3 L1381.1 709.6 L1381.6 718.0 L1382.1 726.4 L1382.5 734.8 L1383.0 743.2 L1383.5 751.6 L1384.1 743.2 L1384.7 734.8 L1385.3 726.4 L1386.0 718.0 L1386.6 709.6 L1387.1 715.5 L1387.6 721.3 L1388.0 727.2 L1388.5 733.0 L1389.0 738.9 L1389.5 731.8 L1390.0 724.7 L1390.5 717.6 L1390.9 710.5 L1391.4 703.4 L1391.7 714.9 L1392.0 726.4 L1392.2 737.9 L1392.5 749.4 L1392.8 760.8 L1393.5 749.6 L1394.2 738.3 L1394.9 727.1 L1395.6 715.9 L1396.3 704.6 L1396.7 714.5 L1397.1 724.4 L1397.6 734.2 L1398.0 744.1 L1398.4 754.0 L1399.0 743.8 L1399.6 733.7 L1400.3 723.5 L1400.9 713.4 L1401.5 703.2 L1402.1 715.6 L1402.7 728.0 L1403.2 740.3 L1403.8 752.7 L1404.3 765.1 L1404.5 765.2 L1404.6 765.3 L1404.8 765.3 L1404.9 765.4 L1405.1 765.5 L1405.1 795.0 L1404.7 802.0 L1404.4 809.0 L1404.0 816.0 L1403.6 823.0 L1403.3 830.0 L1402.8 842.6 L1402.4 855.2 L1402.0 867.8 L1401.5 880.4 L1401.1 893.0 L1400.4 875.9 L1399.7 858.7 L1399.0 841.6 L1398.3 824.4 L1397.7 807.3 L1397.3 827.7 L1396.9 848.1 L1396.5 868.6 L1396.2 889.0 L1395.8 909.4 L1395.5 886.2 L1395.1 863.0 L1394.8 839.8 L1394.4 816.6 L1394.1 793.4 L1393.6 814.7 L1393.1 835.9 L1392.6 857.2 L1392.1 878.4 L1391.6 899.6 L1391.1 880.9 L1390.7 862.2 L1390.3 843.5 L1389.8 824.7 L1389.4 806.0 L1389.0 823.8 L1388.7 841.5 L1388.3 859.2 L1388.0 877.0 L1387.6 894.7 L1387.0 880.1 L1386.4 865.5 L1385.8 850.9 L1385.2 836.3 L1384.6 821.7 L1384.0 836.8 L1383.3 851.8 L1382.7 866.9 L1382.1 882.0 L1381.4 897.1 L1381.1 875.8 L1380.7 854.5 L1380.4 833.2 L1380.1 811.9 L1379.7 790.6 L1379.3 814.0 L1378.8 837.4 L1378.4 860.8 L1377.9 884.1 L1377.5 907.5 L1377.0 890.2 L1376.5 872.9 L1376.0 855.5 L1375.5 838.2 L1375.0 820.9 L1374.2 838.4 L1373.4 856.0 L1372.7 873.5 L1371.9 891.1 L1371.1 908.6 L1370.7 891.5 L1370.2 874.4 L1369.8 857.3 L1369.4 840.2 L1368.9 823.1 L1368.3 838.8 L1367.6 854.4 L1367.0 870.1 L1366.3 885.7 L1365.7 901.3 L1365.0 885.3 L1364.4 869.2 L1363.7 853.1 L1363.1 837.1 L1362.4 821.0 L1361.9 836.2 L1361.4 851.3 L1360.9 866.4 L1360.3 881.6 L1359.8 896.7 L1359.4 876.1 L1359.1 855.6 L1358.7 835.0 L1358.3 814.4 L1358.0 793.8 L1357.3 816.0 L1356.5 838.2 L1355.8 860.3 L1355.1 882.5 L1354.4 904.7 L1354.0 884.5 L1353.6 864.3 L1353.1 844.2 L1352.7 824.0 L1352.3 803.8 L1351.9 822.6 L1351.5 841.3 L1351.1 860.0 L1350.6 878.8 L1350.2 897.5 L1349.8 880.8 L1349.3 864.1 L1348.8 847.4 L1348.3 830.7 L1347.9 814.0 L1347.4 832.8 L1346.8 851.6 L1346.3 870.4 L1345.8 889.2 L1345.3 908.0 L1345.0 884.6 L1344.7 861.2 L1344.4 837.8 L1344.1 814.4 L1343.8 790.9 L1343.4 814.6 L1343.0 838.2 L1342.6 861.9 L1342.2 885.5 L1341.8 909.2 L1341.3 886.3 L1340.7 863.4 L1340.2 840.5 L1339.6 817.6 L1339.0 794.7 L1338.4 815.3 L1337.8 835.9 L1337.2 856.5 L1336.6 877.1 L1335.9 897.6 L1335.3 876.9 L1334.6 856.1 L1333.9 835.3 L1333.3 814.5 L1332.6 793.8 L1331.9 813.6 L1331.3 833.4 L1330.6 853.2 L1330.0 873.0 L1329.3 892.8 L1328.9 872.3 L1328.5 851.9 L1328.1 831.4 L1327.6 810.9 L1327.2 790.4 L1326.8 813.6 L1326.3 836.8 L1325.9 860.0 L1325.5 883.1 L1325.0 906.3 L1324.5 889.5 L1324.0 872.7 L1323.6 855.8 L1323.1 839.0 L1322.6 822.1 L1322.3 839.7 L1322.0 857.3 L1321.8 874.9 L1321.5 892.4 L1321.2 910.0 L1320.8 888.3 L1320.3 866.7 L1319.8 845.0 L1319.4 823.4 L1318.9 801.7 L1318.1 821.7 L1317.3 841.7 L1316.5 861.6 L1315.7 881.6 L1314.9 901.6 L1314.4 881.4 L1313.9 861.3 L1313.4 841.1 L1313.0 820.9 L1312.5 800.7 L1312.2 821.4 L1311.8 842.1 L1311.5 862.8 L1311.2 883.5 L1310.9 904.2 L1310.4 886.4 L1309.9 868.6 L1309.3 850.8 L1308.8 832.9 L1308.3 815.1 L1307.9 832.6 L1307.4 850.0 L1307.0 867.5 L1306.6 884.9 L1306.2 902.4 L1305.6 885.6 L1305.1 868.9 L1304.6 852.1 L1304.1 835.4 L1303.5 818.6 L1302.9 835.7 L1302.2 852.9 L1301.5 870.0 L1300.8 887.1 L1300.1 904.3 L1299.5 885.3 L1298.9 866.2 L1298.3 847.2 L1297.7 828.2 L1297.1 809.2 L1296.6 827.7 L1296.2 846.2 L1295.8 864.8 L1295.3 883.3 L1294.9 901.8 L1294.4 885.1 L1294.0 868.4 L1293.5 851.6 L1293.1 834.9 L1292.6 818.2 L1292.1 835.8 L1291.6 853.3 L1291.1 870.9 L1290.5 888.5 L1290.0 906.1 L1289.7 887.2 L1289.3 868.4 L1289.0 849.5 L1288.6 830.6 L1288.3 811.8 L1287.7 829.7 L1287.1 847.6 L1286.5 865.6 L1285.9 883.5 L1285.4 901.5 L1285.0 880.8 L1284.7 860.1 L1284.4 839.4 L1284.1 818.7 L1283.8 798.0 L1283.3 817.6 L1282.9 837.2 L1282.4 856.9 L1282.0 876.5 L1281.5 896.1 L1281.0 875.7 L1280.5 855.3 L1280.0 834.8 L1279.6 814.4 L1279.1 794.0 L1278.5 816.0 L1277.9 838.0 L1277.4 860.0 L1276.8 882.0 L1276.2 904.0 L1275.6 887.9 L1275.0 871.7 L1274.3 855.6 L1273.7 839.4 L1273.0 823.3 L1272.8 839.6 L1272.5 856.0 L1272.2 872.3 L1272.0 888.7 L1271.7 905.0 L1271.3 886.0 L1270.8 867.0 L1270.3 848.0 L1269.9 829.0 L1269.4 810.0 Z" fill="url(#g2)"/><rect x="1266.9" y="378" width="2" height="539" fill="#1a1a1a"/><rect x="1408.1" y="378" width="137.7" height="539" rx="5" fill="#cba412" stroke="#151515" stroke-width="1.5"/><path d="M1409.1 527.5 L1409.8 525.0 L1410.5 522.5 L1411.2 519.9 L1411.9 517.4 L1412.6 514.9 L1413.0 516.8 L1413.4 518.7 L1413.9 520.6 L1414.3 522.5 L1414.7 524.4 L1415.1 521.4 L1415.6 518.4 L1416.0 515.4 L1416.5 512.4 L1416.9 509.4 L1417.7 512.6 L1418.4 515.8 L1419.2 519.0 L1419.9 522.2 L1420.7 525.4 L1421.2 522.8 L1421.7 520.2 L1422.2 517.6 L1422.8 515.0 L1423.3 512.5 L1423.6 515.5 L1423.9 518.6 L1424.2 521.7 L1424.4 524.8 L1424.7 527.8 L1425.3 524.2 L1426.0 520.6 L1426.6 517.0 L1427.2 513.4 L1427.8 509.8 L1428.3 513.6 L1428.7 517.5 L1429.2 521.3 L1429.7 525.2 L1430.2 529.1 L1430.6 525.9 L1431.0 522.7 L1431.4 519.5 L1431.7 516.3 L1432.1 513.1 L1432.7 516.0 L1433.3 518.9 L1433.9 521.8 L1434.5 524.7 L1435.2 527.6 L1435.5 523.9 L1435.8 520.3 L1436.2 516.6 L1436.5 512.9 L1436.8 509.3 L1437.3 513.4 L1437.7 517.5 L1438.1 521.6 L1438.5 525.7 L1438.9 529.7 L1438.9 523.2 L1438.9 516.6 L1438.9 510.1 L1438.9 503.5 L1438.9 497.0 L1439.9 503.7 L1440.8 510.3 L1441.8 517.0 L1442.7 523.6 L1443.7 530.3 L1444.1 526.6 L1444.6 522.9 L1445.1 519.3 L1445.5 515.6 L1446.0 511.9 L1446.3 514.9 L1446.7 518.0 L1447.0 521.0 L1447.4 524.1 L1447.7 527.1 L1448.3 524.1 L1448.8 521.1 L1449.3 518.1 L1449.8 515.0 L1450.4 512.0 L1450.9 515.6 L1451.4 519.2 L1452.0 522.8 L1452.5 526.3 L1453.0 529.9 L1453.4 526.6 L1453.7 523.3 L1454.0 519.9 L1454.3 516.6 L1454.7 513.3 L1455.1 516.4 L1455.6 519.5 L1456.0 522.6 L1456.5 525.7 L1457.0 528.8 L1457.5 525.8 L1458.0 522.9 L1458.5 519.9 L1459.0 517.0 L1459.5 514.1 L1460.3 517.1 L1461.0 520.1 L1461.7 523.1 L1462.4 526.1 L1463.2 529.1 L1463.6 525.0 L1464.1 520.8 L1464.5 516.6 L1465.0 512.5 L1465.5 508.3 L1465.8 511.8 L1466.1 515.3 L1466.4 518.7 L1466.7 522.2 L1467.0 525.6 L1467.7 522.9 L1468.4 520.1 L1469.0 517.4 L1469.7 514.6 L1470.3 511.8 L1470.9 515.1 L1471.6 518.4 L1472.2 521.7 L1472.8 525.0 L1473.4 528.3 L1473.9 524.9 L1474.3 521.5 L1474.8 518.1 L1475.2 514.7 L1475.7 511.3 L1476.3 514.7 L1477.0 518.1 L1477.6 521.5 L1478.2 524.9 L1478.9 528.3 L1479.5 524.7 L1480.2 521.1 L1480.9 517.5 L1481.6 514.0 L1482.2 510.4 L1482.7 514.3 L1483.1 518.2 L1483.5 522.2 L1483.9 526.1 L1484.4 530.0 L1485.0 526.3 L1485.6 522.5 L1486.2 518.8 L1486.8 515.0 L1487.4 511.2 L1487.8 515.1 L1488.3 519.0 L1488.7 522.8 L1489.2 526.7 L1489.6 530.5 L1490.0 526.4 L1490.4 522.3 L1490.8 518.2 L1491.2 514.1 L1491.6 510.0 L1492.0 513.5 L1492.3 517.0 L1492.7 520.5 L1493.1 524.0 L1493.4 527.5 L1494.0 523.9 L1494.6 520.2 L1495.2 516.6 L1495.8 512.9 L1496.4 509.2 L1496.9 513.3 L1497.5 517.3 L1498.0 521.4 L1498.6 525.4 L1499.1 529.5 L1499.8 526.4 L1500.5 523.4 L1501.2 520.3 L1501.9 517.3 L1502.6 514.2 L1503.1 517.2 L1503.6 520.3 L1504.1 523.3 L1504.6 526.4 L1505.1 529.4 L1505.6 525.6 L1506.1 521.9 L1506.7 518.1 L1507.2 514.3 L1507.7 510.5 L1508.0 514.5 L1508.4 518.5 L1508.8 522.5 L1509.1 526.5 L1509.5 530.5 L1510.0 526.2 L1510.5 521.9 L1511.0 517.6 L1511.5 513.3 L1512.0 509.0 L1512.7 513.0 L1513.3 517.0 L1513.9 521.0 L1514.6 525.0 L1515.2 529.1 L1515.5 525.6 L1515.9 522.1 L1516.2 518.7 L1516.6 515.2 L1516.9 511.8 L1517.3 515.0 L1517.7 518.3 L1518.2 521.5 L1518.6 524.7 L1519.0 528.0 L1519.4 525.0 L1519.8 522.0 L1520.2 519.0 L1520.6 516.1 L1521.0 513.1 L1521.6 516.6 L1522.2 520.1 L1522.9 523.7 L1523.5 527.2 L1524.1 530.7 L1524.8 527.2 L1525.4 523.6 L1526.0 520.1 L1526.7 516.5 L1527.3 513.0 L1528.0 516.4 L1528.6 519.7 L1529.3 523.1 L1529.9 526.5 L1530.6 529.8 L1531.0 526.6 L1531.3 523.5 L1531.7 520.3 L1532.1 517.1 L1532.4 513.9 L1533.1 516.4 L1533.8 518.9 L1534.5 521.4 L1535.2 523.8 L1535.9 526.3 L1536.5 522.9 L1537.0 519.4 L1537.6 516.0 L1538.2 512.5 L1538.7 509.1 L1539.2 513.0 L1539.6 516.9 L1540.1 520.9 L1540.5 524.8 L1541.0 528.7 L1541.7 524.8 L1542.3 520.9 L1543.0 517.0 L1543.7 513.1 L1544.4 509.2 L1544.5 514.0 L1544.5 518.8 L1544.6 523.6 L1544.7 528.4 L1544.8 533.2 L1544.8 544.8 L1544.7 548.7 L1544.7 552.6 L1544.7 556.6 L1544.6 560.5 L1544.6 564.5 L1544.0 562.1 L1543.4 559.8 L1542.8 557.4 L1542.2 555.1 L1541.6 552.8 L1541.0 554.9 L1540.4 557.0 L1539.8 559.1 L1539.2 561.2 L1538.6 563.3 L1538.2 561.2 L1537.8 559.1 L1537.4 557.0 L1537.0 554.8 L1536.6 552.7 L1536.3 555.1 L1535.9 557.4 L1535.5 559.8 L1535.2 562.1 L1534.8 564.5 L1534.4 561.1 L1533.9 557.8 L1533.5 554.4 L1533.1 551.1 L1532.6 547.7 L1532.3 551.0 L1531.9 554.2 L1531.6 557.4 L1531.2 560.6 L1530.9 563.8 L1530.5 561.4 L1530.2 558.9 L1529.8 556.5 L1529.4 554.0 L1529.1 551.5 L1528.7 555.1 L1528.4 558.6 L1528.0 562.2 L1527.6 565.7 L1527.3 569.3 L1526.9 565.3 L1526.5 561.4 L1526.1 557.5 L1525.7 553.5 L1525.3 549.6 L1525.0 552.6 L1524.8 555.7 L1524.5 558.7 L1524.2 561.7 L1523.9 564.8 L1523.4 562.6 L1522.9 560.4 L1522.4 558.2 L1521.9 556.1 L1521.4 553.9 L1520.9 556.2 L1520.4 558.4 L1520.0 560.7 L1519.5 563.0 L1519.0 565.3 L1518.6 562.2 L1518.3 559.1 L1517.9 556.0 L1517.5 552.9 L1517.2 549.8 L1516.6 553.2 L1516.1 556.5 L1515.5 559.8 L1515.0 563.2 L1514.4 566.5 L1514.1 562.9 L1513.7 559.2 L1513.3 555.6 L1513.0 552.0 L1512.6 548.4 L1512.3 552.2 L1512.0 556.0 L1511.7 559.8 L1511.4 563.6 L1511.0 567.5 L1510.5 564.3 L1510.0 561.1 L1509.4 558.0 L1508.9 554.8 L1508.4 551.7 L1507.9 554.3 L1507.4 557.0 L1506.9 559.7 L1506.4 562.3 L1505.9 565.0 L1505.5 561.5 L1505.0 557.9 L1504.5 554.4 L1504.1 550.8 L1503.6 547.3 L1503.2 551.3 L1502.8 555.4 L1502.4 559.4 L1502.0 563.4 L1501.6 567.5 L1501.0 564.2 L1500.5 560.9 L1500.0 557.6 L1499.4 554.3 L1498.9 551.0 L1498.4 554.4 L1497.9 557.8 L1497.3 561.2 L1496.8 564.6 L1496.3 568.0 L1495.7 563.8 L1495.0 559.6 L1494.4 555.4 L1493.8 551.2 L1493.1 547.0 L1492.8 551.1 L1492.5 555.1 L1492.2 559.1 L1491.9 563.2 L1491.5 567.2 L1491.0 564.2 L1490.4 561.3 L1489.9 558.3 L1489.3 555.4 L1488.8 552.4 L1488.2 555.7 L1487.5 559.0 L1486.9 562.3 L1486.3 565.6 L1485.6 568.9 L1485.1 565.2 L1484.6 561.4 L1484.1 557.7 L1483.6 553.9 L1483.1 550.1 L1482.6 553.5 L1482.1 556.8 L1481.6 560.1 L1481.1 563.5 L1480.6 566.8 L1480.3 562.9 L1480.1 559.0 L1479.8 555.2 L1479.5 551.3 L1479.2 547.4 L1478.9 551.9 L1478.5 556.4 L1478.1 560.9 L1477.8 565.4 L1477.4 569.9 L1476.7 565.6 L1476.1 561.2 L1475.4 556.9 L1474.8 552.5 L1474.1 548.2 L1473.6 551.5 L1473.2 554.7 L1472.7 558.0 L1472.2 561.3 L1471.7 564.5 L1471.1 561.5 L1470.5 558.4 L1469.9 555.4 L1469.3 552.3 L1468.6 549.2 L1468.2 552.1 L1467.7 555.1 L1467.2 558.0 L1466.7 560.9 L1466.2 563.8 L1465.9 561.8 L1465.6 559.8 L1465.4 557.9 L1465.1 555.9 L1464.8 554.0 L1464.2 557.0 L1463.7 560.0 L1463.1 563.0 L1462.6 566.0 L1462.0 569.1 L1461.6 565.8 L1461.3 562.5 L1460.9 559.2 L1460.5 556.0 L1460.1 552.7 L1459.8 555.7 L1459.5 558.7 L1459.1 561.7 L1458.8 564.7 L1458.5 567.7 L1458.0 563.7 L1457.5 559.6 L1457.1 555.6 L1456.6 551.5 L1456.2 547.5 L1455.4 550.7 L1454.6 553.9 L1453.8 557.1 L1453.0 560.3 L1452.1 563.5 L1451.7 561.3 L1451.2 559.2 L1450.7 557.0 L1450.2 554.9 L1449.7 552.7 L1449.2 555.6 L1448.6 558.4 L1448.1 561.2 L1447.6 564.1 L1447.1 566.9 L1446.8 563.6 L1446.5 560.4 L1446.2 557.1 L1445.9 553.8 L1445.6 550.6 L1445.1 554.0 L1444.5 557.4 L1444.0 560.8 L1443.4 564.2 L1442.8 567.7 L1442.1 563.7 L1441.4 559.7 L1440.7 555.7 L1440.0 551.7 L1439.3 547.7 L1439.2 554.4 L1439.1 561.0 L1439.1 567.7 L1439.0 574.3 L1438.9 581.0 L1437.7 574.6 L1436.5 568.2 L1435.4 561.9 L1434.2 555.5 L1433.0 549.1 L1432.5 552.7 L1432.1 556.2 L1431.7 559.8 L1431.3 563.3 L1430.8 566.9 L1430.3 563.3 L1429.8 559.8 L1429.3 556.2 L1428.7 552.7 L1428.2 549.1 L1427.8 552.8 L1427.4 556.5 L1427.0 560.2 L1426.7 563.8 L1426.3 567.5 L1425.8 564.4 L1425.3 561.4 L1424.8 558.3 L1424.4 555.3 L1423.9 552.2 L1423.4 554.6 L1422.9 557.1 L1422.5 559.5 L1422.0 561.9 L1421.6 564.4 L1421.0 561.2 L1420.5 558.1 L1419.9 555.0 L1419.3 551.9 L1418.8 548.8 L1418.3 551.9 L1417.9 555.0 L1417.5 558.1 L1417.0 561.2 L1416.6 564.3 L1415.8 562.0 L1415.0 559.7 L1414.2 557.5 L1413.4 555.2 L1412.6 552.9 L1412.2 555.9 L1411.8 559.0 L1411.4 562.0 L1411.0 565.1 L1410.6 568.2 L1410.3 564.6 L1410.0 561.1 L1409.7 557.6 L1409.4 554.0 L1409.1 550.5 Z" fill="#fdeeae"/><path d="M1409.1 750.5 L1409.6 742.1 L1410.1 733.7 L1410.5 725.4 L1411.0 717.0 L1411.5 708.6 L1412.0 715.2 L1412.5 721.9 L1412.9 728.5 L1413.4 735.2 L1413.9 741.8 L1414.3 734.5 L1414.8 727.2 L1415.3 719.8 L1415.7 712.5 L1416.2 705.2 L1416.6 713.1 L1416.9 721.0 L1417.3 728.9 L1417.6 736.8 L1418.0 744.8 L1418.4 734.8 L1418.8 724.9 L1419.3 714.9 L1419.7 705.0 L1420.1 695.0 L1420.8 709.0 L1421.6 723.1 L1422.3 737.1 L1423.1 751.1 L1423.8 765.1 L1424.3 751.4 L1424.8 737.6 L1425.2 723.9 L1425.7 710.2 L1426.1 696.4 L1426.9 706.7 L1427.7 717.0 L1428.5 727.3 L1429.3 737.7 L1430.0 748.0 L1430.6 737.3 L1431.2 726.6 L1431.8 715.9 L1432.4 705.2 L1432.9 694.5 L1433.4 706.2 L1433.9 718.0 L1434.4 729.8 L1434.9 741.5 L1435.3 753.3 L1435.8 744.1 L1436.3 734.9 L1436.7 725.7 L1437.2 716.4 L1437.6 707.2 L1438.4 715.2 L1439.2 723.2 L1440.0 731.2 L1440.8 739.2 L1441.6 747.1 L1442.2 737.4 L1442.9 727.7 L1443.5 717.9 L1444.2 708.2 L1444.8 698.4 L1445.2 710.3 L1445.7 722.1 L1446.1 734.0 L1446.5 745.8 L1446.9 757.7 L1447.4 747.7 L1447.8 737.8 L1448.2 727.9 L1448.6 717.9 L1449.1 708.0 L1449.5 714.0 L1450.0 719.9 L1450.5 725.9 L1451.0 731.9 L1451.4 737.9 L1452.1 730.8 L1452.7 723.8 L1453.3 716.7 L1453.9 709.6 L1454.6 702.5 L1455.2 715.4 L1455.8 728.2 L1456.4 741.0 L1457.0 753.9 L1457.6 766.7 L1458.2 755.1 L1458.8 743.4 L1459.4 731.8 L1460.0 720.1 L1460.6 708.5 L1461.2 714.9 L1461.8 721.3 L1462.4 727.7 L1463.0 734.1 L1463.6 740.5 L1464.0 733.0 L1464.3 725.5 L1464.7 718.0 L1465.1 710.4 L1465.5 702.9 L1466.1 714.5 L1466.8 726.0 L1467.4 737.5 L1468.1 749.0 L1468.7 760.6 L1469.0 748.8 L1469.3 737.0 L1469.7 725.2 L1470.0 713.4 L1470.3 701.6 L1470.7 709.1 L1471.1 716.6 L1471.5 724.0 L1471.9 731.5 L1472.3 739.0 L1472.7 731.0 L1473.1 723.0 L1473.5 715.0 L1473.8 707.0 L1474.2 699.0 L1474.6 711.4 L1475.1 723.7 L1475.5 736.1 L1475.9 748.5 L1476.3 760.9 L1477.0 748.7 L1477.6 736.5 L1478.2 724.4 L1478.8 712.2 L1479.5 700.0 L1480.1 713.1 L1480.7 726.3 L1481.3 739.5 L1481.9 752.6 L1482.6 765.8 L1483.0 754.5 L1483.4 743.2 L1483.8 731.9 L1484.3 720.7 L1484.7 709.4 L1485.3 717.6 L1485.9 725.9 L1486.5 734.1 L1487.1 742.4 L1487.7 750.6 L1488.1 740.6 L1488.6 730.5 L1489.0 720.5 L1489.5 710.5 L1490.0 700.4 L1490.7 710.4 L1491.4 720.3 L1492.1 730.3 L1492.9 740.2 L1493.6 750.2 L1494.0 740.4 L1494.5 730.7 L1494.9 720.9 L1495.4 711.2 L1495.8 701.4 L1496.4 714.2 L1497.0 727.0 L1497.6 739.7 L1498.3 752.5 L1498.9 765.3 L1499.2 752.3 L1499.6 739.2 L1499.9 726.2 L1500.3 713.1 L1500.7 700.1 L1501.1 709.3 L1501.6 718.6 L1502.1 727.8 L1502.5 737.0 L1503.0 746.2 L1503.5 735.9 L1504.0 725.5 L1504.6 715.2 L1505.1 704.9 L1505.6 694.5 L1506.3 707.8 L1506.9 721.1 L1507.6 734.4 L1508.2 747.7 L1508.9 761.0 L1509.5 750.2 L1510.0 739.4 L1510.6 728.6 L1511.2 717.8 L1511.8 707.0 L1512.1 713.7 L1512.5 720.3 L1512.9 727.0 L1513.2 733.6 L1513.6 740.3 L1513.9 732.6 L1514.3 724.9 L1514.6 717.2 L1514.9 709.5 L1515.2 701.8 L1515.8 709.2 L1516.3 716.6 L1516.8 724.0 L1517.3 731.5 L1517.9 738.9 L1518.4 730.2 L1519.0 721.5 L1519.6 712.8 L1520.1 704.1 L1520.7 695.4 L1521.3 707.4 L1521.8 719.3 L1522.3 731.3 L1522.9 743.2 L1523.4 755.1 L1524.2 745.5 L1524.9 735.9 L1525.7 726.3 L1526.5 716.6 L1527.2 707.0 L1527.7 718.5 L1528.3 730.1 L1528.8 741.6 L1529.3 753.1 L1529.8 764.7 L1530.6 752.4 L1531.3 740.1 L1532.1 727.9 L1532.9 715.6 L1533.6 703.3 L1534.1 712.3 L1534.6 721.3 L1535.1 730.3 L1535.6 739.2 L1536.1 748.2 L1536.6 739.4 L1537.1 730.5 L1537.7 721.6 L1538.2 712.8 L1538.8 703.9 L1539.2 713.8 L1539.5 723.8 L1539.9 733.8 L1540.3 743.7 L1540.7 753.7 L1541.2 743.1 L1541.7 732.4 L1542.3 721.8 L1542.8 711.2 L1543.4 700.5 L1543.7 713.7 L1543.9 726.8 L1544.2 740.0 L1544.5 753.1 L1544.8 766.2 L1544.8 797.5 L1544.6 803.4 L1544.5 809.4 L1544.3 815.3 L1544.2 821.3 L1544.0 827.2 L1543.7 843.3 L1543.3 859.4 L1542.9 875.5 L1542.6 891.6 L1542.2 907.7 L1541.8 887.9 L1541.4 868.0 L1541.0 848.1 L1540.6 828.2 L1540.2 808.3 L1539.8 826.1 L1539.4 843.9 L1538.9 861.7 L1538.5 879.5 L1538.0 897.3 L1537.2 883.2 L1536.4 869.1 L1535.6 855.0 L1534.8 840.9 L1534.0 826.8 L1533.6 843.5 L1533.1 860.2 L1532.6 876.9 L1532.1 893.6 L1531.6 910.3 L1530.9 892.1 L1530.2 874.0 L1529.5 855.9 L1528.8 837.8 L1528.1 819.7 L1527.5 838.3 L1526.8 857.0 L1526.1 875.7 L1525.5 894.3 L1524.8 912.0 L1524.4 895.1 L1523.9 877.2 L1523.5 859.3 L1523.0 841.4 L1522.6 823.6 L1521.9 841.6 L1521.2 859.6 L1520.5 877.7 L1519.8 895.7 L1519.2 912.0 L1518.7 890.9 L1518.2 868.0 L1517.8 845.1 L1517.3 822.2 L1516.8 799.3 L1516.4 822.2 L1515.9 845.0 L1515.4 867.9 L1514.9 890.8 L1514.4 912.0 L1513.8 893.9 L1513.1 874.2 L1512.5 854.5 L1511.9 834.8 L1511.2 815.1 L1510.8 832.6 L1510.4 850.0 L1510.0 867.5 L1509.6 884.9 L1509.1 902.4 L1508.8 885.6 L1508.5 868.9 L1508.2 852.1 L1507.9 835.4 L1507.6 818.6 L1507.2 835.8 L1506.8 853.0 L1506.4 870.2 L1506.0 887.4 L1505.7 904.6 L1505.3 887.5 L1505.0 870.5 L1504.7 853.4 L1504.4 836.3 L1504.1 819.2 L1503.4 837.9 L1502.8 856.7 L1502.1 875.4 L1501.5 894.1 L1500.8 912.0 L1500.5 896.7 L1500.1 880.5 L1499.7 864.3 L1499.3 848.1 L1499.0 831.9 L1498.7 846.5 L1498.3 861.1 L1498.0 875.7 L1497.7 890.4 L1497.4 905.0 L1497.0 888.3 L1496.6 871.5 L1496.2 854.8 L1495.8 838.1 L1495.4 821.4 L1494.8 836.9 L1494.2 852.4 L1493.6 867.9 L1492.9 883.4 L1492.3 898.9 L1491.7 882.6 L1491.1 866.3 L1490.5 850.0 L1490.0 833.7 L1489.4 817.5 L1488.8 836.5 L1488.3 855.6 L1487.8 874.7 L1487.3 893.7 L1486.7 912.0 L1486.2 896.8 L1485.7 880.9 L1485.1 864.9 L1484.6 849.0 L1484.1 833.0 L1483.5 846.2 L1483.0 859.4 L1482.4 872.6 L1481.8 885.8 L1481.3 898.9 L1480.6 884.2 L1480.0 869.5 L1479.4 854.8 L1478.7 840.0 L1478.1 825.3 L1477.7 839.9 L1477.3 854.6 L1476.8 869.2 L1476.4 883.8 L1476.0 898.5 L1475.4 877.8 L1474.7 857.1 L1474.1 836.4 L1473.5 815.8 L1472.9 795.1 L1472.1 817.5 L1471.3 839.9 L1470.5 862.4 L1469.8 884.8 L1469.0 907.2 L1468.6 888.1 L1468.1 868.9 L1467.7 849.7 L1467.2 830.6 L1466.8 811.4 L1466.4 828.9 L1466.1 846.3 L1465.7 863.7 L1465.3 881.1 L1464.9 898.6 L1464.5 879.1 L1464.1 859.6 L1463.7 840.2 L1463.2 820.7 L1462.8 801.2 L1462.4 821.3 L1461.9 841.3 L1461.5 861.4 L1461.0 881.4 L1460.6 901.5 L1460.2 882.9 L1459.7 864.3 L1459.3 845.7 L1458.9 827.1 L1458.5 808.5 L1458.0 829.3 L1457.6 850.2 L1457.1 871.0 L1456.7 891.9 L1456.2 912.0 L1455.5 894.1 L1454.8 875.4 L1454.1 856.7 L1453.4 838.1 L1452.7 819.4 L1452.0 837.5 L1451.4 855.7 L1450.8 873.8 L1450.2 892.0 L1449.6 910.1 L1449.1 890.0 L1448.7 869.9 L1448.3 849.8 L1447.8 829.7 L1447.4 809.6 L1446.9 828.6 L1446.5 847.6 L1446.0 866.7 L1445.6 885.7 L1445.2 904.7 L1444.5 888.1 L1443.8 871.4 L1443.2 854.7 L1442.5 838.0 L1441.8 821.3 L1441.4 839.2 L1441.0 857.1 L1440.7 875.0 L1440.3 892.9 L1439.9 910.8 L1439.5 888.2 L1439.2 865.7 L1438.8 843.1 L1438.5 820.5 L1438.1 798.0 L1437.8 820.8 L1437.4 843.6 L1437.1 866.5 L1436.7 889.3 L1436.4 912.0 L1435.7 892.0 L1435.1 871.8 L1434.4 851.6 L1433.8 831.4 L1433.1 811.2 L1432.4 831.2 L1431.6 851.1 L1430.9 871.1 L1430.2 891.1 L1429.4 911.1 L1428.9 892.9 L1428.4 874.8 L1427.9 856.6 L1427.4 838.5 L1426.8 820.4 L1426.3 838.9 L1425.7 857.5 L1425.1 876.0 L1424.6 894.6 L1424.0 912.0 L1423.6 894.0 L1423.2 875.0 L1422.9 855.9 L1422.5 836.8 L1422.1 817.7 L1421.6 836.9 L1421.0 856.1 L1420.5 875.3 L1419.9 894.5 L1419.4 912.0 L1419.0 896.8 L1418.7 879.9 L1418.4 863.0 L1418.0 846.1 L1417.7 829.2 L1417.2 843.2 L1416.7 857.2 L1416.2 871.2 L1415.7 885.2 L1415.2 899.2 L1415.0 880.3 L1414.7 861.4 L1414.4 842.5 L1414.1 823.6 L1413.8 804.7 L1413.3 824.5 L1412.8 844.3 L1412.3 864.1 L1411.8 883.9 L1411.3 903.7 L1410.9 885.6 L1410.4 867.4 L1410.0 849.3 L1409.5 831.1 L1409.1 813.0 Z" fill="url(#g2)"/><rect x="1406.6" y="378" width="2" height="539" fill="#1a1a1a"/><rect x="1547.8" y="378" width="137.7" height="539" rx="5" fill="#cba412" stroke="#151515" stroke-width="1.5"/><path d="M1548.8 519.5 L1549.2 514.3 L1549.6 509.0 L1550.1 503.8 L1550.5 498.5 L1551.0 493.3 L1551.4 498.2 L1551.8 503.1 L1552.2 508.0 L1552.6 512.9 L1553.0 517.8 L1553.4 514.5 L1553.9 511.3 L1554.3 508.1 L1554.8 504.9 L1555.2 501.6 L1555.7 504.1 L1556.3 506.6 L1556.8 509.1 L1557.4 511.5 L1557.9 514.0 L1558.4 510.6 L1558.9 507.2 L1559.4 503.8 L1559.9 500.4 L1560.4 497.1 L1561.1 501.1 L1561.7 505.1 L1562.4 509.1 L1563.0 513.2 L1563.7 517.2 L1564.3 513.7 L1564.8 510.3 L1565.3 506.8 L1565.9 503.3 L1566.4 499.9 L1567.1 504.5 L1567.8 509.1 L1568.5 513.7 L1569.2 518.3 L1569.9 522.9 L1570.6 517.5 L1571.3 512.0 L1571.9 506.6 L1572.6 501.1 L1573.2 495.7 L1573.6 501.2 L1574.0 506.8 L1574.4 512.3 L1574.8 517.9 L1575.2 523.5 L1575.5 519.0 L1575.9 514.6 L1576.2 510.2 L1576.6 505.8 L1576.9 501.4 L1577.5 505.0 L1578.1 508.7 L1578.7 512.3 L1579.2 515.9 L1579.8 519.6 L1580.2 515.8 L1580.5 512.0 L1580.8 508.2 L1581.2 504.4 L1581.5 500.6 L1582.0 504.5 L1582.4 508.5 L1582.9 512.4 L1583.3 516.4 L1583.8 520.4 L1584.3 515.7 L1584.8 511.0 L1585.3 506.3 L1585.8 501.6 L1586.3 496.9 L1587.0 501.6 L1587.7 506.4 L1588.4 511.1 L1589.1 515.9 L1589.8 520.6 L1590.2 515.5 L1590.6 510.4 L1591.0 505.4 L1591.4 500.3 L1591.8 495.2 L1592.3 499.3 L1592.7 503.4 L1593.2 507.5 L1593.7 511.6 L1594.2 515.7 L1594.9 511.7 L1595.6 507.7 L1596.3 503.7 L1597.0 499.7 L1597.7 495.7 L1598.2 500.9 L1598.6 506.1 L1599.0 511.3 L1599.5 516.5 L1599.9 521.7 L1600.4 516.8 L1600.8 511.8 L1601.2 506.8 L1601.7 501.9 L1602.1 496.9 L1602.5 500.8 L1602.9 504.7 L1603.3 508.6 L1603.7 512.5 L1604.1 516.4 L1604.8 511.7 L1605.6 507.1 L1606.3 502.5 L1607.0 497.9 L1607.8 493.2 L1608.3 498.1 L1608.8 503.0 L1609.3 507.8 L1609.8 512.7 L1610.3 517.6 L1611.0 513.7 L1611.6 509.8 L1612.3 505.9 L1613.0 501.9 L1613.6 498.0 L1614.1 501.7 L1614.5 505.3 L1615.0 508.9 L1615.4 512.6 L1615.9 516.2 L1616.5 512.9 L1617.1 509.6 L1617.7 506.2 L1618.4 502.9 L1619.0 499.6 L1619.6 503.8 L1620.2 508.1 L1620.8 512.3 L1621.4 516.6 L1622.0 520.8 L1622.6 516.3 L1623.1 511.7 L1623.7 507.2 L1624.2 502.6 L1624.8 498.0 L1625.3 502.6 L1625.8 507.1 L1626.3 511.7 L1626.8 516.2 L1627.3 520.7 L1628.0 515.3 L1628.6 509.9 L1629.3 504.5 L1629.9 499.1 L1630.5 493.6 L1631.0 497.8 L1631.5 501.9 L1632.0 506.1 L1632.6 510.3 L1633.1 514.4 L1633.4 510.6 L1633.7 506.9 L1634.1 503.1 L1634.4 499.3 L1634.7 495.6 L1635.1 500.3 L1635.5 505.0 L1635.9 509.7 L1636.2 514.4 L1636.6 519.1 L1637.1 515.1 L1637.5 511.1 L1638.0 507.1 L1638.4 503.1 L1638.9 499.1 L1639.5 502.4 L1640.1 505.7 L1640.7 509.0 L1641.3 512.3 L1642.0 515.5 L1642.6 511.2 L1643.3 506.8 L1644.0 502.5 L1644.7 498.2 L1645.3 493.8 L1645.8 498.0 L1646.2 502.2 L1646.6 506.5 L1647.0 510.7 L1647.5 514.9 L1648.2 510.7 L1649.0 506.5 L1649.8 502.4 L1650.5 498.2 L1651.3 494.0 L1651.7 498.2 L1652.2 502.3 L1652.6 506.5 L1653.1 510.6 L1653.6 514.8 L1654.0 511.5 L1654.5 508.3 L1654.9 505.0 L1655.4 501.8 L1655.8 498.5 L1656.3 502.1 L1656.8 505.8 L1657.3 509.4 L1657.8 513.0 L1658.3 516.6 L1659.0 513.0 L1659.7 509.4 L1660.4 505.9 L1661.1 502.3 L1661.9 498.7 L1662.4 503.8 L1663.0 508.9 L1663.6 513.9 L1664.2 519.0 L1664.7 524.1 L1665.0 519.6 L1665.3 515.1 L1665.6 510.5 L1665.9 506.0 L1666.2 501.5 L1666.7 506.2 L1667.2 510.9 L1667.6 515.6 L1668.1 520.3 L1668.6 525.0 L1669.0 518.7 L1669.5 512.4 L1669.9 506.1 L1670.3 499.8 L1670.7 493.5 L1671.2 499.5 L1671.8 505.4 L1672.3 511.4 L1672.8 517.3 L1673.3 523.3 L1673.8 517.4 L1674.3 511.5 L1674.7 505.6 L1675.2 499.7 L1675.7 493.8 L1676.0 498.9 L1676.2 504.0 L1676.5 509.1 L1676.8 514.2 L1677.1 519.4 L1677.6 515.3 L1678.0 511.2 L1678.5 507.4 L1679.0 506.2 L1679.4 505.5 L1680.0 512.7 L1680.5 519.0 L1681.1 524.4 L1681.7 529.0 L1682.2 532.7 L1682.7 534.4 L1683.1 535.9 L1683.6 537.1 L1684.0 538.2 L1684.4 538.5 L1684.4 539.5 L1684.4 539.6 L1684.3 539.8 L1684.2 539.9 L1684.2 540.0 L1684.1 540.3 L1683.7 542.5 L1683.2 545.4 L1682.8 548.9 L1682.4 553.1 L1681.9 557.8 L1681.1 561.5 L1680.3 564.1 L1679.5 565.5 L1678.7 565.7 L1677.9 562.7 L1677.4 565.3 L1676.9 568.0 L1676.4 570.7 L1675.9 573.4 L1675.4 576.1 L1675.2 572.3 L1674.9 568.6 L1674.6 564.8 L1674.3 561.1 L1674.1 557.4 L1673.6 561.3 L1673.2 565.2 L1672.7 569.1 L1672.3 573.0 L1671.8 577.0 L1671.6 572.3 L1671.3 567.7 L1671.1 563.0 L1670.8 558.4 L1670.5 553.7 L1670.2 558.4 L1669.8 563.1 L1669.4 567.8 L1669.1 572.4 L1668.7 577.1 L1668.0 574.2 L1667.4 571.2 L1666.8 568.3 L1666.1 565.4 L1665.5 562.5 L1664.8 566.4 L1664.0 570.2 L1663.3 574.1 L1662.5 578.0 L1661.8 581.8 L1661.3 576.1 L1660.8 570.4 L1660.3 564.6 L1659.8 558.9 L1659.3 553.1 L1658.6 558.6 L1657.9 564.1 L1657.2 569.6 L1656.5 575.0 L1655.8 580.5 L1655.2 577.2 L1654.7 573.8 L1654.1 570.4 L1653.5 567.1 L1653.0 563.7 L1652.4 566.4 L1651.9 569.1 L1651.3 571.8 L1650.8 574.5 L1650.2 577.2 L1649.9 573.2 L1649.5 569.2 L1649.2 565.3 L1648.9 561.3 L1648.5 557.3 L1648.2 562.0 L1647.9 566.8 L1647.6 571.5 L1647.3 576.2 L1647.0 581.0 L1646.5 576.4 L1646.0 571.9 L1645.5 567.3 L1645.0 562.8 L1644.6 558.2 L1644.1 562.7 L1643.7 567.2 L1643.3 571.7 L1642.9 576.2 L1642.5 580.7 L1642.2 577.3 L1641.8 574.0 L1641.5 570.7 L1641.2 567.3 L1640.8 564.0 L1640.4 567.8 L1640.0 571.7 L1639.6 575.6 L1639.2 579.5 L1638.7 583.3 L1638.5 578.7 L1638.2 574.0 L1637.9 569.4 L1637.6 564.7 L1637.3 560.1 L1636.8 564.2 L1636.3 568.3 L1635.8 572.4 L1635.4 576.4 L1634.9 580.5 L1634.4 575.7 L1634.0 570.8 L1633.6 566.0 L1633.1 561.1 L1632.7 556.3 L1632.2 560.5 L1631.6 564.7 L1631.1 568.9 L1630.6 573.1 L1630.1 577.3 L1629.8 572.6 L1629.5 567.9 L1629.2 563.2 L1628.9 558.5 L1628.6 553.7 L1628.2 559.7 L1627.8 565.7 L1627.4 571.7 L1626.9 577.7 L1626.5 583.7 L1625.9 579.0 L1625.3 574.4 L1624.7 569.8 L1624.1 565.2 L1623.5 560.6 L1623.1 564.7 L1622.7 568.9 L1622.4 573.1 L1622.0 577.3 L1621.7 581.5 L1621.0 577.0 L1620.4 572.5 L1619.8 568.0 L1619.1 563.5 L1618.5 559.0 L1618.1 564.2 L1617.8 569.3 L1617.4 574.5 L1617.0 579.6 L1616.6 584.8 L1616.1 579.9 L1615.6 575.0 L1615.0 570.0 L1614.5 565.1 L1613.9 560.2 L1613.1 563.7 L1612.3 567.2 L1611.5 570.8 L1610.7 574.3 L1609.9 577.8 L1609.5 573.3 L1609.1 568.8 L1608.6 564.2 L1608.2 559.7 L1607.7 555.2 L1607.4 560.2 L1607.1 565.1 L1606.7 570.1 L1606.4 575.0 L1606.1 580.0 L1605.5 575.7 L1604.9 571.4 L1604.4 567.1 L1603.8 562.8 L1603.3 558.5 L1602.9 562.4 L1602.6 566.3 L1602.2 570.1 L1601.8 574.0 L1601.5 577.8 L1601.0 573.4 L1600.5 568.9 L1600.0 564.4 L1599.5 560.0 L1599.0 555.5 L1598.6 561.2 L1598.1 566.9 L1597.6 572.6 L1597.1 578.3 L1596.7 584.0 L1596.0 578.6 L1595.4 573.2 L1594.7 567.8 L1594.1 562.5 L1593.5 557.1 L1593.0 562.2 L1592.5 567.4 L1592.0 572.5 L1591.5 577.7 L1591.0 582.8 L1590.6 578.3 L1590.1 573.7 L1589.7 569.1 L1589.3 564.5 L1588.9 559.9 L1588.4 563.9 L1587.9 567.8 L1587.4 571.7 L1587.0 575.7 L1586.5 579.6 L1586.1 574.6 L1585.7 569.5 L1585.3 564.5 L1584.9 559.4 L1584.5 554.4 L1583.8 559.8 L1583.0 565.3 L1582.3 570.7 L1581.6 576.1 L1580.9 581.5 L1580.4 577.5 L1579.8 573.5 L1579.3 569.4 L1578.8 565.4 L1578.2 561.4 L1577.7 564.8 L1577.2 568.2 L1576.7 571.6 L1576.1 575.0 L1575.6 578.4 L1575.0 573.4 L1574.3 568.4 L1573.7 563.5 L1573.0 558.5 L1572.4 553.5 L1571.9 558.0 L1571.4 562.5 L1570.9 567.0 L1570.4 571.5 L1569.9 576.1 L1569.6 572.3 L1569.2 568.6 L1568.9 564.8 L1568.6 561.1 L1568.3 557.3 L1567.9 561.3 L1567.6 565.2 L1567.3 569.1 L1567.0 573.1 L1566.6 577.0 L1566.1 572.6 L1565.5 568.2 L1564.9 563.8 L1564.4 559.4 L1563.8 555.0 L1563.0 559.7 L1562.3 564.5 L1561.5 569.2 L1560.7 573.9 L1560.0 578.7 L1559.5 575.1 L1559.1 571.5 L1558.6 567.9 L1558.2 564.2 L1557.8 560.6 L1557.4 564.2 L1557.0 567.8 L1556.7 571.3 L1556.3 574.9 L1556.0 578.5 L1555.5 573.9 L1555.1 569.3 L1554.7 564.7 L1554.2 560.0 L1553.8 555.4 L1553.3 561.1 L1552.9 566.7 L1552.4 572.3 L1552.0 577.9 L1551.5 583.5 L1551.0 578.5 L1550.4 573.5 L1549.9 568.5 L1549.3 563.5 L1548.8 558.5 Z" fill="#fdeeae"/><path d="M1548.8 747.0 L1549.2 737.1 L1549.7 727.2 L1550.2 717.3 L1550.7 707.4 L1551.1 697.5 L1551.7 707.3 L1552.4 717.0 L1553.0 726.8 L1553.6 736.6 L1554.2 746.3 L1554.5 737.6 L1554.9 729.0 L1555.2 720.3 L1555.5 711.7 L1555.9 703.0 L1556.5 711.0 L1557.1 718.9 L1557.7 726.8 L1558.3 734.8 L1559.0 742.7 L1559.3 735.4 L1559.7 728.1 L1560.1 720.8 L1560.4 713.6 L1560.8 706.3 L1561.3 712.7 L1561.7 719.1 L1562.2 725.5 L1562.6 732.0 L1563.1 738.4 L1563.8 729.4 L1564.4 720.5 L1565.1 711.5 L1565.8 702.6 L1566.5 693.6 L1567.0 702.9 L1567.4 712.1 L1567.9 721.4 L1568.4 730.6 L1568.8 739.9 L1569.3 732.7 L1569.7 725.5 L1570.1 718.3 L1570.6 711.1 L1571.0 703.9 L1571.8 714.3 L1572.6 724.6 L1573.4 734.9 L1574.1 745.2 L1574.9 755.5 L1575.3 744.6 L1575.7 733.6 L1576.1 722.7 L1576.5 711.8 L1576.9 700.8 L1577.4 707.7 L1577.8 714.6 L1578.3 721.5 L1578.7 728.4 L1579.2 735.3 L1579.6 727.1 L1580.0 718.8 L1580.4 710.6 L1580.8 702.3 L1581.2 694.1 L1581.7 707.8 L1582.2 721.5 L1582.6 735.2 L1583.1 748.9 L1583.6 762.6 L1583.9 749.2 L1584.1 735.9 L1584.4 722.6 L1584.6 709.2 L1584.9 695.9 L1585.3 704.4 L1585.8 712.8 L1586.2 721.2 L1586.7 729.7 L1587.2 738.1 L1587.6 729.9 L1588.0 721.6 L1588.5 713.3 L1588.9 705.0 L1589.3 696.7 L1590.0 709.2 L1590.6 721.7 L1591.2 734.2 L1591.8 746.7 L1592.4 759.2 L1593.2 746.5 L1594.0 733.8 L1594.7 721.0 L1595.5 708.3 L1596.3 695.6 L1596.7 708.3 L1597.1 720.9 L1597.5 733.6 L1597.9 746.2 L1598.3 758.9 L1598.7 745.8 L1599.1 732.7 L1599.5 719.7 L1599.8 706.6 L1600.2 693.5 L1600.7 702.6 L1601.2 711.6 L1601.7 720.7 L1602.2 729.8 L1602.7 738.8 L1603.1 732.8 L1603.5 726.8 L1603.9 720.7 L1604.3 714.7 L1604.8 708.7 L1605.3 714.8 L1605.8 721.0 L1606.4 727.1 L1606.9 733.3 L1607.4 739.4 L1607.9 731.5 L1608.4 723.7 L1608.8 715.8 L1609.3 708.0 L1609.7 700.1 L1610.1 709.1 L1610.5 718.1 L1610.9 727.1 L1611.3 736.1 L1611.7 745.2 L1612.2 737.5 L1612.6 729.9 L1613.1 722.3 L1613.6 714.6 L1614.0 707.0 L1614.9 714.3 L1615.7 721.5 L1616.5 728.8 L1617.3 736.0 L1618.1 743.3 L1618.5 736.3 L1619.0 729.3 L1619.4 722.2 L1619.9 715.2 L1620.3 708.2 L1620.6 712.6 L1620.8 717.1 L1621.1 721.5 L1621.4 725.9 L1621.6 730.3 L1622.3 725.7 L1623.0 721.0 L1623.7 716.4 L1624.4 711.7 L1625.1 707.1 L1625.5 717.8 L1626.0 728.6 L1626.4 739.3 L1626.9 750.1 L1627.4 760.8 L1628.0 747.3 L1628.6 733.7 L1629.2 720.2 L1629.8 706.7 L1630.4 693.1 L1631.1 706.9 L1631.8 720.7 L1632.5 734.4 L1633.2 748.2 L1633.9 762.0 L1634.4 748.9 L1634.9 735.8 L1635.5 722.7 L1636.0 709.6 L1636.6 696.5 L1637.0 708.0 L1637.5 719.4 L1638.0 730.9 L1638.5 742.4 L1638.9 753.8 L1639.5 741.5 L1640.1 729.1 L1640.6 716.8 L1641.2 704.5 L1641.8 692.1 L1642.1 705.2 L1642.5 718.2 L1642.8 731.3 L1643.2 744.4 L1643.5 757.4 L1643.9 747.2 L1644.3 737.0 L1644.7 726.7 L1645.1 716.5 L1645.5 706.3 L1646.0 715.1 L1646.6 724.0 L1647.1 732.8 L1647.7 741.7 L1648.2 750.5 L1648.8 741.4 L1649.4 732.2 L1650.1 723.0 L1650.7 713.9 L1651.3 704.7 L1651.8 715.6 L1652.3 726.5 L1652.9 737.4 L1653.4 748.3 L1653.9 759.2 L1654.5 746.3 L1655.1 733.4 L1655.7 720.5 L1656.3 707.6 L1656.9 694.7 L1657.5 703.3 L1658.1 711.9 L1658.6 720.6 L1659.2 729.2 L1659.7 737.9 L1660.3 732.0 L1660.9 726.1 L1661.4 720.2 L1662.0 714.3 L1662.6 708.4 L1663.1 715.1 L1663.7 721.9 L1664.3 728.6 L1664.8 735.4 L1665.4 742.2 L1665.9 734.6 L1666.4 727.1 L1666.9 719.6 L1667.4 712.0 L1667.9 704.5 L1668.5 712.4 L1669.1 720.4 L1669.7 728.3 L1670.3 736.2 L1670.9 744.2 L1671.4 736.5 L1672.0 728.8 L1672.5 721.1 L1673.1 713.5 L1673.6 705.8 L1674.3 710.8 L1675.0 715.8 L1675.7 720.8 L1676.3 725.8 L1677.0 730.8 L1677.5 723.6 L1678.1 716.3 L1678.6 709.0 L1679.1 701.7 L1679.7 694.5 L1680.2 707.9 L1680.7 721.3 L1681.2 734.7 L1681.8 748.1 L1682.3 761.6 L1682.7 750.2 L1683.1 738.9 L1683.6 727.6 L1684.0 716.3 L1684.4 704.9 L1684.4 716.8 L1684.4 728.8 L1684.4 740.7 L1684.4 752.6 L1684.4 764.5 L1684.4 799.5 L1684.0 819.8 L1683.6 840.1 L1683.2 860.4 L1682.7 880.8 L1682.3 901.1 L1682.0 885.1 L1681.6 869.2 L1681.2 853.2 L1680.9 837.3 L1680.5 821.3 L1679.9 839.7 L1679.3 858.0 L1678.7 876.4 L1678.1 894.7 L1677.5 912.0 L1676.9 895.9 L1676.3 878.6 L1675.8 861.4 L1675.2 844.2 L1674.7 826.9 L1674.2 842.0 L1673.8 857.1 L1673.3 872.2 L1672.9 887.3 L1672.4 902.4 L1671.9 889.5 L1671.3 876.7 L1670.7 863.9 L1670.2 851.0 L1669.6 838.2 L1669.2 851.3 L1668.8 864.3 L1668.4 877.4 L1668.0 890.4 L1667.6 903.5 L1667.2 883.1 L1666.7 862.8 L1666.3 842.4 L1665.9 822.1 L1665.4 801.8 L1665.1 823.0 L1664.7 844.2 L1664.4 865.5 L1664.0 886.7 L1663.7 908.0 L1663.1 887.5 L1662.5 867.1 L1661.9 846.6 L1661.3 826.2 L1660.7 805.7 L1660.1 825.3 L1659.5 844.8 L1658.9 864.3 L1658.3 883.8 L1657.7 903.4 L1657.3 889.0 L1657.0 874.6 L1656.6 860.2 L1656.2 845.9 L1655.9 831.5 L1655.3 845.2 L1654.7 858.9 L1654.1 872.6 L1653.5 886.3 L1653.0 900.0 L1652.5 880.9 L1652.0 861.8 L1651.5 842.7 L1651.0 823.6 L1650.5 804.4 L1650.1 825.8 L1649.6 847.1 L1649.2 868.5 L1648.8 889.8 L1648.4 911.2 L1648.0 888.4 L1647.7 865.6 L1647.4 842.9 L1647.0 820.1 L1646.7 797.3 L1645.9 819.6 L1645.1 841.8 L1644.3 864.0 L1643.5 886.2 L1642.7 908.5 L1642.2 890.0 L1641.7 871.6 L1641.2 853.2 L1640.8 834.7 L1640.3 816.3 L1639.7 834.7 L1639.1 853.1 L1638.5 871.5 L1637.9 889.9 L1637.3 908.3 L1636.8 888.2 L1636.2 868.1 L1635.6 848.0 L1635.1 827.8 L1634.5 807.7 L1633.7 826.5 L1632.9 845.3 L1632.1 864.1 L1631.3 882.9 L1630.5 901.7 L1630.0 885.8 L1629.5 870.0 L1629.0 854.1 L1628.6 838.2 L1628.1 822.3 L1627.6 838.2 L1627.2 854.1 L1626.7 869.9 L1626.2 885.8 L1625.8 901.7 L1625.1 883.6 L1624.5 865.4 L1623.8 847.3 L1623.2 829.2 L1622.5 811.1 L1621.9 831.4 L1621.4 851.8 L1620.8 872.1 L1620.2 892.5 L1619.7 912.0 L1619.3 890.1 L1618.9 867.3 L1618.4 844.5 L1618.0 821.7 L1617.6 799.0 L1617.0 820.2 L1616.4 841.5 L1615.8 862.8 L1615.2 884.0 L1614.6 905.3 L1613.9 886.3 L1613.2 867.3 L1612.6 848.2 L1611.9 829.2 L1611.2 810.2 L1610.8 829.0 L1610.4 847.9 L1610.0 866.7 L1609.7 885.5 L1609.3 904.3 L1608.8 883.8 L1608.4 863.3 L1607.9 842.8 L1607.5 822.3 L1607.0 801.8 L1606.7 822.9 L1606.3 844.1 L1606.0 865.2 L1605.7 886.3 L1605.3 907.4 L1604.7 885.3 L1604.2 863.3 L1603.6 841.2 L1603.0 819.1 L1602.4 797.0 L1601.8 817.7 L1601.2 838.4 L1600.5 859.1 L1599.9 879.7 L1599.3 900.4 L1598.8 886.5 L1598.3 872.6 L1597.8 858.7 L1597.3 844.8 L1596.8 830.9 L1596.1 844.9 L1595.4 858.9 L1594.7 872.9 L1594.0 886.9 L1593.3 900.9 L1592.8 888.3 L1592.3 875.7 L1591.9 863.0 L1591.4 850.4 L1591.0 837.8 L1590.5 850.7 L1590.1 863.6 L1589.6 876.5 L1589.2 889.3 L1588.7 902.2 L1588.3 882.3 L1587.9 862.3 L1587.5 842.4 L1587.1 822.5 L1586.7 802.5 L1586.3 824.6 L1586.0 846.7 L1585.6 868.8 L1585.2 890.9 L1584.9 912.0 L1584.5 896.8 L1584.1 880.7 L1583.7 864.5 L1583.3 848.3 L1582.9 832.1 L1582.4 846.7 L1581.9 861.3 L1581.3 875.9 L1580.8 890.5 L1580.3 905.1 L1580.0 889.1 L1579.7 873.0 L1579.4 857.0 L1579.0 840.9 L1578.7 824.9 L1578.1 842.2 L1577.6 859.6 L1577.0 876.9 L1576.5 894.2 L1575.9 911.6 L1575.3 890.7 L1574.7 869.9 L1574.1 849.1 L1573.5 828.3 L1572.9 807.5 L1572.5 826.6 L1572.1 845.6 L1571.6 864.7 L1571.2 883.8 L1570.7 902.9 L1570.4 883.1 L1570.0 863.3 L1569.6 843.5 L1569.2 823.7 L1568.8 803.9 L1568.2 824.4 L1567.5 844.9 L1566.9 865.4 L1566.3 885.9 L1565.7 906.4 L1565.1 892.3 L1564.4 878.2 L1563.8 864.1 L1563.2 850.0 L1562.5 835.9 L1562.2 850.9 L1561.8 866.0 L1561.5 881.0 L1561.1 896.0 L1560.8 911.1 L1560.4 892.3 L1560.0 873.6 L1559.6 854.8 L1559.2 836.0 L1558.8 817.3 L1558.4 835.7 L1558.1 854.2 L1557.7 872.6 L1557.3 891.1 L1556.9 909.5 L1556.3 891.4 L1555.8 873.3 L1555.3 855.2 L1554.8 837.1 L1554.2 818.9 L1553.6 837.4 L1552.9 856.0 L1552.2 874.5 L1551.5 893.0 L1550.8 911.5 L1550.4 892.6 L1550.0 873.7 L1549.6 854.8 L1549.2 835.9 L1548.8 817.0 Z" fill="url(#g2)"/><rect x="1546.3" y="378" width="2" height="539" fill="#1a1a1a"/></svg>
<div class="t" style="left:579.0px;top:383.5px;font-size:19.5px;color:#fcf5d8;font-weight:normal;-webkit-text-stroke:0.7px #fcf5d8">Intro</div>
<div class="t" style="left:718.6800000000001px;top:383.5px;font-size:19.5px;color:#fcf5d8;font-weight:normal;-webkit-text-stroke:0.7px #fcf5d8">Verse</div>
<div class="t" style="left:858.36px;top:383.5px;font-size:19.5px;color:#fcf5d8;font-weight:normal;-webkit-text-stroke:0.7px #fcf5d8">Chorus</div>
<div class="t" style="left:998.04px;top:383.5px;font-size:19.5px;color:#fcf5d8;font-weight:normal;-webkit-text-stroke:0.7px #fcf5d8">Verse 2</div>
<div class="t" style="left:1137.72px;top:383.5px;font-size:19.5px;color:#fcf5d8;font-weight:normal;-webkit-text-stroke:0.7px #fcf5d8">Chorus</div>
<div class="t" style="left:1277.4px;top:383.5px;font-size:19.5px;color:#fcf5d8;font-weight:normal;-webkit-text-stroke:0.7px #fcf5d8">Bridge</div>
<div class="t" style="left:1417.08px;top:383.5px;font-size:19.5px;color:#fcf5d8;font-weight:normal;-webkit-text-stroke:0.7px #fcf5d8">Chorus</div>
<div class="t" style="left:1556.76px;top:383.5px;font-size:19.5px;color:#fcf5d8;font-weight:normal;-webkit-text-stroke:0.7px #fcf5d8">Outro</div>
<div class="a" style="left:553px;top:918px;width:1362px;height:92px;background:#2e2e2e"></div>
<div class="a" style="left:1498.2px;top:100px;width:1.6px;height:910px;background:#ececec"></div>
<svg class="a" style="left:1484px;top:98px" width="30" height="32"><path d="M1 6 Q1 1 6 1 L24 1 Q29 1 29 6 L29 15 L15 29.5 L1 15 Z" fill="#bcbcbc"/><rect x="14.2" y="5" width="1.6" height="27" fill="#fff"/></svg>
<div class="a" style="left:0;top:0;width:1px;height:1010px;background:#dfe8f2"></div>
<div class="a" style="left:1px;top:4px;width:1px;height:1010px;background:#1a1a1a"></div>
<div class="a" style="left:1915px;top:4px;width:1px;height:1010px;background:#1d2230"></div>
<div class="a" style="left:1916px;top:0;width:4px;height:1010px;background:#b4d6f7"></div></body></html>
